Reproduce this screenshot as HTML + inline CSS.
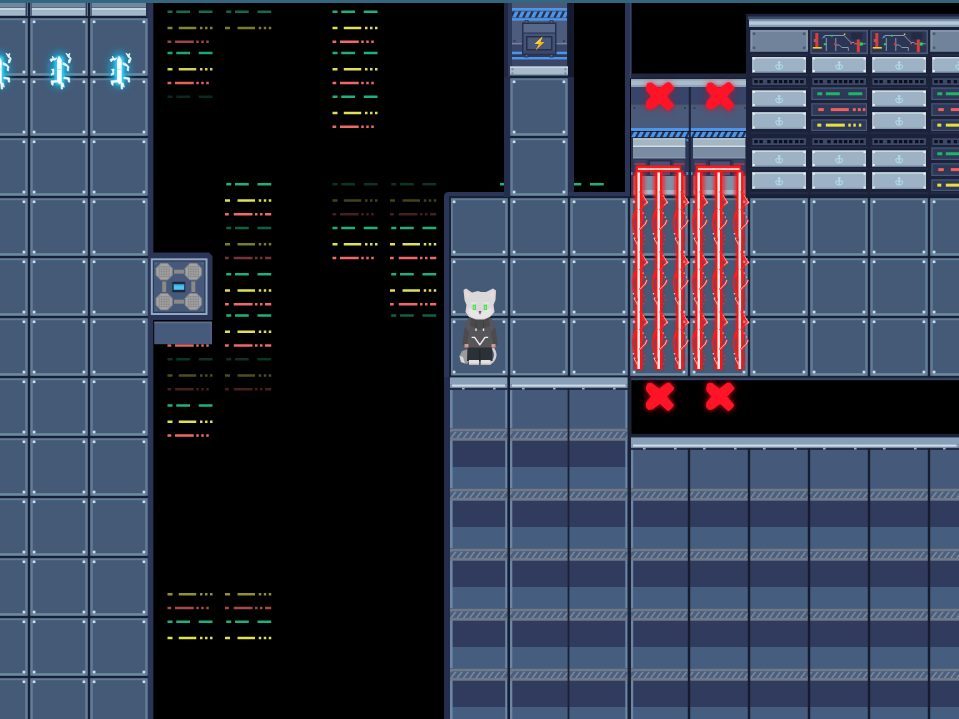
<!DOCTYPE html>
<html lang="en"><head><meta charset="utf-8"><title>scene</title>
<style>
html,body{margin:0;padding:0;background:#000;overflow:hidden;font-family:"Liberation Sans",sans-serif}
svg{display:block}
</style></head><body>
<svg width="959" height="719" viewBox="0 0 959 719">

<defs>
<pattern id="tile" patternUnits="userSpaceOnUse" x="29" y="17" width="60" height="60">
  <rect width="60" height="60" fill="#445a76"/>
  <rect x="0" y="0" width="60" height="3.2" fill="#607c97"/>
  <rect x="0" y="56.2" width="60" height="3.8" fill="#6a8aa0"/>
  <rect x="0" y="0" width="3.8" height="60" fill="#607c97"/>
  <rect x="56.2" y="0" width="3.8" height="60" fill="#607c97"/>
  <rect x="0" y="0" width="60" height="1.2" fill="#172034"/>
  <rect x="0" y="58.8" width="60" height="1.2" fill="#172034"/>
  <rect x="0" y="0" width="1.2" height="60" fill="#172034"/>
  <rect x="58.8" y="0" width="1.2" height="60" fill="#172034"/>
  <rect x="3.8" y="3.5" width="2.6" height="2.6" fill="#cfe0ee"/>
  <rect x="53.6" y="3.5" width="2.6" height="2.6" fill="#cfe0ee"/>
  <rect x="3.8" y="53.7" width="2.6" height="2.6" fill="#cfe0ee"/>
  <rect x="53.6" y="53.7" width="2.6" height="2.6" fill="#cfe0ee"/>
</pattern>
<pattern id="hazb" patternUnits="userSpaceOnUse" x="0" y="0" width="6.25" height="6.5">
  <rect width="6.25" height="6.5" fill="#2b3555"/>
  <path d="M-1,6.5 L2.2,0 L5.4,0 L2.2,6.5 Z M5.25,6.5 L8.45,0 L11.65,0 L8.45,6.5 Z M-7.25,6.5 L-4.05,0 L-0.85,0 L-4.05,6.5 Z" fill="#4c96ea"/>
</pattern>
<pattern id="hazg" patternUnits="userSpaceOnUse" x="0" y="0" width="6.25" height="6">
  <rect width="6.25" height="6" fill="#4d5873"/>
  <path d="M-1,6 L2,0 L4.6,0 L1.6,6 Z M5.25,6 L8.25,0 L10.85,0 L7.85,6 Z M-7.25,6 L-4.25,0 L-1.65,0 L-4.65,6 Z" fill="#8892a0"/>
</pattern>
<filter id="glow" x="-50%" y="-50%" width="200%" height="200%"><feGaussianBlur stdDeviation="2.2"/></filter>
<filter id="glow1" x="-50%" y="-50%" width="200%" height="200%"><feGaussianBlur stdDeviation="1.2"/></filter>
<filter id="glow3" x="-80%" y="-80%" width="260%" height="260%"><feGaussianBlur stdDeviation="4"/></filter>
</defs>

<rect x="0" y="0" width="959" height="719" fill="#000"/>
<rect x="167.5" y="10.5" width="5" height="2.5" fill="#136d4e"/>
<rect x="176.25" y="10.5" width="13.75" height="2.5" fill="#136d4e"/>
<rect x="198.75" y="10.5" width="13.75" height="2.5" fill="#136d4e"/>
<rect x="167.5" y="26.75" width="5" height="2.5" fill="#868630"/>
<rect x="178.75" y="26.75" width="17.5" height="2.5" fill="#868630"/>
<rect x="200" y="26.75" width="2.5" height="2.5" fill="#868630"/>
<rect x="205" y="26.75" width="2.5" height="2.5" fill="#868630"/>
<rect x="210" y="26.75" width="2.5" height="2.5" fill="#868630"/>
<rect x="167.5" y="40.5" width="3.75" height="2.5" fill="#9e4444"/>
<rect x="175" y="40.5" width="18.75" height="2.5" fill="#9e4444"/>
<rect x="196.25" y="40.5" width="2.5" height="2.5" fill="#9e4444"/>
<rect x="201.25" y="40.5" width="2.5" height="2.5" fill="#9e4444"/>
<rect x="206.25" y="40.5" width="2.5" height="2.5" fill="#9e4444"/>
<rect x="167.5" y="51.75" width="5" height="2.5" fill="#1da778"/>
<rect x="176.25" y="51.75" width="13.75" height="2.5" fill="#1da778"/>
<rect x="198.75" y="51.75" width="13.75" height="2.5" fill="#1da778"/>
<rect x="167.5" y="68" width="5" height="2.5" fill="#d4d44c"/>
<rect x="178.75" y="68" width="17.5" height="2.5" fill="#d4d44c"/>
<rect x="200" y="68" width="2.5" height="2.5" fill="#d4d44c"/>
<rect x="205" y="68" width="2.5" height="2.5" fill="#d4d44c"/>
<rect x="210" y="68" width="2.5" height="2.5" fill="#d4d44c"/>
<rect x="167.5" y="81.75" width="3.75" height="2.5" fill="#e46262"/>
<rect x="175" y="81.75" width="18.75" height="2.5" fill="#e46262"/>
<rect x="196.25" y="81.75" width="2.5" height="2.5" fill="#e46262"/>
<rect x="201.25" y="81.75" width="2.5" height="2.5" fill="#e46262"/>
<rect x="206.25" y="81.75" width="2.5" height="2.5" fill="#e46262"/>
<rect x="167.5" y="95.5" width="5" height="2.5" fill="#072c1f"/>
<rect x="176.25" y="95.5" width="13.75" height="2.5" fill="#072c1f"/>
<rect x="198.75" y="95.5" width="13.75" height="2.5" fill="#072c1f"/>
<rect x="167.5" y="344.25" width="3.75" height="2.5" fill="#e46262"/>
<rect x="175" y="344.25" width="18.75" height="2.5" fill="#e46262"/>
<rect x="196.25" y="344.25" width="2.5" height="2.5" fill="#e46262"/>
<rect x="201.25" y="344.25" width="2.5" height="2.5" fill="#e46262"/>
<rect x="206.25" y="344.25" width="2.5" height="2.5" fill="#e46262"/>
<rect x="167.5" y="358" width="5" height="2.5" fill="#093426"/>
<rect x="176.25" y="358" width="13.75" height="2.5" fill="#093426"/>
<rect x="198.75" y="358" width="13.75" height="2.5" fill="#093426"/>
<rect x="167.5" y="374.25" width="5" height="2.5" fill="#4e4e1c"/>
<rect x="178.75" y="374.25" width="17.5" height="2.5" fill="#4e4e1c"/>
<rect x="200" y="374.25" width="2.5" height="2.5" fill="#4e4e1c"/>
<rect x="205" y="374.25" width="2.5" height="2.5" fill="#4e4e1c"/>
<rect x="210" y="374.25" width="2.5" height="2.5" fill="#4e4e1c"/>
<rect x="167.5" y="388" width="3.75" height="2.5" fill="#481f1f"/>
<rect x="175" y="388" width="18.75" height="2.5" fill="#481f1f"/>
<rect x="196.25" y="388" width="2.5" height="2.5" fill="#481f1f"/>
<rect x="201.25" y="388" width="2.5" height="2.5" fill="#481f1f"/>
<rect x="206.25" y="388" width="2.5" height="2.5" fill="#481f1f"/>
<rect x="167.5" y="404.25" width="5" height="2.5" fill="#1fb07f"/>
<rect x="176.25" y="404.25" width="13.75" height="2.5" fill="#1fb07f"/>
<rect x="198.75" y="404.25" width="13.75" height="2.5" fill="#1fb07f"/>
<rect x="167.5" y="420.5" width="5" height="2.5" fill="#e0e050"/>
<rect x="178.75" y="420.5" width="17.5" height="2.5" fill="#e0e050"/>
<rect x="200" y="420.5" width="2.5" height="2.5" fill="#e0e050"/>
<rect x="205" y="420.5" width="2.5" height="2.5" fill="#e0e050"/>
<rect x="210" y="420.5" width="2.5" height="2.5" fill="#e0e050"/>
<rect x="167.5" y="434.25" width="3.75" height="2.5" fill="#f06868"/>
<rect x="175" y="434.25" width="18.75" height="2.5" fill="#f06868"/>
<rect x="196.25" y="434.25" width="2.5" height="2.5" fill="#f06868"/>
<rect x="201.25" y="434.25" width="2.5" height="2.5" fill="#f06868"/>
<rect x="206.25" y="434.25" width="2.5" height="2.5" fill="#f06868"/>
<rect x="167.5" y="593" width="5" height="2.5" fill="#919134"/>
<rect x="178.75" y="593" width="17.5" height="2.5" fill="#919134"/>
<rect x="200" y="593" width="2.5" height="2.5" fill="#919134"/>
<rect x="205" y="593" width="2.5" height="2.5" fill="#919134"/>
<rect x="210" y="593" width="2.5" height="2.5" fill="#919134"/>
<rect x="167.5" y="606.75" width="3.75" height="2.5" fill="#a84848"/>
<rect x="175" y="606.75" width="18.75" height="2.5" fill="#a84848"/>
<rect x="196.25" y="606.75" width="2.5" height="2.5" fill="#a84848"/>
<rect x="201.25" y="606.75" width="2.5" height="2.5" fill="#a84848"/>
<rect x="206.25" y="606.75" width="2.5" height="2.5" fill="#a84848"/>
<rect x="167.5" y="620.5" width="5" height="2.5" fill="#1fb07f"/>
<rect x="176.25" y="620.5" width="13.75" height="2.5" fill="#1fb07f"/>
<rect x="198.75" y="620.5" width="13.75" height="2.5" fill="#1fb07f"/>
<rect x="167.5" y="636.75" width="5" height="2.5" fill="#e0e050"/>
<rect x="178.75" y="636.75" width="17.5" height="2.5" fill="#e0e050"/>
<rect x="200" y="636.75" width="2.5" height="2.5" fill="#e0e050"/>
<rect x="205" y="636.75" width="2.5" height="2.5" fill="#e0e050"/>
<rect x="210" y="636.75" width="2.5" height="2.5" fill="#e0e050"/>
<rect x="226.25" y="10.5" width="5" height="2.5" fill="#12694c"/>
<rect x="235" y="10.5" width="13.75" height="2.5" fill="#12694c"/>
<rect x="257.5" y="10.5" width="13.75" height="2.5" fill="#12694c"/>
<rect x="225" y="26.75" width="5" height="2.5" fill="#7b7b2c"/>
<rect x="237.5" y="26.75" width="17.5" height="2.5" fill="#7b7b2c"/>
<rect x="258.75" y="26.75" width="2.5" height="2.5" fill="#7b7b2c"/>
<rect x="263.75" y="26.75" width="2.5" height="2.5" fill="#7b7b2c"/>
<rect x="268.75" y="26.75" width="2.5" height="2.5" fill="#7b7b2c"/>
<rect x="226.25" y="183" width="5" height="2.5" fill="#1fb07f"/>
<rect x="235" y="183" width="13.75" height="2.5" fill="#1fb07f"/>
<rect x="257.5" y="183" width="13.75" height="2.5" fill="#1fb07f"/>
<rect x="225" y="199.25" width="5" height="2.5" fill="#e0e050"/>
<rect x="237.5" y="199.25" width="17.5" height="2.5" fill="#e0e050"/>
<rect x="258.75" y="199.25" width="2.5" height="2.5" fill="#e0e050"/>
<rect x="263.75" y="199.25" width="2.5" height="2.5" fill="#e0e050"/>
<rect x="268.75" y="199.25" width="2.5" height="2.5" fill="#e0e050"/>
<rect x="225" y="213" width="3.75" height="2.5" fill="#f06868"/>
<rect x="233.75" y="213" width="18.75" height="2.5" fill="#f06868"/>
<rect x="255" y="213" width="2.5" height="2.5" fill="#f06868"/>
<rect x="260" y="213" width="2.5" height="2.5" fill="#f06868"/>
<rect x="265" y="213" width="6.25" height="2.5" fill="#f06868"/>
<rect x="226.25" y="226.75" width="5" height="2.5" fill="#116045"/>
<rect x="235" y="226.75" width="13.75" height="2.5" fill="#116045"/>
<rect x="257.5" y="226.75" width="13.75" height="2.5" fill="#116045"/>
<rect x="225" y="243" width="5" height="2.5" fill="#7b7b2c"/>
<rect x="237.5" y="243" width="17.5" height="2.5" fill="#7b7b2c"/>
<rect x="258.75" y="243" width="2.5" height="2.5" fill="#7b7b2c"/>
<rect x="263.75" y="243" width="2.5" height="2.5" fill="#7b7b2c"/>
<rect x="268.75" y="243" width="2.5" height="2.5" fill="#7b7b2c"/>
<rect x="225" y="256.75" width="3.75" height="2.5" fill="#783434"/>
<rect x="233.75" y="256.75" width="18.75" height="2.5" fill="#783434"/>
<rect x="255" y="256.75" width="2.5" height="2.5" fill="#783434"/>
<rect x="260" y="256.75" width="2.5" height="2.5" fill="#783434"/>
<rect x="265" y="256.75" width="6.25" height="2.5" fill="#783434"/>
<rect x="226.25" y="273" width="5" height="2.5" fill="#1fb07f"/>
<rect x="235" y="273" width="13.75" height="2.5" fill="#1fb07f"/>
<rect x="257.5" y="273" width="13.75" height="2.5" fill="#1fb07f"/>
<rect x="225" y="289.25" width="5" height="2.5" fill="#e0e050"/>
<rect x="237.5" y="289.25" width="17.5" height="2.5" fill="#e0e050"/>
<rect x="258.75" y="289.25" width="2.5" height="2.5" fill="#e0e050"/>
<rect x="263.75" y="289.25" width="2.5" height="2.5" fill="#e0e050"/>
<rect x="268.75" y="289.25" width="2.5" height="2.5" fill="#e0e050"/>
<rect x="225" y="303" width="3.75" height="2.5" fill="#f06868"/>
<rect x="233.75" y="303" width="18.75" height="2.5" fill="#f06868"/>
<rect x="255" y="303" width="2.5" height="2.5" fill="#f06868"/>
<rect x="260" y="303" width="2.5" height="2.5" fill="#f06868"/>
<rect x="265" y="303" width="6.25" height="2.5" fill="#f06868"/>
<rect x="226.25" y="314.25" width="5" height="2.5" fill="#1fb07f"/>
<rect x="235" y="314.25" width="13.75" height="2.5" fill="#1fb07f"/>
<rect x="257.5" y="314.25" width="13.75" height="2.5" fill="#1fb07f"/>
<rect x="225" y="330.5" width="5" height="2.5" fill="#e0e050"/>
<rect x="237.5" y="330.5" width="17.5" height="2.5" fill="#e0e050"/>
<rect x="258.75" y="330.5" width="2.5" height="2.5" fill="#e0e050"/>
<rect x="263.75" y="330.5" width="2.5" height="2.5" fill="#e0e050"/>
<rect x="268.75" y="330.5" width="2.5" height="2.5" fill="#e0e050"/>
<rect x="225" y="344.25" width="3.75" height="2.5" fill="#f06868"/>
<rect x="233.75" y="344.25" width="18.75" height="2.5" fill="#f06868"/>
<rect x="255" y="344.25" width="2.5" height="2.5" fill="#f06868"/>
<rect x="260" y="344.25" width="2.5" height="2.5" fill="#f06868"/>
<rect x="265" y="344.25" width="6.25" height="2.5" fill="#f06868"/>
<rect x="226.25" y="358" width="5" height="2.5" fill="#093426"/>
<rect x="235" y="358" width="13.75" height="2.5" fill="#093426"/>
<rect x="257.5" y="358" width="13.75" height="2.5" fill="#093426"/>
<rect x="225" y="374.25" width="5" height="2.5" fill="#4e4e1c"/>
<rect x="237.5" y="374.25" width="17.5" height="2.5" fill="#4e4e1c"/>
<rect x="258.75" y="374.25" width="2.5" height="2.5" fill="#4e4e1c"/>
<rect x="263.75" y="374.25" width="2.5" height="2.5" fill="#4e4e1c"/>
<rect x="268.75" y="374.25" width="2.5" height="2.5" fill="#4e4e1c"/>
<rect x="225" y="388" width="3.75" height="2.5" fill="#481f1f"/>
<rect x="233.75" y="388" width="18.75" height="2.5" fill="#481f1f"/>
<rect x="255" y="388" width="2.5" height="2.5" fill="#481f1f"/>
<rect x="260" y="388" width="2.5" height="2.5" fill="#481f1f"/>
<rect x="265" y="388" width="6.25" height="2.5" fill="#481f1f"/>
<rect x="225" y="593" width="5" height="2.5" fill="#919134"/>
<rect x="237.5" y="593" width="17.5" height="2.5" fill="#919134"/>
<rect x="258.75" y="593" width="2.5" height="2.5" fill="#919134"/>
<rect x="263.75" y="593" width="2.5" height="2.5" fill="#919134"/>
<rect x="268.75" y="593" width="2.5" height="2.5" fill="#919134"/>
<rect x="225" y="606.75" width="3.75" height="2.5" fill="#a84848"/>
<rect x="233.75" y="606.75" width="18.75" height="2.5" fill="#a84848"/>
<rect x="255" y="606.75" width="2.5" height="2.5" fill="#a84848"/>
<rect x="260" y="606.75" width="2.5" height="2.5" fill="#a84848"/>
<rect x="265" y="606.75" width="6.25" height="2.5" fill="#a84848"/>
<rect x="226.25" y="620.5" width="5" height="2.5" fill="#1fb07f"/>
<rect x="235" y="620.5" width="13.75" height="2.5" fill="#1fb07f"/>
<rect x="257.5" y="620.5" width="13.75" height="2.5" fill="#1fb07f"/>
<rect x="225" y="636.75" width="5" height="2.5" fill="#e0e050"/>
<rect x="237.5" y="636.75" width="17.5" height="2.5" fill="#e0e050"/>
<rect x="258.75" y="636.75" width="2.5" height="2.5" fill="#e0e050"/>
<rect x="263.75" y="636.75" width="2.5" height="2.5" fill="#e0e050"/>
<rect x="268.75" y="636.75" width="2.5" height="2.5" fill="#e0e050"/>
<rect x="332.5" y="10.5" width="5" height="2.5" fill="#1fb07f"/>
<rect x="341.25" y="10.5" width="13.75" height="2.5" fill="#1fb07f"/>
<rect x="363.75" y="10.5" width="13.75" height="2.5" fill="#1fb07f"/>
<rect x="332.5" y="26.75" width="5" height="2.5" fill="#e0e050"/>
<rect x="343.75" y="26.75" width="17.5" height="2.5" fill="#e0e050"/>
<rect x="365" y="26.75" width="2.5" height="2.5" fill="#e0e050"/>
<rect x="370" y="26.75" width="2.5" height="2.5" fill="#e0e050"/>
<rect x="375" y="26.75" width="2.5" height="2.5" fill="#e0e050"/>
<rect x="332.5" y="40.5" width="3.75" height="2.5" fill="#f06868"/>
<rect x="340" y="40.5" width="18.75" height="2.5" fill="#f06868"/>
<rect x="361.25" y="40.5" width="2.5" height="2.5" fill="#f06868"/>
<rect x="366.25" y="40.5" width="2.5" height="2.5" fill="#f06868"/>
<rect x="371.25" y="40.5" width="2.5" height="2.5" fill="#f06868"/>
<rect x="332.5" y="51.75" width="5" height="2.5" fill="#1fb07f"/>
<rect x="341.25" y="51.75" width="13.75" height="2.5" fill="#1fb07f"/>
<rect x="363.75" y="51.75" width="13.75" height="2.5" fill="#1fb07f"/>
<rect x="332.5" y="68" width="5" height="2.5" fill="#e0e050"/>
<rect x="343.75" y="68" width="17.5" height="2.5" fill="#e0e050"/>
<rect x="365" y="68" width="2.5" height="2.5" fill="#e0e050"/>
<rect x="370" y="68" width="2.5" height="2.5" fill="#e0e050"/>
<rect x="375" y="68" width="2.5" height="2.5" fill="#e0e050"/>
<rect x="332.5" y="81.75" width="3.75" height="2.5" fill="#f06868"/>
<rect x="340" y="81.75" width="18.75" height="2.5" fill="#f06868"/>
<rect x="361.25" y="81.75" width="2.5" height="2.5" fill="#f06868"/>
<rect x="366.25" y="81.75" width="2.5" height="2.5" fill="#f06868"/>
<rect x="371.25" y="81.75" width="2.5" height="2.5" fill="#f06868"/>
<rect x="332.5" y="95.5" width="5" height="2.5" fill="#1fb07f"/>
<rect x="341.25" y="95.5" width="13.75" height="2.5" fill="#1fb07f"/>
<rect x="363.75" y="95.5" width="13.75" height="2.5" fill="#1fb07f"/>
<rect x="332.5" y="111.75" width="5" height="2.5" fill="#e0e050"/>
<rect x="343.75" y="111.75" width="17.5" height="2.5" fill="#e0e050"/>
<rect x="365" y="111.75" width="2.5" height="2.5" fill="#e0e050"/>
<rect x="370" y="111.75" width="2.5" height="2.5" fill="#e0e050"/>
<rect x="375" y="111.75" width="2.5" height="2.5" fill="#e0e050"/>
<rect x="332.5" y="125.5" width="3.75" height="2.5" fill="#f06868"/>
<rect x="340" y="125.5" width="18.75" height="2.5" fill="#f06868"/>
<rect x="361.25" y="125.5" width="2.5" height="2.5" fill="#f06868"/>
<rect x="366.25" y="125.5" width="2.5" height="2.5" fill="#f06868"/>
<rect x="371.25" y="125.5" width="2.5" height="2.5" fill="#f06868"/>
<rect x="332.5" y="183" width="5" height="2.5" fill="#093426"/>
<rect x="341.25" y="183" width="13.75" height="2.5" fill="#093426"/>
<rect x="363.75" y="183" width="13.75" height="2.5" fill="#093426"/>
<rect x="332.5" y="199.25" width="5" height="2.5" fill="#434318"/>
<rect x="343.75" y="199.25" width="17.5" height="2.5" fill="#434318"/>
<rect x="365" y="199.25" width="2.5" height="2.5" fill="#434318"/>
<rect x="370" y="199.25" width="2.5" height="2.5" fill="#434318"/>
<rect x="375" y="199.25" width="2.5" height="2.5" fill="#434318"/>
<rect x="332.5" y="213" width="3.75" height="2.5" fill="#481f1f"/>
<rect x="340" y="213" width="18.75" height="2.5" fill="#481f1f"/>
<rect x="361.25" y="213" width="2.5" height="2.5" fill="#481f1f"/>
<rect x="366.25" y="213" width="2.5" height="2.5" fill="#481f1f"/>
<rect x="371.25" y="213" width="2.5" height="2.5" fill="#481f1f"/>
<rect x="332.5" y="226.75" width="5" height="2.5" fill="#1fb07f"/>
<rect x="341.25" y="226.75" width="13.75" height="2.5" fill="#1fb07f"/>
<rect x="363.75" y="226.75" width="13.75" height="2.5" fill="#1fb07f"/>
<rect x="332.5" y="243" width="5" height="2.5" fill="#e0e050"/>
<rect x="343.75" y="243" width="17.5" height="2.5" fill="#e0e050"/>
<rect x="365" y="243" width="2.5" height="2.5" fill="#e0e050"/>
<rect x="370" y="243" width="2.5" height="2.5" fill="#e0e050"/>
<rect x="375" y="243" width="2.5" height="2.5" fill="#e0e050"/>
<rect x="332.5" y="256.75" width="3.75" height="2.5" fill="#f06868"/>
<rect x="340" y="256.75" width="18.75" height="2.5" fill="#f06868"/>
<rect x="361.25" y="256.75" width="2.5" height="2.5" fill="#f06868"/>
<rect x="366.25" y="256.75" width="2.5" height="2.5" fill="#f06868"/>
<rect x="371.25" y="256.75" width="2.5" height="2.5" fill="#f06868"/>
<rect x="391.25" y="183" width="5" height="2.5" fill="#093426"/>
<rect x="400" y="183" width="13.75" height="2.5" fill="#093426"/>
<rect x="422.5" y="183" width="13.75" height="2.5" fill="#093426"/>
<rect x="390" y="199.25" width="5" height="2.5" fill="#434318"/>
<rect x="402.5" y="199.25" width="17.5" height="2.5" fill="#434318"/>
<rect x="423.75" y="199.25" width="2.5" height="2.5" fill="#434318"/>
<rect x="428.75" y="199.25" width="2.5" height="2.5" fill="#434318"/>
<rect x="433.75" y="199.25" width="2.5" height="2.5" fill="#434318"/>
<rect x="390" y="213" width="3.75" height="2.5" fill="#481f1f"/>
<rect x="398.75" y="213" width="18.75" height="2.5" fill="#481f1f"/>
<rect x="420" y="213" width="2.5" height="2.5" fill="#481f1f"/>
<rect x="425" y="213" width="2.5" height="2.5" fill="#481f1f"/>
<rect x="430" y="213" width="6.25" height="2.5" fill="#481f1f"/>
<rect x="391.25" y="226.75" width="5" height="2.5" fill="#1fb07f"/>
<rect x="400" y="226.75" width="13.75" height="2.5" fill="#1fb07f"/>
<rect x="422.5" y="226.75" width="13.75" height="2.5" fill="#1fb07f"/>
<rect x="390" y="243" width="5" height="2.5" fill="#e0e050"/>
<rect x="402.5" y="243" width="17.5" height="2.5" fill="#e0e050"/>
<rect x="423.75" y="243" width="2.5" height="2.5" fill="#e0e050"/>
<rect x="428.75" y="243" width="2.5" height="2.5" fill="#e0e050"/>
<rect x="433.75" y="243" width="2.5" height="2.5" fill="#e0e050"/>
<rect x="390" y="256.75" width="3.75" height="2.5" fill="#f06868"/>
<rect x="398.75" y="256.75" width="18.75" height="2.5" fill="#f06868"/>
<rect x="420" y="256.75" width="2.5" height="2.5" fill="#f06868"/>
<rect x="425" y="256.75" width="2.5" height="2.5" fill="#f06868"/>
<rect x="430" y="256.75" width="6.25" height="2.5" fill="#f06868"/>
<rect x="391.25" y="273" width="5" height="2.5" fill="#1fb07f"/>
<rect x="400" y="273" width="13.75" height="2.5" fill="#1fb07f"/>
<rect x="422.5" y="273" width="13.75" height="2.5" fill="#1fb07f"/>
<rect x="390" y="289.25" width="5" height="2.5" fill="#e0e050"/>
<rect x="402.5" y="289.25" width="17.5" height="2.5" fill="#e0e050"/>
<rect x="423.75" y="289.25" width="2.5" height="2.5" fill="#e0e050"/>
<rect x="428.75" y="289.25" width="2.5" height="2.5" fill="#e0e050"/>
<rect x="433.75" y="289.25" width="2.5" height="2.5" fill="#e0e050"/>
<rect x="390" y="303" width="3.75" height="2.5" fill="#f06868"/>
<rect x="398.75" y="303" width="18.75" height="2.5" fill="#f06868"/>
<rect x="420" y="303" width="2.5" height="2.5" fill="#f06868"/>
<rect x="425" y="303" width="2.5" height="2.5" fill="#f06868"/>
<rect x="430" y="303" width="6.25" height="2.5" fill="#f06868"/>
<rect x="391.25" y="314.25" width="5" height="2.5" fill="#116045"/>
<rect x="400" y="314.25" width="13.75" height="2.5" fill="#116045"/>
<rect x="422.5" y="314.25" width="13.75" height="2.5" fill="#116045"/>
<rect x="500" y="183" width="5" height="2.5" fill="#1fb07f"/>
<rect x="508.75" y="183" width="13.75" height="2.5" fill="#1fb07f"/>
<rect x="531.25" y="183" width="13.75" height="2.5" fill="#1fb07f"/>
<rect x="558.75" y="183" width="5" height="2.5" fill="#1fb07f"/>
<rect x="567.5" y="183" width="13.75" height="2.5" fill="#1fb07f"/>
<rect x="590" y="183" width="13.75" height="2.5" fill="#1fb07f"/>
<rect x="0" y="17" width="149" height="702" fill="url(#tile)"/>
<rect x="0" y="3" width="149" height="14" fill="#6f87a1"/>
<rect x="0" y="7" width="149" height="1" fill="#566b87"/>
<rect x="0" y="8" width="149" height="2.5" fill="#c4d4df"/>
<rect x="0" y="10.5" width="149" height="4.5" fill="#a2b8ca"/>
<rect x="0" y="15" width="149" height="1" fill="#7d91a9"/>
<rect x="0" y="16" width="149" height="2" fill="#172034"/>
<rect x="25.5" y="3" width="6" height="13" fill="#5b7290"/>
<rect x="25.8" y="3" width="1" height="13" fill="#27304a"/>
<rect x="28" y="3" width="2" height="13" fill="#172034"/>
<rect x="30.8" y="3" width="0.8" height="13" fill="#3a4866"/>
<rect x="85.5" y="3" width="6" height="13" fill="#5b7290"/>
<rect x="85.8" y="3" width="1" height="13" fill="#27304a"/>
<rect x="88" y="3" width="2" height="13" fill="#172034"/>
<rect x="90.8" y="3" width="0.8" height="13" fill="#3a4866"/>
<rect x="146" y="3" width="2" height="14" fill="#27304a"/>
<rect x="148" y="3" width="5.3" height="716" fill="#2a3557"/>
<path d="M148,252.5 H209 L212.5,256 V320 H148 Z" fill="#2a3557"/>
<rect x="150.8" y="258.3" width="56.7" height="56.7" fill="#8fa9c2"/>
<rect x="152.8" y="260.3" width="52.7" height="52.7" fill="#2d3859"/>
<rect x="154" y="261.5" width="50.3" height="50.3" fill="#46597a"/>
<rect x="174" y="269.7" width="10" height="4" fill="#8a8a86"/>
<rect x="174" y="299.7" width="10" height="4" fill="#8a8a86"/>
<rect x="162.2" y="281.5" width="4" height="10.5" fill="#8a8a86"/>
<rect x="191.3" y="281.5" width="4" height="10.5" fill="#8a8a86"/>
<polygon points="160.64,263.10 167.76,263.10 172.80,268.14 172.80,275.26 167.76,280.30 160.64,280.30 155.60,275.26 155.60,268.14" fill="#87878b"/>
<polygon points="161.05,264.10 167.35,264.10 171.80,268.55 171.80,274.85 167.35,279.30 161.05,279.30 156.60,274.85 156.60,268.55" fill="#a3a3a3"/>
<rect x="158.8" y="266.2" width="0.8" height="11" fill="#8b8b8e"/>
<rect x="158.7" y="266.3" width="11" height="0.8" fill="#8b8b8e"/>
<rect x="161.3" y="266.2" width="0.8" height="11" fill="#8b8b8e"/>
<rect x="158.7" y="268.8" width="11" height="0.8" fill="#8b8b8e"/>
<rect x="163.8" y="266.2" width="0.8" height="11" fill="#8b8b8e"/>
<rect x="158.7" y="271.3" width="11" height="0.8" fill="#8b8b8e"/>
<rect x="166.3" y="266.2" width="0.8" height="11" fill="#8b8b8e"/>
<rect x="158.7" y="273.8" width="11" height="0.8" fill="#8b8b8e"/>
<rect x="168.8" y="266.2" width="0.8" height="11" fill="#8b8b8e"/>
<rect x="158.7" y="276.3" width="11" height="0.8" fill="#8b8b8e"/>
<polygon points="160.64,293.10 167.76,293.10 172.80,298.14 172.80,305.26 167.76,310.30 160.64,310.30 155.60,305.26 155.60,298.14" fill="#87878b"/>
<polygon points="161.05,294.10 167.35,294.10 171.80,298.55 171.80,304.85 167.35,309.30 161.05,309.30 156.60,304.85 156.60,298.55" fill="#a3a3a3"/>
<rect x="158.8" y="296.2" width="0.8" height="11" fill="#8b8b8e"/>
<rect x="158.7" y="296.3" width="11" height="0.8" fill="#8b8b8e"/>
<rect x="161.3" y="296.2" width="0.8" height="11" fill="#8b8b8e"/>
<rect x="158.7" y="298.8" width="11" height="0.8" fill="#8b8b8e"/>
<rect x="163.8" y="296.2" width="0.8" height="11" fill="#8b8b8e"/>
<rect x="158.7" y="301.3" width="11" height="0.8" fill="#8b8b8e"/>
<rect x="166.3" y="296.2" width="0.8" height="11" fill="#8b8b8e"/>
<rect x="158.7" y="303.8" width="11" height="0.8" fill="#8b8b8e"/>
<rect x="168.8" y="296.2" width="0.8" height="11" fill="#8b8b8e"/>
<rect x="158.7" y="306.3" width="11" height="0.8" fill="#8b8b8e"/>
<polygon points="189.74,263.10 196.86,263.10 201.90,268.14 201.90,275.26 196.86,280.30 189.74,280.30 184.70,275.26 184.70,268.14" fill="#87878b"/>
<polygon points="190.15,264.10 196.45,264.10 200.90,268.55 200.90,274.85 196.45,279.30 190.15,279.30 185.70,274.85 185.70,268.55" fill="#a3a3a3"/>
<rect x="187.9" y="266.2" width="0.8" height="11" fill="#8b8b8e"/>
<rect x="187.8" y="266.3" width="11" height="0.8" fill="#8b8b8e"/>
<rect x="190.4" y="266.2" width="0.8" height="11" fill="#8b8b8e"/>
<rect x="187.8" y="268.8" width="11" height="0.8" fill="#8b8b8e"/>
<rect x="192.9" y="266.2" width="0.8" height="11" fill="#8b8b8e"/>
<rect x="187.8" y="271.3" width="11" height="0.8" fill="#8b8b8e"/>
<rect x="195.4" y="266.2" width="0.8" height="11" fill="#8b8b8e"/>
<rect x="187.8" y="273.8" width="11" height="0.8" fill="#8b8b8e"/>
<rect x="197.9" y="266.2" width="0.8" height="11" fill="#8b8b8e"/>
<rect x="187.8" y="276.3" width="11" height="0.8" fill="#8b8b8e"/>
<polygon points="189.74,293.10 196.86,293.10 201.90,298.14 201.90,305.26 196.86,310.30 189.74,310.30 184.70,305.26 184.70,298.14" fill="#87878b"/>
<polygon points="190.15,294.10 196.45,294.10 200.90,298.55 200.90,304.85 196.45,309.30 190.15,309.30 185.70,304.85 185.70,298.55" fill="#a3a3a3"/>
<rect x="187.9" y="296.2" width="0.8" height="11" fill="#8b8b8e"/>
<rect x="187.8" y="296.3" width="11" height="0.8" fill="#8b8b8e"/>
<rect x="190.4" y="296.2" width="0.8" height="11" fill="#8b8b8e"/>
<rect x="187.8" y="298.8" width="11" height="0.8" fill="#8b8b8e"/>
<rect x="192.9" y="296.2" width="0.8" height="11" fill="#8b8b8e"/>
<rect x="187.8" y="301.3" width="11" height="0.8" fill="#8b8b8e"/>
<rect x="195.4" y="296.2" width="0.8" height="11" fill="#8b8b8e"/>
<rect x="187.8" y="303.8" width="11" height="0.8" fill="#8b8b8e"/>
<rect x="197.9" y="296.2" width="0.8" height="11" fill="#8b8b8e"/>
<rect x="187.8" y="306.3" width="11" height="0.8" fill="#8b8b8e"/>
<rect x="172.3" y="281.8" width="13" height="10.5" fill="#20283d"/>
<rect x="173.7" y="284.2" width="10.5" height="5.6" fill="#4fc3f2"/>
<rect x="173.7" y="284.2" width="10.5" height="1.2" fill="#2d8fc5"/>
<rect x="155.5" y="263" width="1.3" height="1.3" fill="#2e8f92"/>
<rect x="201.8" y="263" width="1.3" height="1.3" fill="#2e8f92"/>
<rect x="155.5" y="309.5" width="1.3" height="1.3" fill="#2e8f92"/>
<rect x="201.8" y="309.5" width="1.3" height="1.3" fill="#2e8f92"/>
<rect x="154.2" y="321.7" width="57.6" height="22.5" fill="#465a7c"/>
<rect x="154.2" y="321.7" width="57.6" height="1.5" fill="#5a7192"/>
<rect x="210.6" y="321.7" width="1.2" height="22.5" fill="#56698a"/>
<rect x="449" y="197" width="510" height="180" fill="url(#tile)"/>
<rect x="509" y="77" width="60" height="120" fill="url(#tile)"/>
<path d="M444,719 V196.5 Q444,192 448.5,192 H504 V3 H510 V197 H450 V719 Z" fill="#2a3557"/>
<rect x="567.5" y="3" width="6.5" height="74" fill="#151b2f"/>
<rect x="568" y="77" width="6" height="120" fill="#242d4b"/>
<rect x="568.5" y="192" width="61.5" height="5" fill="#2a3557"/>
<rect x="625" y="3" width="5" height="194" fill="#2a3557"/>
<rect x="449" y="196" width="181" height="2" fill="#172034"/>
<rect x="449" y="196" width="2" height="181" fill="#172034"/>
<rect x="504" y="3" width="4" height="74" fill="#1f2741"/>
<rect x="508" y="3" width="4" height="74" fill="#2f395b"/>
<rect x="504" y="77" width="6" height="120" fill="#242d4b"/>
<rect x="512" y="3" width="55" height="74" fill="#4b5979"/>
<rect x="512" y="8" width="55" height="2.6" fill="#4c96ea"/>
<clipPath id="c1"><rect x="512" y="11.2" width="55" height="6.5"/></clipPath>
<g clip-path="url(#c1)">
<rect x="512" y="11.2" width="55" height="6.5" fill="#27304f"/>
<path d="M499.50,17.7 L502.70,11.2 L506.40,11.2 L503.20,17.7 Z M505.75,17.7 L508.95,11.2 L512.65,11.2 L509.45,17.7 Z M512.00,17.7 L515.20,11.2 L518.90,11.2 L515.70,17.7 Z M518.25,17.7 L521.45,11.2 L525.15,11.2 L521.95,17.7 Z M524.50,17.7 L527.70,11.2 L531.40,11.2 L528.20,17.7 Z M530.75,17.7 L533.95,11.2 L537.65,11.2 L534.45,17.7 Z M537.00,17.7 L540.20,11.2 L543.90,11.2 L540.70,17.7 Z M543.25,17.7 L546.45,11.2 L550.15,11.2 L546.95,17.7 Z M549.50,17.7 L552.70,11.2 L556.40,11.2 L553.20,17.7 Z M555.75,17.7 L558.95,11.2 L562.65,11.2 L559.45,17.7 Z M562.00,17.7 L565.20,11.2 L568.90,11.2 L565.70,17.7 Z M568.25,17.7 L571.45,11.2 L575.15,11.2 L571.95,17.7 Z" fill="#4c96ea"/>
</g>
<rect x="512" y="18.2" width="55" height="2.6" fill="#4c96ea"/>
<rect x="512" y="20.8" width="55" height="22.2" fill="#4d5b7c"/>
<rect x="512" y="43" width="55" height="1.6" fill="#77839a"/>
<rect x="512" y="44.6" width="55" height="7" fill="#3a4567"/>
<rect x="512" y="51.8" width="55" height="2.6" fill="#4c96ea"/>
<rect x="512" y="54.4" width="55" height="2.6" fill="#2e3858"/>
<rect x="512" y="57" width="55" height="2.6" fill="#4c96ea"/>
<rect x="512" y="59.6" width="55" height="6.9" fill="#3a4567"/>
<rect x="567" y="3" width="1.5" height="74" fill="#1b2238"/>
<rect x="510" y="66.5" width="58" height="9" fill="#a7bbca"/>
<rect x="510" y="66.5" width="58" height="1.5" fill="#c4d3dd"/>
<rect x="510" y="74" width="58" height="1.5" fill="#8298ae"/>
<rect x="510" y="75.5" width="58" height="2.5" fill="#172034"/>
<rect x="511.5" y="68.3" width="1.8" height="1.8" fill="#6f8398"/>
<rect x="564.5" y="68.3" width="1.8" height="1.8" fill="#6f8398"/>
<rect x="511.5" y="72.5" width="1.8" height="1.8" fill="#6f8398"/>
<rect x="564.5" y="72.5" width="1.8" height="1.8" fill="#6f8398"/>
<rect x="513.5" y="40" width="2" height="2" fill="#36405f"/>
<rect x="563" y="40" width="2" height="2" fill="#36405f"/>
<rect x="524.5" y="20.2" width="4" height="3.8" fill="#2a3350"/>
<rect x="549.5" y="20.2" width="4" height="3.8" fill="#2a3350"/>
<rect x="525.5" y="21" width="2" height="2" fill="#5a6b8c"/>
<rect x="550.5" y="21" width="2" height="2" fill="#5a6b8c"/>
<rect x="524.5" y="53" width="4" height="4.5" fill="#2a3350"/>
<rect x="549.5" y="53" width="4" height="4.5" fill="#2a3350"/>
<rect x="525.5" y="54.5" width="2" height="2" fill="#5a6b8c"/>
<rect x="550.5" y="54.5" width="2" height="2" fill="#5a6b8c"/>
<rect x="522" y="22.5" width="34.5" height="32.5" fill="#27304d"/>
<rect x="523.5" y="24" width="31.5" height="8.5" fill="#576889"/>
<rect x="523.5" y="33.5" width="31.5" height="20" fill="#44537a"/>
<rect x="523.5" y="50.5" width="31.5" height="3" fill="#3a4668"/>
<rect x="526" y="36" width="26.5" height="14.5" fill="#262e49"/>
<rect x="527.5" y="37.5" width="23.5" height="11.5" fill="#4a5878"/>
<path d="M542.6,36.4 L534.6,44 L538.8,44 L535.6,50.6 L544.4,42 L540.2,42 Z" fill="#f7b51d"/>
<path d="M542.6,36.4 L534.6,44 L538.8,44 L540.4,42 L540.2,42 Z" fill="#fbcf38"/>
<rect x="630" y="3" width="120" height="75" fill="#1f2741"/>
<rect x="632" y="3" width="114" height="70.5" fill="#000"/>
<rect x="746" y="3" width="4" height="11" fill="#000"/>
<rect x="630" y="3" width="1" height="75" fill="#3b4768"/>
<rect x="630" y="78" width="119" height="1" fill="#172034"/>
<rect x="631" y="79" width="117.5" height="8" fill="#a9bcc9"/>
<rect x="631" y="79" width="117.5" height="1.5" fill="#8da2b6"/>
<rect x="631" y="85" width="117.5" height="2" fill="#8fa4b8"/>
<rect x="631" y="87" width="117.5" height="17.5" fill="#384469"/>
<rect x="631" y="104.5" width="117.5" height="1.2" fill="#6b7b96"/>
<rect x="631" y="105.7" width="117.5" height="22.3" fill="#4a5a7a"/>
<rect x="631" y="128" width="117.5" height="3" fill="#4c96ea"/>
<clipPath id="c2"><rect x="631" y="131.5" width="117.5" height="6"/></clipPath>
<g clip-path="url(#c2)">
<rect x="631" y="131.5" width="117.5" height="6" fill="#27304f"/>
<path d="M618.50,137.5 L621.70,131.5 L625.40,131.5 L622.20,137.5 Z M624.75,137.5 L627.95,131.5 L631.65,131.5 L628.45,137.5 Z M631.00,137.5 L634.20,131.5 L637.90,131.5 L634.70,137.5 Z M637.25,137.5 L640.45,131.5 L644.15,131.5 L640.95,137.5 Z M643.50,137.5 L646.70,131.5 L650.40,131.5 L647.20,137.5 Z M649.75,137.5 L652.95,131.5 L656.65,131.5 L653.45,137.5 Z M656.00,137.5 L659.20,131.5 L662.90,131.5 L659.70,137.5 Z M662.25,137.5 L665.45,131.5 L669.15,131.5 L665.95,137.5 Z M668.50,137.5 L671.70,131.5 L675.40,131.5 L672.20,137.5 Z M674.75,137.5 L677.95,131.5 L681.65,131.5 L678.45,137.5 Z M681.00,137.5 L684.20,131.5 L687.90,131.5 L684.70,137.5 Z M687.25,137.5 L690.45,131.5 L694.15,131.5 L690.95,137.5 Z M693.50,137.5 L696.70,131.5 L700.40,131.5 L697.20,137.5 Z M699.75,137.5 L702.95,131.5 L706.65,131.5 L703.45,137.5 Z M706.00,137.5 L709.20,131.5 L712.90,131.5 L709.70,137.5 Z M712.25,137.5 L715.45,131.5 L719.15,131.5 L715.95,137.5 Z M718.50,137.5 L721.70,131.5 L725.40,131.5 L722.20,137.5 Z M724.75,137.5 L727.95,131.5 L731.65,131.5 L728.45,137.5 Z M731.00,137.5 L734.20,131.5 L737.90,131.5 L734.70,137.5 Z M737.25,137.5 L740.45,131.5 L744.15,131.5 L740.95,137.5 Z M743.50,137.5 L746.70,131.5 L750.40,131.5 L747.20,137.5 Z M749.75,137.5 L752.95,131.5 L756.65,131.5 L753.45,137.5 Z" fill="#4c96ea"/>
</g>
<rect x="631" y="137.5" width="117.5" height="59.5" fill="#2c3656"/>
<rect x="633.5" y="107" width="2" height="2" fill="#36405f"/>
<rect x="684" y="107" width="2" height="2" fill="#36405f"/>
<rect x="633" y="138.2" width="52.3" height="9" fill="#a5b6c3"/>
<rect x="633" y="138.2" width="52.3" height="1.2" fill="#b9c8d2"/>
<rect x="633" y="145.6" width="52.3" height="1.6" fill="#d3dfe6"/>
<rect x="633" y="147.2" width="52.3" height="11.2" fill="#7b8da3"/>
<rect x="633" y="157.4" width="52.3" height="1.2" fill="#90a1b6"/>
<rect x="633" y="158.6" width="52.3" height="17.4" fill="#2e3858"/>
<rect x="634.5" y="160" width="11.5" height="15" fill="#36426a"/>
<rect x="648.5" y="160" width="23" height="15" fill="#252d49"/>
<rect x="650" y="161.5" width="20" height="13.5" fill="#44537a"/>
<rect x="674" y="160" width="10.5" height="15" fill="#36426a"/>
<rect x="634.5" y="163.4" width="11" height="1.4" fill="#c63a34"/>
<rect x="673.5" y="163.4" width="11" height="1.4" fill="#c63a34"/>
<rect x="633.5" y="176" width="51.8" height="13.4" fill="#7f91a8"/>
<rect x="633.5" y="189.4" width="51.8" height="5.4" fill="#a5b6c6"/>
<rect x="633.5" y="194.8" width="51.8" height="1.2" fill="#3f4b6c"/>
<rect x="686.3" y="139" width="2" height="2.2" fill="#3f8fe0"/>
<rect x="686.3" y="172" width="2" height="3" fill="#3f8fe0"/>
<rect x="631" y="172" width="1.6" height="3" fill="#3f8fe0"/>
<rect x="693.5" y="107" width="2" height="2" fill="#36405f"/>
<rect x="744" y="107" width="2" height="2" fill="#36405f"/>
<rect x="693" y="138.2" width="52.3" height="9" fill="#a5b6c3"/>
<rect x="693" y="138.2" width="52.3" height="1.2" fill="#b9c8d2"/>
<rect x="693" y="145.6" width="52.3" height="1.6" fill="#d3dfe6"/>
<rect x="693" y="147.2" width="52.3" height="11.2" fill="#7b8da3"/>
<rect x="693" y="157.4" width="52.3" height="1.2" fill="#90a1b6"/>
<rect x="693" y="158.6" width="52.3" height="17.4" fill="#2e3858"/>
<rect x="694.5" y="160" width="11.5" height="15" fill="#36426a"/>
<rect x="708.5" y="160" width="23" height="15" fill="#252d49"/>
<rect x="710" y="161.5" width="20" height="13.5" fill="#44537a"/>
<rect x="734" y="160" width="10.5" height="15" fill="#36426a"/>
<rect x="694.5" y="163.4" width="11" height="1.4" fill="#c63a34"/>
<rect x="733.5" y="163.4" width="11" height="1.4" fill="#c63a34"/>
<rect x="693.5" y="176" width="51.8" height="13.4" fill="#7f91a8"/>
<rect x="693.5" y="189.4" width="51.8" height="5.4" fill="#a5b6c6"/>
<rect x="693.5" y="194.8" width="51.8" height="1.2" fill="#3f4b6c"/>
<rect x="746.3" y="139" width="2" height="2.2" fill="#3f8fe0"/>
<rect x="746.3" y="172" width="2" height="3" fill="#3f8fe0"/>
<rect x="691" y="172" width="1.6" height="3" fill="#3f8fe0"/>
<rect x="688.8" y="87" width="2" height="110" fill="#1a2136"/>
<rect x="748.5" y="78" width="1.5" height="119" fill="#1a2136"/>
<rect x="629" y="196" width="121" height="2" fill="#172034"/>
<rect x="636" y="165.5" width="45" height="6.5" fill="#ff1010" opacity=".8" filter="url(#glow1)"/>
<rect x="636.5" y="166" width="44" height="5.5" fill="#ff1a1a"/>
<rect x="638" y="168.2" width="41.5" height="1.7" fill="#ffe6e0"/>
<rect x="634.2" y="171" width="9" height="199" fill="#ff1010" opacity="0.55" filter="url(#glow1)"/>
<rect x="632.7" y="174" width="13" height="24" fill="#ff2020" opacity="0.45" filter="url(#glow1)"/>
<rect x="635.5" y="171.5" width="6.4" height="198" fill="#ff1414"/>
<rect x="637.45" y="172.5" width="2.5" height="196.5" fill="#fff2ee"/>
<path d="M639.7,192 L647.2,202.5 L639.7,209.5 Z" fill="#ff1a1a" opacity=".32"/>
<path d="M640.2,192.0 L642.7,195.0 L642.2,197.5 L647.3,202.5 L643.2,206.0 L640.2,209.5" stroke="#ff2222" stroke-width="1.8" fill="none" opacity="1" stroke-linejoin="round" stroke-linecap="round"/>
<path d="M643.2,195.5 L647.3,202.5 L644.2,205.0" stroke="#ffa69c" stroke-width="0.9" fill="none" opacity="1" stroke-linejoin="round" stroke-linecap="round"/>
<rect x="646.5" y="201.6" width="1.6" height="1.6" fill="#ffb0a8"/>
<path d="M636.7,209.0 L633.7,215.0 L632.5,222.0 L633.2,229.0 L635.7,235.0 L637.2,240.0" stroke="#ff1c1c" stroke-width="1.6" fill="none" opacity="0.9" stroke-linejoin="round" stroke-linecap="round"/>
<path d="M635.2,212.0 L634.2,217.0" stroke="#ff1c1c" stroke-width="2.2" fill="none" opacity="0.9" stroke-linejoin="round" stroke-linecap="round"/>
<path d="M640.7,209.0 L642.7,214.0 L642.2,219.0 L640.7,223.0" stroke="#ff2020" stroke-width="1.5" fill="none" opacity="0.9" stroke-linejoin="round" stroke-linecap="round"/>
<path d="M646.7,220.5 L645.2,224.0 L642.2,227.0 L640.2,229.0" stroke="#ff2a2a" stroke-width="2.2" fill="none" opacity="0.9" stroke-linejoin="round" stroke-linecap="round"/>
<path d="M646.7,220.5 L645.2,224.0 L642.2,227.0 L640.2,229.0" stroke="#ffc4bc" stroke-width="0.9" fill="none" opacity="1" stroke-linejoin="round" stroke-linecap="round"/>
<rect x="642.5" y="212.5" width="1.3" height="1.3" fill="#ff9d94"/>
<rect x="644.7" y="216.5" width="1.3" height="1.3" fill="#ff9d94"/>
<rect x="632.7" y="233" width="1.4" height="1.4" fill="#ffb8b0"/>
<rect x="633.9" y="237.5" width="1.4" height="1.4" fill="#ffb8b0"/>
<rect x="643.7" y="235" width="1.4" height="1.4" fill="#ff2a2a"/>
<rect x="644.5" y="239" width="1.4" height="1.4" fill="#ff2a2a"/>
<rect x="643.1" y="243" width="1.4" height="1.4" fill="#ff2a2a"/>
<path d="M634.2,239.0 L636.2,242.0 L637.2,244.5" stroke="#ffb8b0" stroke-width="0.9" fill="none" opacity="1" stroke-linejoin="round" stroke-linecap="round"/>
<path d="M639.7,252 L647.2,262.5 L639.7,269.5 Z" fill="#ff1a1a" opacity=".32"/>
<path d="M640.2,252.0 L642.7,255.0 L642.2,257.5 L647.3,262.5 L643.2,266.0 L640.2,269.5" stroke="#ff2222" stroke-width="1.8" fill="none" opacity="1" stroke-linejoin="round" stroke-linecap="round"/>
<path d="M643.2,255.5 L647.3,262.5 L644.2,265.0" stroke="#ffa69c" stroke-width="0.9" fill="none" opacity="1" stroke-linejoin="round" stroke-linecap="round"/>
<rect x="646.5" y="261.6" width="1.6" height="1.6" fill="#ffb0a8"/>
<path d="M636.7,269.0 L633.7,275.0 L632.5,282.0 L633.2,289.0 L635.7,295.0 L637.2,300.0" stroke="#ff1c1c" stroke-width="1.6" fill="none" opacity="0.9" stroke-linejoin="round" stroke-linecap="round"/>
<path d="M635.2,272.0 L634.2,277.0" stroke="#ff1c1c" stroke-width="2.2" fill="none" opacity="0.9" stroke-linejoin="round" stroke-linecap="round"/>
<path d="M640.7,269.0 L642.7,274.0 L642.2,279.0 L640.7,283.0" stroke="#ff2020" stroke-width="1.5" fill="none" opacity="0.9" stroke-linejoin="round" stroke-linecap="round"/>
<path d="M646.7,280.5 L645.2,284.0 L642.2,287.0 L640.2,289.0" stroke="#ff2a2a" stroke-width="2.2" fill="none" opacity="0.9" stroke-linejoin="round" stroke-linecap="round"/>
<path d="M646.7,280.5 L645.2,284.0 L642.2,287.0 L640.2,289.0" stroke="#ffc4bc" stroke-width="0.9" fill="none" opacity="1" stroke-linejoin="round" stroke-linecap="round"/>
<rect x="642.5" y="272.5" width="1.3" height="1.3" fill="#ff9d94"/>
<rect x="644.7" y="276.5" width="1.3" height="1.3" fill="#ff9d94"/>
<rect x="632.7" y="293" width="1.4" height="1.4" fill="#ffb8b0"/>
<rect x="633.9" y="297.5" width="1.4" height="1.4" fill="#ffb8b0"/>
<rect x="643.7" y="295" width="1.4" height="1.4" fill="#ff2a2a"/>
<rect x="644.5" y="299" width="1.4" height="1.4" fill="#ff2a2a"/>
<rect x="643.1" y="303" width="1.4" height="1.4" fill="#ff2a2a"/>
<path d="M634.2,299.0 L636.2,302.0 L637.2,304.5" stroke="#ffb8b0" stroke-width="0.9" fill="none" opacity="1" stroke-linejoin="round" stroke-linecap="round"/>
<path d="M639.7,312 L647.2,322.5 L639.7,329.5 Z" fill="#ff1a1a" opacity=".32"/>
<path d="M640.2,312.0 L642.7,315.0 L642.2,317.5 L647.3,322.5 L643.2,326.0 L640.2,329.5" stroke="#ff2222" stroke-width="1.8" fill="none" opacity="1" stroke-linejoin="round" stroke-linecap="round"/>
<path d="M643.2,315.5 L647.3,322.5 L644.2,325.0" stroke="#ffa69c" stroke-width="0.9" fill="none" opacity="1" stroke-linejoin="round" stroke-linecap="round"/>
<rect x="646.5" y="321.6" width="1.6" height="1.6" fill="#ffb0a8"/>
<path d="M636.7,329.0 L633.7,335.0 L632.5,342.0 L633.2,349.0 L635.7,355.0 L637.2,360.0" stroke="#ff1c1c" stroke-width="1.6" fill="none" opacity="0.9" stroke-linejoin="round" stroke-linecap="round"/>
<path d="M635.2,332.0 L634.2,337.0" stroke="#ff1c1c" stroke-width="2.2" fill="none" opacity="0.9" stroke-linejoin="round" stroke-linecap="round"/>
<path d="M640.7,329.0 L642.7,334.0 L642.2,339.0 L640.7,343.0" stroke="#ff2020" stroke-width="1.5" fill="none" opacity="0.9" stroke-linejoin="round" stroke-linecap="round"/>
<path d="M646.7,340.5 L645.2,344.0 L642.2,347.0 L640.2,349.0" stroke="#ff2a2a" stroke-width="2.2" fill="none" opacity="0.9" stroke-linejoin="round" stroke-linecap="round"/>
<path d="M646.7,340.5 L645.2,344.0 L642.2,347.0 L640.2,349.0" stroke="#ffc4bc" stroke-width="0.9" fill="none" opacity="1" stroke-linejoin="round" stroke-linecap="round"/>
<rect x="642.5" y="332.5" width="1.3" height="1.3" fill="#ff9d94"/>
<rect x="644.7" y="336.5" width="1.3" height="1.3" fill="#ff9d94"/>
<rect x="632.7" y="353" width="1.4" height="1.4" fill="#ffb8b0"/>
<rect x="633.9" y="357.5" width="1.4" height="1.4" fill="#ffb8b0"/>
<rect x="643.7" y="355" width="1.4" height="1.4" fill="#ff2a2a"/>
<rect x="644.5" y="359" width="1.4" height="1.4" fill="#ff2a2a"/>
<rect x="643.1" y="363" width="1.4" height="1.4" fill="#ff2a2a"/>
<path d="M634.2,359.0 L636.2,362.0 L637.2,364.5" stroke="#ffb8b0" stroke-width="0.9" fill="none" opacity="1" stroke-linejoin="round" stroke-linecap="round"/>
<rect x="654.2" y="171" width="9" height="199" fill="#ff1010" opacity="0.55" filter="url(#glow1)"/>
<rect x="652.7" y="174" width="13" height="24" fill="#ff2020" opacity="0.45" filter="url(#glow1)"/>
<rect x="655.5" y="171.5" width="6.4" height="198" fill="#ff1414"/>
<rect x="657.45" y="172.5" width="2.5" height="196.5" fill="#fff2ee"/>
<path d="M659.7,192 L667.2,202.5 L659.7,209.5 Z" fill="#ff1a1a" opacity=".32"/>
<path d="M660.2,192.0 L662.7,195.0 L662.2,197.5 L667.3,202.5 L663.2,206.0 L660.2,209.5" stroke="#ff2222" stroke-width="1.8" fill="none" opacity="1" stroke-linejoin="round" stroke-linecap="round"/>
<path d="M663.2,195.5 L667.3,202.5 L664.2,205.0" stroke="#ffa69c" stroke-width="0.9" fill="none" opacity="1" stroke-linejoin="round" stroke-linecap="round"/>
<rect x="666.5" y="201.6" width="1.6" height="1.6" fill="#ffb0a8"/>
<path d="M656.7,209.0 L653.7,215.0 L652.5,222.0 L653.2,229.0 L655.7,235.0 L657.2,240.0" stroke="#ff1c1c" stroke-width="1.6" fill="none" opacity="0.9" stroke-linejoin="round" stroke-linecap="round"/>
<path d="M655.2,212.0 L654.2,217.0" stroke="#ff1c1c" stroke-width="2.2" fill="none" opacity="0.9" stroke-linejoin="round" stroke-linecap="round"/>
<path d="M660.7,209.0 L662.7,214.0 L662.2,219.0 L660.7,223.0" stroke="#ff2020" stroke-width="1.5" fill="none" opacity="0.9" stroke-linejoin="round" stroke-linecap="round"/>
<path d="M666.7,220.5 L665.2,224.0 L662.2,227.0 L660.2,229.0" stroke="#ff2a2a" stroke-width="2.2" fill="none" opacity="0.9" stroke-linejoin="round" stroke-linecap="round"/>
<path d="M666.7,220.5 L665.2,224.0 L662.2,227.0 L660.2,229.0" stroke="#ffc4bc" stroke-width="0.9" fill="none" opacity="1" stroke-linejoin="round" stroke-linecap="round"/>
<rect x="662.5" y="212.5" width="1.3" height="1.3" fill="#ff9d94"/>
<rect x="664.7" y="216.5" width="1.3" height="1.3" fill="#ff9d94"/>
<rect x="652.7" y="233" width="1.4" height="1.4" fill="#ffb8b0"/>
<rect x="653.9" y="237.5" width="1.4" height="1.4" fill="#ffb8b0"/>
<rect x="663.7" y="235" width="1.4" height="1.4" fill="#ff2a2a"/>
<rect x="664.5" y="239" width="1.4" height="1.4" fill="#ff2a2a"/>
<rect x="663.1" y="243" width="1.4" height="1.4" fill="#ff2a2a"/>
<path d="M654.2,239.0 L656.2,242.0 L657.2,244.5" stroke="#ffb8b0" stroke-width="0.9" fill="none" opacity="1" stroke-linejoin="round" stroke-linecap="round"/>
<path d="M659.7,252 L667.2,262.5 L659.7,269.5 Z" fill="#ff1a1a" opacity=".32"/>
<path d="M660.2,252.0 L662.7,255.0 L662.2,257.5 L667.3,262.5 L663.2,266.0 L660.2,269.5" stroke="#ff2222" stroke-width="1.8" fill="none" opacity="1" stroke-linejoin="round" stroke-linecap="round"/>
<path d="M663.2,255.5 L667.3,262.5 L664.2,265.0" stroke="#ffa69c" stroke-width="0.9" fill="none" opacity="1" stroke-linejoin="round" stroke-linecap="round"/>
<rect x="666.5" y="261.6" width="1.6" height="1.6" fill="#ffb0a8"/>
<path d="M656.7,269.0 L653.7,275.0 L652.5,282.0 L653.2,289.0 L655.7,295.0 L657.2,300.0" stroke="#ff1c1c" stroke-width="1.6" fill="none" opacity="0.9" stroke-linejoin="round" stroke-linecap="round"/>
<path d="M655.2,272.0 L654.2,277.0" stroke="#ff1c1c" stroke-width="2.2" fill="none" opacity="0.9" stroke-linejoin="round" stroke-linecap="round"/>
<path d="M660.7,269.0 L662.7,274.0 L662.2,279.0 L660.7,283.0" stroke="#ff2020" stroke-width="1.5" fill="none" opacity="0.9" stroke-linejoin="round" stroke-linecap="round"/>
<path d="M666.7,280.5 L665.2,284.0 L662.2,287.0 L660.2,289.0" stroke="#ff2a2a" stroke-width="2.2" fill="none" opacity="0.9" stroke-linejoin="round" stroke-linecap="round"/>
<path d="M666.7,280.5 L665.2,284.0 L662.2,287.0 L660.2,289.0" stroke="#ffc4bc" stroke-width="0.9" fill="none" opacity="1" stroke-linejoin="round" stroke-linecap="round"/>
<rect x="662.5" y="272.5" width="1.3" height="1.3" fill="#ff9d94"/>
<rect x="664.7" y="276.5" width="1.3" height="1.3" fill="#ff9d94"/>
<rect x="652.7" y="293" width="1.4" height="1.4" fill="#ffb8b0"/>
<rect x="653.9" y="297.5" width="1.4" height="1.4" fill="#ffb8b0"/>
<rect x="663.7" y="295" width="1.4" height="1.4" fill="#ff2a2a"/>
<rect x="664.5" y="299" width="1.4" height="1.4" fill="#ff2a2a"/>
<rect x="663.1" y="303" width="1.4" height="1.4" fill="#ff2a2a"/>
<path d="M654.2,299.0 L656.2,302.0 L657.2,304.5" stroke="#ffb8b0" stroke-width="0.9" fill="none" opacity="1" stroke-linejoin="round" stroke-linecap="round"/>
<path d="M659.7,312 L667.2,322.5 L659.7,329.5 Z" fill="#ff1a1a" opacity=".32"/>
<path d="M660.2,312.0 L662.7,315.0 L662.2,317.5 L667.3,322.5 L663.2,326.0 L660.2,329.5" stroke="#ff2222" stroke-width="1.8" fill="none" opacity="1" stroke-linejoin="round" stroke-linecap="round"/>
<path d="M663.2,315.5 L667.3,322.5 L664.2,325.0" stroke="#ffa69c" stroke-width="0.9" fill="none" opacity="1" stroke-linejoin="round" stroke-linecap="round"/>
<rect x="666.5" y="321.6" width="1.6" height="1.6" fill="#ffb0a8"/>
<path d="M656.7,329.0 L653.7,335.0 L652.5,342.0 L653.2,349.0 L655.7,355.0 L657.2,360.0" stroke="#ff1c1c" stroke-width="1.6" fill="none" opacity="0.9" stroke-linejoin="round" stroke-linecap="round"/>
<path d="M655.2,332.0 L654.2,337.0" stroke="#ff1c1c" stroke-width="2.2" fill="none" opacity="0.9" stroke-linejoin="round" stroke-linecap="round"/>
<path d="M660.7,329.0 L662.7,334.0 L662.2,339.0 L660.7,343.0" stroke="#ff2020" stroke-width="1.5" fill="none" opacity="0.9" stroke-linejoin="round" stroke-linecap="round"/>
<path d="M666.7,340.5 L665.2,344.0 L662.2,347.0 L660.2,349.0" stroke="#ff2a2a" stroke-width="2.2" fill="none" opacity="0.9" stroke-linejoin="round" stroke-linecap="round"/>
<path d="M666.7,340.5 L665.2,344.0 L662.2,347.0 L660.2,349.0" stroke="#ffc4bc" stroke-width="0.9" fill="none" opacity="1" stroke-linejoin="round" stroke-linecap="round"/>
<rect x="662.5" y="332.5" width="1.3" height="1.3" fill="#ff9d94"/>
<rect x="664.7" y="336.5" width="1.3" height="1.3" fill="#ff9d94"/>
<rect x="652.7" y="353" width="1.4" height="1.4" fill="#ffb8b0"/>
<rect x="653.9" y="357.5" width="1.4" height="1.4" fill="#ffb8b0"/>
<rect x="663.7" y="355" width="1.4" height="1.4" fill="#ff2a2a"/>
<rect x="664.5" y="359" width="1.4" height="1.4" fill="#ff2a2a"/>
<rect x="663.1" y="363" width="1.4" height="1.4" fill="#ff2a2a"/>
<path d="M654.2,359.0 L656.2,362.0 L657.2,364.5" stroke="#ffb8b0" stroke-width="0.9" fill="none" opacity="1" stroke-linejoin="round" stroke-linecap="round"/>
<rect x="675.3" y="171" width="9" height="199" fill="#ff1010" opacity="0.55" filter="url(#glow1)"/>
<rect x="673.8" y="174" width="13" height="24" fill="#ff2020" opacity="0.45" filter="url(#glow1)"/>
<rect x="676.5999999999999" y="171.5" width="6.4" height="198" fill="#ff1414"/>
<rect x="678.55" y="172.5" width="2.5" height="196.5" fill="#fff2ee"/>
<path d="M680.8,192 L688.3,202.5 L680.8,209.5 Z" fill="#ff1a1a" opacity=".32"/>
<path d="M681.3,192.0 L683.8,195.0 L683.3,197.5 L688.4,202.5 L684.3,206.0 L681.3,209.5" stroke="#ff2222" stroke-width="1.8" fill="none" opacity="1" stroke-linejoin="round" stroke-linecap="round"/>
<path d="M684.3,195.5 L688.4,202.5 L685.3,205.0" stroke="#ffa69c" stroke-width="0.9" fill="none" opacity="1" stroke-linejoin="round" stroke-linecap="round"/>
<rect x="687.6" y="201.6" width="1.6" height="1.6" fill="#ffb0a8"/>
<path d="M677.8,209.0 L674.8,215.0 L673.6,222.0 L674.3,229.0 L676.8,235.0 L678.3,240.0" stroke="#ff1c1c" stroke-width="1.6" fill="none" opacity="0.9" stroke-linejoin="round" stroke-linecap="round"/>
<path d="M676.3,212.0 L675.3,217.0" stroke="#ff1c1c" stroke-width="2.2" fill="none" opacity="0.9" stroke-linejoin="round" stroke-linecap="round"/>
<path d="M681.8,209.0 L683.8,214.0 L683.3,219.0 L681.8,223.0" stroke="#ff2020" stroke-width="1.5" fill="none" opacity="0.9" stroke-linejoin="round" stroke-linecap="round"/>
<path d="M687.8,220.5 L686.3,224.0 L683.3,227.0 L681.3,229.0" stroke="#ff2a2a" stroke-width="2.2" fill="none" opacity="0.9" stroke-linejoin="round" stroke-linecap="round"/>
<path d="M687.8,220.5 L686.3,224.0 L683.3,227.0 L681.3,229.0" stroke="#ffc4bc" stroke-width="0.9" fill="none" opacity="1" stroke-linejoin="round" stroke-linecap="round"/>
<rect x="683.6" y="212.5" width="1.3" height="1.3" fill="#ff9d94"/>
<rect x="685.8" y="216.5" width="1.3" height="1.3" fill="#ff9d94"/>
<rect x="673.8" y="233" width="1.4" height="1.4" fill="#ffb8b0"/>
<rect x="675" y="237.5" width="1.4" height="1.4" fill="#ffb8b0"/>
<rect x="684.8" y="235" width="1.4" height="1.4" fill="#ff2a2a"/>
<rect x="685.6" y="239" width="1.4" height="1.4" fill="#ff2a2a"/>
<rect x="684.2" y="243" width="1.4" height="1.4" fill="#ff2a2a"/>
<path d="M675.3,239.0 L677.3,242.0 L678.3,244.5" stroke="#ffb8b0" stroke-width="0.9" fill="none" opacity="1" stroke-linejoin="round" stroke-linecap="round"/>
<path d="M680.8,252 L688.3,262.5 L680.8,269.5 Z" fill="#ff1a1a" opacity=".32"/>
<path d="M681.3,252.0 L683.8,255.0 L683.3,257.5 L688.4,262.5 L684.3,266.0 L681.3,269.5" stroke="#ff2222" stroke-width="1.8" fill="none" opacity="1" stroke-linejoin="round" stroke-linecap="round"/>
<path d="M684.3,255.5 L688.4,262.5 L685.3,265.0" stroke="#ffa69c" stroke-width="0.9" fill="none" opacity="1" stroke-linejoin="round" stroke-linecap="round"/>
<rect x="687.6" y="261.6" width="1.6" height="1.6" fill="#ffb0a8"/>
<path d="M677.8,269.0 L674.8,275.0 L673.6,282.0 L674.3,289.0 L676.8,295.0 L678.3,300.0" stroke="#ff1c1c" stroke-width="1.6" fill="none" opacity="0.9" stroke-linejoin="round" stroke-linecap="round"/>
<path d="M676.3,272.0 L675.3,277.0" stroke="#ff1c1c" stroke-width="2.2" fill="none" opacity="0.9" stroke-linejoin="round" stroke-linecap="round"/>
<path d="M681.8,269.0 L683.8,274.0 L683.3,279.0 L681.8,283.0" stroke="#ff2020" stroke-width="1.5" fill="none" opacity="0.9" stroke-linejoin="round" stroke-linecap="round"/>
<path d="M687.8,280.5 L686.3,284.0 L683.3,287.0 L681.3,289.0" stroke="#ff2a2a" stroke-width="2.2" fill="none" opacity="0.9" stroke-linejoin="round" stroke-linecap="round"/>
<path d="M687.8,280.5 L686.3,284.0 L683.3,287.0 L681.3,289.0" stroke="#ffc4bc" stroke-width="0.9" fill="none" opacity="1" stroke-linejoin="round" stroke-linecap="round"/>
<rect x="683.6" y="272.5" width="1.3" height="1.3" fill="#ff9d94"/>
<rect x="685.8" y="276.5" width="1.3" height="1.3" fill="#ff9d94"/>
<rect x="673.8" y="293" width="1.4" height="1.4" fill="#ffb8b0"/>
<rect x="675" y="297.5" width="1.4" height="1.4" fill="#ffb8b0"/>
<rect x="684.8" y="295" width="1.4" height="1.4" fill="#ff2a2a"/>
<rect x="685.6" y="299" width="1.4" height="1.4" fill="#ff2a2a"/>
<rect x="684.2" y="303" width="1.4" height="1.4" fill="#ff2a2a"/>
<path d="M675.3,299.0 L677.3,302.0 L678.3,304.5" stroke="#ffb8b0" stroke-width="0.9" fill="none" opacity="1" stroke-linejoin="round" stroke-linecap="round"/>
<path d="M680.8,312 L688.3,322.5 L680.8,329.5 Z" fill="#ff1a1a" opacity=".32"/>
<path d="M681.3,312.0 L683.8,315.0 L683.3,317.5 L688.4,322.5 L684.3,326.0 L681.3,329.5" stroke="#ff2222" stroke-width="1.8" fill="none" opacity="1" stroke-linejoin="round" stroke-linecap="round"/>
<path d="M684.3,315.5 L688.4,322.5 L685.3,325.0" stroke="#ffa69c" stroke-width="0.9" fill="none" opacity="1" stroke-linejoin="round" stroke-linecap="round"/>
<rect x="687.6" y="321.6" width="1.6" height="1.6" fill="#ffb0a8"/>
<path d="M677.8,329.0 L674.8,335.0 L673.6,342.0 L674.3,349.0 L676.8,355.0 L678.3,360.0" stroke="#ff1c1c" stroke-width="1.6" fill="none" opacity="0.9" stroke-linejoin="round" stroke-linecap="round"/>
<path d="M676.3,332.0 L675.3,337.0" stroke="#ff1c1c" stroke-width="2.2" fill="none" opacity="0.9" stroke-linejoin="round" stroke-linecap="round"/>
<path d="M681.8,329.0 L683.8,334.0 L683.3,339.0 L681.8,343.0" stroke="#ff2020" stroke-width="1.5" fill="none" opacity="0.9" stroke-linejoin="round" stroke-linecap="round"/>
<path d="M687.8,340.5 L686.3,344.0 L683.3,347.0 L681.3,349.0" stroke="#ff2a2a" stroke-width="2.2" fill="none" opacity="0.9" stroke-linejoin="round" stroke-linecap="round"/>
<path d="M687.8,340.5 L686.3,344.0 L683.3,347.0 L681.3,349.0" stroke="#ffc4bc" stroke-width="0.9" fill="none" opacity="1" stroke-linejoin="round" stroke-linecap="round"/>
<rect x="683.6" y="332.5" width="1.3" height="1.3" fill="#ff9d94"/>
<rect x="685.8" y="336.5" width="1.3" height="1.3" fill="#ff9d94"/>
<rect x="673.8" y="353" width="1.4" height="1.4" fill="#ffb8b0"/>
<rect x="675" y="357.5" width="1.4" height="1.4" fill="#ffb8b0"/>
<rect x="684.8" y="355" width="1.4" height="1.4" fill="#ff2a2a"/>
<rect x="685.6" y="359" width="1.4" height="1.4" fill="#ff2a2a"/>
<rect x="684.2" y="363" width="1.4" height="1.4" fill="#ff2a2a"/>
<path d="M675.3,359.0 L677.3,362.0 L678.3,364.5" stroke="#ffb8b0" stroke-width="0.9" fill="none" opacity="1" stroke-linejoin="round" stroke-linecap="round"/>
<rect x="696" y="165.5" width="45" height="6.5" fill="#ff1010" opacity=".8" filter="url(#glow1)"/>
<rect x="696.5" y="166" width="44" height="5.5" fill="#ff1a1a"/>
<rect x="698" y="168.2" width="41.5" height="1.7" fill="#ffe6e0"/>
<rect x="694.2" y="171" width="9" height="199" fill="#ff1010" opacity="0.55" filter="url(#glow1)"/>
<rect x="692.7" y="174" width="13" height="24" fill="#ff2020" opacity="0.45" filter="url(#glow1)"/>
<rect x="695.5" y="171.5" width="6.4" height="198" fill="#ff1414"/>
<rect x="697.45" y="172.5" width="2.5" height="196.5" fill="#fff2ee"/>
<path d="M699.7,192 L707.2,202.5 L699.7,209.5 Z" fill="#ff1a1a" opacity=".32"/>
<path d="M700.2,192.0 L702.7,195.0 L702.2,197.5 L707.3,202.5 L703.2,206.0 L700.2,209.5" stroke="#ff2222" stroke-width="1.8" fill="none" opacity="1" stroke-linejoin="round" stroke-linecap="round"/>
<path d="M703.2,195.5 L707.3,202.5 L704.2,205.0" stroke="#ffa69c" stroke-width="0.9" fill="none" opacity="1" stroke-linejoin="round" stroke-linecap="round"/>
<rect x="706.5" y="201.6" width="1.6" height="1.6" fill="#ffb0a8"/>
<path d="M696.7,209.0 L693.7,215.0 L692.5,222.0 L693.2,229.0 L695.7,235.0 L697.2,240.0" stroke="#ff1c1c" stroke-width="1.6" fill="none" opacity="0.9" stroke-linejoin="round" stroke-linecap="round"/>
<path d="M695.2,212.0 L694.2,217.0" stroke="#ff1c1c" stroke-width="2.2" fill="none" opacity="0.9" stroke-linejoin="round" stroke-linecap="round"/>
<path d="M700.7,209.0 L702.7,214.0 L702.2,219.0 L700.7,223.0" stroke="#ff2020" stroke-width="1.5" fill="none" opacity="0.9" stroke-linejoin="round" stroke-linecap="round"/>
<path d="M706.7,220.5 L705.2,224.0 L702.2,227.0 L700.2,229.0" stroke="#ff2a2a" stroke-width="2.2" fill="none" opacity="0.9" stroke-linejoin="round" stroke-linecap="round"/>
<path d="M706.7,220.5 L705.2,224.0 L702.2,227.0 L700.2,229.0" stroke="#ffc4bc" stroke-width="0.9" fill="none" opacity="1" stroke-linejoin="round" stroke-linecap="round"/>
<rect x="702.5" y="212.5" width="1.3" height="1.3" fill="#ff9d94"/>
<rect x="704.7" y="216.5" width="1.3" height="1.3" fill="#ff9d94"/>
<rect x="692.7" y="233" width="1.4" height="1.4" fill="#ffb8b0"/>
<rect x="693.9" y="237.5" width="1.4" height="1.4" fill="#ffb8b0"/>
<rect x="703.7" y="235" width="1.4" height="1.4" fill="#ff2a2a"/>
<rect x="704.5" y="239" width="1.4" height="1.4" fill="#ff2a2a"/>
<rect x="703.1" y="243" width="1.4" height="1.4" fill="#ff2a2a"/>
<path d="M694.2,239.0 L696.2,242.0 L697.2,244.5" stroke="#ffb8b0" stroke-width="0.9" fill="none" opacity="1" stroke-linejoin="round" stroke-linecap="round"/>
<path d="M699.7,252 L707.2,262.5 L699.7,269.5 Z" fill="#ff1a1a" opacity=".32"/>
<path d="M700.2,252.0 L702.7,255.0 L702.2,257.5 L707.3,262.5 L703.2,266.0 L700.2,269.5" stroke="#ff2222" stroke-width="1.8" fill="none" opacity="1" stroke-linejoin="round" stroke-linecap="round"/>
<path d="M703.2,255.5 L707.3,262.5 L704.2,265.0" stroke="#ffa69c" stroke-width="0.9" fill="none" opacity="1" stroke-linejoin="round" stroke-linecap="round"/>
<rect x="706.5" y="261.6" width="1.6" height="1.6" fill="#ffb0a8"/>
<path d="M696.7,269.0 L693.7,275.0 L692.5,282.0 L693.2,289.0 L695.7,295.0 L697.2,300.0" stroke="#ff1c1c" stroke-width="1.6" fill="none" opacity="0.9" stroke-linejoin="round" stroke-linecap="round"/>
<path d="M695.2,272.0 L694.2,277.0" stroke="#ff1c1c" stroke-width="2.2" fill="none" opacity="0.9" stroke-linejoin="round" stroke-linecap="round"/>
<path d="M700.7,269.0 L702.7,274.0 L702.2,279.0 L700.7,283.0" stroke="#ff2020" stroke-width="1.5" fill="none" opacity="0.9" stroke-linejoin="round" stroke-linecap="round"/>
<path d="M706.7,280.5 L705.2,284.0 L702.2,287.0 L700.2,289.0" stroke="#ff2a2a" stroke-width="2.2" fill="none" opacity="0.9" stroke-linejoin="round" stroke-linecap="round"/>
<path d="M706.7,280.5 L705.2,284.0 L702.2,287.0 L700.2,289.0" stroke="#ffc4bc" stroke-width="0.9" fill="none" opacity="1" stroke-linejoin="round" stroke-linecap="round"/>
<rect x="702.5" y="272.5" width="1.3" height="1.3" fill="#ff9d94"/>
<rect x="704.7" y="276.5" width="1.3" height="1.3" fill="#ff9d94"/>
<rect x="692.7" y="293" width="1.4" height="1.4" fill="#ffb8b0"/>
<rect x="693.9" y="297.5" width="1.4" height="1.4" fill="#ffb8b0"/>
<rect x="703.7" y="295" width="1.4" height="1.4" fill="#ff2a2a"/>
<rect x="704.5" y="299" width="1.4" height="1.4" fill="#ff2a2a"/>
<rect x="703.1" y="303" width="1.4" height="1.4" fill="#ff2a2a"/>
<path d="M694.2,299.0 L696.2,302.0 L697.2,304.5" stroke="#ffb8b0" stroke-width="0.9" fill="none" opacity="1" stroke-linejoin="round" stroke-linecap="round"/>
<path d="M699.7,312 L707.2,322.5 L699.7,329.5 Z" fill="#ff1a1a" opacity=".32"/>
<path d="M700.2,312.0 L702.7,315.0 L702.2,317.5 L707.3,322.5 L703.2,326.0 L700.2,329.5" stroke="#ff2222" stroke-width="1.8" fill="none" opacity="1" stroke-linejoin="round" stroke-linecap="round"/>
<path d="M703.2,315.5 L707.3,322.5 L704.2,325.0" stroke="#ffa69c" stroke-width="0.9" fill="none" opacity="1" stroke-linejoin="round" stroke-linecap="round"/>
<rect x="706.5" y="321.6" width="1.6" height="1.6" fill="#ffb0a8"/>
<path d="M696.7,329.0 L693.7,335.0 L692.5,342.0 L693.2,349.0 L695.7,355.0 L697.2,360.0" stroke="#ff1c1c" stroke-width="1.6" fill="none" opacity="0.9" stroke-linejoin="round" stroke-linecap="round"/>
<path d="M695.2,332.0 L694.2,337.0" stroke="#ff1c1c" stroke-width="2.2" fill="none" opacity="0.9" stroke-linejoin="round" stroke-linecap="round"/>
<path d="M700.7,329.0 L702.7,334.0 L702.2,339.0 L700.7,343.0" stroke="#ff2020" stroke-width="1.5" fill="none" opacity="0.9" stroke-linejoin="round" stroke-linecap="round"/>
<path d="M706.7,340.5 L705.2,344.0 L702.2,347.0 L700.2,349.0" stroke="#ff2a2a" stroke-width="2.2" fill="none" opacity="0.9" stroke-linejoin="round" stroke-linecap="round"/>
<path d="M706.7,340.5 L705.2,344.0 L702.2,347.0 L700.2,349.0" stroke="#ffc4bc" stroke-width="0.9" fill="none" opacity="1" stroke-linejoin="round" stroke-linecap="round"/>
<rect x="702.5" y="332.5" width="1.3" height="1.3" fill="#ff9d94"/>
<rect x="704.7" y="336.5" width="1.3" height="1.3" fill="#ff9d94"/>
<rect x="692.7" y="353" width="1.4" height="1.4" fill="#ffb8b0"/>
<rect x="693.9" y="357.5" width="1.4" height="1.4" fill="#ffb8b0"/>
<rect x="703.7" y="355" width="1.4" height="1.4" fill="#ff2a2a"/>
<rect x="704.5" y="359" width="1.4" height="1.4" fill="#ff2a2a"/>
<rect x="703.1" y="363" width="1.4" height="1.4" fill="#ff2a2a"/>
<path d="M694.2,359.0 L696.2,362.0 L697.2,364.5" stroke="#ffb8b0" stroke-width="0.9" fill="none" opacity="1" stroke-linejoin="round" stroke-linecap="round"/>
<rect x="714.2" y="171" width="9" height="199" fill="#ff1010" opacity="0.55" filter="url(#glow1)"/>
<rect x="712.7" y="174" width="13" height="24" fill="#ff2020" opacity="0.45" filter="url(#glow1)"/>
<rect x="715.5" y="171.5" width="6.4" height="198" fill="#ff1414"/>
<rect x="717.45" y="172.5" width="2.5" height="196.5" fill="#fff2ee"/>
<path d="M719.7,192 L727.2,202.5 L719.7,209.5 Z" fill="#ff1a1a" opacity=".32"/>
<path d="M720.2,192.0 L722.7,195.0 L722.2,197.5 L727.3,202.5 L723.2,206.0 L720.2,209.5" stroke="#ff2222" stroke-width="1.8" fill="none" opacity="1" stroke-linejoin="round" stroke-linecap="round"/>
<path d="M723.2,195.5 L727.3,202.5 L724.2,205.0" stroke="#ffa69c" stroke-width="0.9" fill="none" opacity="1" stroke-linejoin="round" stroke-linecap="round"/>
<rect x="726.5" y="201.6" width="1.6" height="1.6" fill="#ffb0a8"/>
<path d="M716.7,209.0 L713.7,215.0 L712.5,222.0 L713.2,229.0 L715.7,235.0 L717.2,240.0" stroke="#ff1c1c" stroke-width="1.6" fill="none" opacity="0.9" stroke-linejoin="round" stroke-linecap="round"/>
<path d="M715.2,212.0 L714.2,217.0" stroke="#ff1c1c" stroke-width="2.2" fill="none" opacity="0.9" stroke-linejoin="round" stroke-linecap="round"/>
<path d="M720.7,209.0 L722.7,214.0 L722.2,219.0 L720.7,223.0" stroke="#ff2020" stroke-width="1.5" fill="none" opacity="0.9" stroke-linejoin="round" stroke-linecap="round"/>
<path d="M726.7,220.5 L725.2,224.0 L722.2,227.0 L720.2,229.0" stroke="#ff2a2a" stroke-width="2.2" fill="none" opacity="0.9" stroke-linejoin="round" stroke-linecap="round"/>
<path d="M726.7,220.5 L725.2,224.0 L722.2,227.0 L720.2,229.0" stroke="#ffc4bc" stroke-width="0.9" fill="none" opacity="1" stroke-linejoin="round" stroke-linecap="round"/>
<rect x="722.5" y="212.5" width="1.3" height="1.3" fill="#ff9d94"/>
<rect x="724.7" y="216.5" width="1.3" height="1.3" fill="#ff9d94"/>
<rect x="712.7" y="233" width="1.4" height="1.4" fill="#ffb8b0"/>
<rect x="713.9" y="237.5" width="1.4" height="1.4" fill="#ffb8b0"/>
<rect x="723.7" y="235" width="1.4" height="1.4" fill="#ff2a2a"/>
<rect x="724.5" y="239" width="1.4" height="1.4" fill="#ff2a2a"/>
<rect x="723.1" y="243" width="1.4" height="1.4" fill="#ff2a2a"/>
<path d="M714.2,239.0 L716.2,242.0 L717.2,244.5" stroke="#ffb8b0" stroke-width="0.9" fill="none" opacity="1" stroke-linejoin="round" stroke-linecap="round"/>
<path d="M719.7,252 L727.2,262.5 L719.7,269.5 Z" fill="#ff1a1a" opacity=".32"/>
<path d="M720.2,252.0 L722.7,255.0 L722.2,257.5 L727.3,262.5 L723.2,266.0 L720.2,269.5" stroke="#ff2222" stroke-width="1.8" fill="none" opacity="1" stroke-linejoin="round" stroke-linecap="round"/>
<path d="M723.2,255.5 L727.3,262.5 L724.2,265.0" stroke="#ffa69c" stroke-width="0.9" fill="none" opacity="1" stroke-linejoin="round" stroke-linecap="round"/>
<rect x="726.5" y="261.6" width="1.6" height="1.6" fill="#ffb0a8"/>
<path d="M716.7,269.0 L713.7,275.0 L712.5,282.0 L713.2,289.0 L715.7,295.0 L717.2,300.0" stroke="#ff1c1c" stroke-width="1.6" fill="none" opacity="0.9" stroke-linejoin="round" stroke-linecap="round"/>
<path d="M715.2,272.0 L714.2,277.0" stroke="#ff1c1c" stroke-width="2.2" fill="none" opacity="0.9" stroke-linejoin="round" stroke-linecap="round"/>
<path d="M720.7,269.0 L722.7,274.0 L722.2,279.0 L720.7,283.0" stroke="#ff2020" stroke-width="1.5" fill="none" opacity="0.9" stroke-linejoin="round" stroke-linecap="round"/>
<path d="M726.7,280.5 L725.2,284.0 L722.2,287.0 L720.2,289.0" stroke="#ff2a2a" stroke-width="2.2" fill="none" opacity="0.9" stroke-linejoin="round" stroke-linecap="round"/>
<path d="M726.7,280.5 L725.2,284.0 L722.2,287.0 L720.2,289.0" stroke="#ffc4bc" stroke-width="0.9" fill="none" opacity="1" stroke-linejoin="round" stroke-linecap="round"/>
<rect x="722.5" y="272.5" width="1.3" height="1.3" fill="#ff9d94"/>
<rect x="724.7" y="276.5" width="1.3" height="1.3" fill="#ff9d94"/>
<rect x="712.7" y="293" width="1.4" height="1.4" fill="#ffb8b0"/>
<rect x="713.9" y="297.5" width="1.4" height="1.4" fill="#ffb8b0"/>
<rect x="723.7" y="295" width="1.4" height="1.4" fill="#ff2a2a"/>
<rect x="724.5" y="299" width="1.4" height="1.4" fill="#ff2a2a"/>
<rect x="723.1" y="303" width="1.4" height="1.4" fill="#ff2a2a"/>
<path d="M714.2,299.0 L716.2,302.0 L717.2,304.5" stroke="#ffb8b0" stroke-width="0.9" fill="none" opacity="1" stroke-linejoin="round" stroke-linecap="round"/>
<path d="M719.7,312 L727.2,322.5 L719.7,329.5 Z" fill="#ff1a1a" opacity=".32"/>
<path d="M720.2,312.0 L722.7,315.0 L722.2,317.5 L727.3,322.5 L723.2,326.0 L720.2,329.5" stroke="#ff2222" stroke-width="1.8" fill="none" opacity="1" stroke-linejoin="round" stroke-linecap="round"/>
<path d="M723.2,315.5 L727.3,322.5 L724.2,325.0" stroke="#ffa69c" stroke-width="0.9" fill="none" opacity="1" stroke-linejoin="round" stroke-linecap="round"/>
<rect x="726.5" y="321.6" width="1.6" height="1.6" fill="#ffb0a8"/>
<path d="M716.7,329.0 L713.7,335.0 L712.5,342.0 L713.2,349.0 L715.7,355.0 L717.2,360.0" stroke="#ff1c1c" stroke-width="1.6" fill="none" opacity="0.9" stroke-linejoin="round" stroke-linecap="round"/>
<path d="M715.2,332.0 L714.2,337.0" stroke="#ff1c1c" stroke-width="2.2" fill="none" opacity="0.9" stroke-linejoin="round" stroke-linecap="round"/>
<path d="M720.7,329.0 L722.7,334.0 L722.2,339.0 L720.7,343.0" stroke="#ff2020" stroke-width="1.5" fill="none" opacity="0.9" stroke-linejoin="round" stroke-linecap="round"/>
<path d="M726.7,340.5 L725.2,344.0 L722.2,347.0 L720.2,349.0" stroke="#ff2a2a" stroke-width="2.2" fill="none" opacity="0.9" stroke-linejoin="round" stroke-linecap="round"/>
<path d="M726.7,340.5 L725.2,344.0 L722.2,347.0 L720.2,349.0" stroke="#ffc4bc" stroke-width="0.9" fill="none" opacity="1" stroke-linejoin="round" stroke-linecap="round"/>
<rect x="722.5" y="332.5" width="1.3" height="1.3" fill="#ff9d94"/>
<rect x="724.7" y="336.5" width="1.3" height="1.3" fill="#ff9d94"/>
<rect x="712.7" y="353" width="1.4" height="1.4" fill="#ffb8b0"/>
<rect x="713.9" y="357.5" width="1.4" height="1.4" fill="#ffb8b0"/>
<rect x="723.7" y="355" width="1.4" height="1.4" fill="#ff2a2a"/>
<rect x="724.5" y="359" width="1.4" height="1.4" fill="#ff2a2a"/>
<rect x="723.1" y="363" width="1.4" height="1.4" fill="#ff2a2a"/>
<path d="M714.2,359.0 L716.2,362.0 L717.2,364.5" stroke="#ffb8b0" stroke-width="0.9" fill="none" opacity="1" stroke-linejoin="round" stroke-linecap="round"/>
<rect x="735.3" y="171" width="9" height="199" fill="#ff1010" opacity="0.55" filter="url(#glow1)"/>
<rect x="733.8" y="174" width="13" height="24" fill="#ff2020" opacity="0.45" filter="url(#glow1)"/>
<rect x="736.5999999999999" y="171.5" width="6.4" height="198" fill="#ff1414"/>
<rect x="738.55" y="172.5" width="2.5" height="196.5" fill="#fff2ee"/>
<path d="M740.8,192 L748.3,202.5 L740.8,209.5 Z" fill="#ff1a1a" opacity=".32"/>
<path d="M741.3,192.0 L743.8,195.0 L743.3,197.5 L748.4,202.5 L744.3,206.0 L741.3,209.5" stroke="#ff2222" stroke-width="1.8" fill="none" opacity="1" stroke-linejoin="round" stroke-linecap="round"/>
<path d="M744.3,195.5 L748.4,202.5 L745.3,205.0" stroke="#ffa69c" stroke-width="0.9" fill="none" opacity="1" stroke-linejoin="round" stroke-linecap="round"/>
<rect x="747.6" y="201.6" width="1.6" height="1.6" fill="#ffb0a8"/>
<path d="M737.8,209.0 L734.8,215.0 L733.6,222.0 L734.3,229.0 L736.8,235.0 L738.3,240.0" stroke="#ff1c1c" stroke-width="1.6" fill="none" opacity="0.9" stroke-linejoin="round" stroke-linecap="round"/>
<path d="M736.3,212.0 L735.3,217.0" stroke="#ff1c1c" stroke-width="2.2" fill="none" opacity="0.9" stroke-linejoin="round" stroke-linecap="round"/>
<path d="M741.8,209.0 L743.8,214.0 L743.3,219.0 L741.8,223.0" stroke="#ff2020" stroke-width="1.5" fill="none" opacity="0.9" stroke-linejoin="round" stroke-linecap="round"/>
<path d="M747.8,220.5 L746.3,224.0 L743.3,227.0 L741.3,229.0" stroke="#ff2a2a" stroke-width="2.2" fill="none" opacity="0.9" stroke-linejoin="round" stroke-linecap="round"/>
<path d="M747.8,220.5 L746.3,224.0 L743.3,227.0 L741.3,229.0" stroke="#ffc4bc" stroke-width="0.9" fill="none" opacity="1" stroke-linejoin="round" stroke-linecap="round"/>
<rect x="743.6" y="212.5" width="1.3" height="1.3" fill="#ff9d94"/>
<rect x="745.8" y="216.5" width="1.3" height="1.3" fill="#ff9d94"/>
<rect x="733.8" y="233" width="1.4" height="1.4" fill="#ffb8b0"/>
<rect x="735" y="237.5" width="1.4" height="1.4" fill="#ffb8b0"/>
<rect x="744.8" y="235" width="1.4" height="1.4" fill="#ff2a2a"/>
<rect x="745.6" y="239" width="1.4" height="1.4" fill="#ff2a2a"/>
<rect x="744.2" y="243" width="1.4" height="1.4" fill="#ff2a2a"/>
<path d="M735.3,239.0 L737.3,242.0 L738.3,244.5" stroke="#ffb8b0" stroke-width="0.9" fill="none" opacity="1" stroke-linejoin="round" stroke-linecap="round"/>
<path d="M740.8,252 L748.3,262.5 L740.8,269.5 Z" fill="#ff1a1a" opacity=".32"/>
<path d="M741.3,252.0 L743.8,255.0 L743.3,257.5 L748.4,262.5 L744.3,266.0 L741.3,269.5" stroke="#ff2222" stroke-width="1.8" fill="none" opacity="1" stroke-linejoin="round" stroke-linecap="round"/>
<path d="M744.3,255.5 L748.4,262.5 L745.3,265.0" stroke="#ffa69c" stroke-width="0.9" fill="none" opacity="1" stroke-linejoin="round" stroke-linecap="round"/>
<rect x="747.6" y="261.6" width="1.6" height="1.6" fill="#ffb0a8"/>
<path d="M737.8,269.0 L734.8,275.0 L733.6,282.0 L734.3,289.0 L736.8,295.0 L738.3,300.0" stroke="#ff1c1c" stroke-width="1.6" fill="none" opacity="0.9" stroke-linejoin="round" stroke-linecap="round"/>
<path d="M736.3,272.0 L735.3,277.0" stroke="#ff1c1c" stroke-width="2.2" fill="none" opacity="0.9" stroke-linejoin="round" stroke-linecap="round"/>
<path d="M741.8,269.0 L743.8,274.0 L743.3,279.0 L741.8,283.0" stroke="#ff2020" stroke-width="1.5" fill="none" opacity="0.9" stroke-linejoin="round" stroke-linecap="round"/>
<path d="M747.8,280.5 L746.3,284.0 L743.3,287.0 L741.3,289.0" stroke="#ff2a2a" stroke-width="2.2" fill="none" opacity="0.9" stroke-linejoin="round" stroke-linecap="round"/>
<path d="M747.8,280.5 L746.3,284.0 L743.3,287.0 L741.3,289.0" stroke="#ffc4bc" stroke-width="0.9" fill="none" opacity="1" stroke-linejoin="round" stroke-linecap="round"/>
<rect x="743.6" y="272.5" width="1.3" height="1.3" fill="#ff9d94"/>
<rect x="745.8" y="276.5" width="1.3" height="1.3" fill="#ff9d94"/>
<rect x="733.8" y="293" width="1.4" height="1.4" fill="#ffb8b0"/>
<rect x="735" y="297.5" width="1.4" height="1.4" fill="#ffb8b0"/>
<rect x="744.8" y="295" width="1.4" height="1.4" fill="#ff2a2a"/>
<rect x="745.6" y="299" width="1.4" height="1.4" fill="#ff2a2a"/>
<rect x="744.2" y="303" width="1.4" height="1.4" fill="#ff2a2a"/>
<path d="M735.3,299.0 L737.3,302.0 L738.3,304.5" stroke="#ffb8b0" stroke-width="0.9" fill="none" opacity="1" stroke-linejoin="round" stroke-linecap="round"/>
<path d="M740.8,312 L748.3,322.5 L740.8,329.5 Z" fill="#ff1a1a" opacity=".32"/>
<path d="M741.3,312.0 L743.8,315.0 L743.3,317.5 L748.4,322.5 L744.3,326.0 L741.3,329.5" stroke="#ff2222" stroke-width="1.8" fill="none" opacity="1" stroke-linejoin="round" stroke-linecap="round"/>
<path d="M744.3,315.5 L748.4,322.5 L745.3,325.0" stroke="#ffa69c" stroke-width="0.9" fill="none" opacity="1" stroke-linejoin="round" stroke-linecap="round"/>
<rect x="747.6" y="321.6" width="1.6" height="1.6" fill="#ffb0a8"/>
<path d="M737.8,329.0 L734.8,335.0 L733.6,342.0 L734.3,349.0 L736.8,355.0 L738.3,360.0" stroke="#ff1c1c" stroke-width="1.6" fill="none" opacity="0.9" stroke-linejoin="round" stroke-linecap="round"/>
<path d="M736.3,332.0 L735.3,337.0" stroke="#ff1c1c" stroke-width="2.2" fill="none" opacity="0.9" stroke-linejoin="round" stroke-linecap="round"/>
<path d="M741.8,329.0 L743.8,334.0 L743.3,339.0 L741.8,343.0" stroke="#ff2020" stroke-width="1.5" fill="none" opacity="0.9" stroke-linejoin="round" stroke-linecap="round"/>
<path d="M747.8,340.5 L746.3,344.0 L743.3,347.0 L741.3,349.0" stroke="#ff2a2a" stroke-width="2.2" fill="none" opacity="0.9" stroke-linejoin="round" stroke-linecap="round"/>
<path d="M747.8,340.5 L746.3,344.0 L743.3,347.0 L741.3,349.0" stroke="#ffc4bc" stroke-width="0.9" fill="none" opacity="1" stroke-linejoin="round" stroke-linecap="round"/>
<rect x="743.6" y="332.5" width="1.3" height="1.3" fill="#ff9d94"/>
<rect x="745.8" y="336.5" width="1.3" height="1.3" fill="#ff9d94"/>
<rect x="733.8" y="353" width="1.4" height="1.4" fill="#ffb8b0"/>
<rect x="735" y="357.5" width="1.4" height="1.4" fill="#ffb8b0"/>
<rect x="744.8" y="355" width="1.4" height="1.4" fill="#ff2a2a"/>
<rect x="745.6" y="359" width="1.4" height="1.4" fill="#ff2a2a"/>
<rect x="744.2" y="363" width="1.4" height="1.4" fill="#ff2a2a"/>
<path d="M735.3,359.0 L737.3,362.0 L738.3,364.5" stroke="#ffb8b0" stroke-width="0.9" fill="none" opacity="1" stroke-linejoin="round" stroke-linecap="round"/>
<rect x="746" y="13.8" width="213" height="183.2" fill="#1b2239"/>
<rect x="748" y="16.5" width="211" height="3" fill="#3a4869"/>
<rect x="749" y="19.5" width="210" height="7.5" fill="#a3b8ca"/>
<rect x="749" y="19.5" width="210" height="2" fill="#7f95ae"/>
<rect x="749" y="25" width="210" height="2" fill="#879db5"/>
<rect x="749" y="21.5" width="210" height="3" fill="#b6c9d6"/>
<rect x="749" y="27" width="210" height="2" fill="#1a2136"/>
<rect x="750.3" y="30" width="57.7" height="22" fill="#8496ac"/>
<rect x="752.3" y="32" width="53.7" height="18" fill="#70839b"/>
<rect x="750.3" y="50.5" width="57.7" height="1.5" fill="#5f7189"/>
<rect x="752.8" y="32.5" width="2.5" height="2.5" fill="#4a5a72"/>
<rect x="803" y="32.5" width="2.5" height="2.5" fill="#4a5a72"/>
<rect x="752.8" y="46.5" width="2.5" height="2.5" fill="#4a5a72"/>
<rect x="803" y="46.5" width="2.5" height="2.5" fill="#4a5a72"/>
<rect x="752.3" y="57" width="53.7" height="15.5" fill="#9db2c4"/>
<rect x="752.3" y="57" width="53.7" height="1.5" fill="#c9d8e1"/>
<rect x="752.3" y="71.2" width="53.7" height="1.3" fill="#8198ae"/>
<rect x="752.3" y="57" width="1.2" height="15.5" fill="#b5c6d3"/>
<rect x="804.8" y="57" width="1.2" height="15.5" fill="#b5c6d3"/>
<rect x="752.8" y="57.5" width="2" height="2" fill="#eef4f8"/>
<rect x="803.5" y="57.5" width="2" height="2" fill="#eef4f8"/>
<rect x="752.8" y="70" width="2" height="2" fill="#eef4f8"/>
<rect x="803.5" y="70" width="2" height="2" fill="#eef4f8"/>
<rect x="778.55" y="61.75" width="1.2" height="7.2" fill="#b4dfec"/>
<rect x="777.85" y="61.55" width="2.6" height="1.5" fill="#b4dfec"/>
<rect x="775.95" y="64.55" width="6.4" height="1" fill="#b4dfec"/>
<path d="M775.55,65.45 Q775.55,69.35000000000001 779.15,69.35000000000001 Q782.75,69.35000000000001 782.75,65.45" stroke="#b4dfec" stroke-width="1" fill="none"/>
<rect x="750.3" y="54.5" width="57.7" height="1" fill="#2b3452"/>
<rect x="750.3" y="74.5" width="57.7" height="1.1" fill="#2b3452"/>
<rect x="752.3" y="78.2" width="53.7" height="6.8" fill="#3c4868"/>
<rect x="754.303" y="80" width="3.4" height="3.2" fill="#0b0f1c"/>
<rect x="759.396" y="80" width="3.4" height="3.2" fill="#0b0f1c"/>
<rect x="767.266" y="80" width="3.4" height="3.2" fill="#0b0f1c"/>
<rect x="773.747" y="80" width="3.4" height="3.2" fill="#0b0f1c"/>
<rect x="778.839" y="80" width="3.4" height="3.2" fill="#0b0f1c"/>
<rect x="783.931" y="80" width="3.4" height="3.2" fill="#0b0f1c"/>
<rect x="789.023" y="80" width="3.4" height="3.2" fill="#0b0f1c"/>
<rect x="795.041" y="80" width="3.4" height="3.2" fill="#0b0f1c"/>
<rect x="800.134" y="80" width="3.4" height="3.2" fill="#0b0f1c"/>
<rect x="750.3" y="86.8" width="57.7" height="1" fill="#2b3452"/>
<rect x="752.3" y="90.5" width="53.7" height="16" fill="#9db2c4"/>
<rect x="752.3" y="90.5" width="53.7" height="1.5" fill="#c9d8e1"/>
<rect x="752.3" y="105.2" width="53.7" height="1.3" fill="#8198ae"/>
<rect x="752.3" y="90.5" width="1.2" height="16" fill="#b5c6d3"/>
<rect x="804.8" y="90.5" width="1.2" height="16" fill="#b5c6d3"/>
<rect x="752.8" y="91" width="2" height="2" fill="#eef4f8"/>
<rect x="803.5" y="91" width="2" height="2" fill="#eef4f8"/>
<rect x="752.8" y="104" width="2" height="2" fill="#eef4f8"/>
<rect x="803.5" y="104" width="2" height="2" fill="#eef4f8"/>
<rect x="778.55" y="95.5" width="1.2" height="7.2" fill="#b4dfec"/>
<rect x="777.85" y="95.3" width="2.6" height="1.5" fill="#b4dfec"/>
<rect x="775.95" y="98.3" width="6.4" height="1" fill="#b4dfec"/>
<path d="M775.55,99.2 Q775.55,103.10000000000001 779.15,103.10000000000001 Q782.75,103.10000000000001 782.75,99.2" stroke="#b4dfec" stroke-width="1" fill="none"/>
<rect x="750.3" y="108.5" width="57.7" height="1" fill="#2b3452"/>
<rect x="752.3" y="112.3" width="53.7" height="16.7" fill="#9db2c4"/>
<rect x="752.3" y="112.3" width="53.7" height="1.5" fill="#c9d8e1"/>
<rect x="752.3" y="127.7" width="53.7" height="1.3" fill="#8198ae"/>
<rect x="752.3" y="112.3" width="1.2" height="16.7" fill="#b5c6d3"/>
<rect x="804.8" y="112.3" width="1.2" height="16.7" fill="#b5c6d3"/>
<rect x="752.8" y="112.8" width="2" height="2" fill="#eef4f8"/>
<rect x="803.5" y="112.8" width="2" height="2" fill="#eef4f8"/>
<rect x="752.8" y="126.5" width="2" height="2" fill="#eef4f8"/>
<rect x="803.5" y="126.5" width="2" height="2" fill="#eef4f8"/>
<rect x="778.55" y="117.65" width="1.2" height="7.2" fill="#b4dfec"/>
<rect x="777.85" y="117.45" width="2.6" height="1.5" fill="#b4dfec"/>
<rect x="775.95" y="120.45" width="6.4" height="1" fill="#b4dfec"/>
<path d="M775.55,121.35000000000001 Q775.55,125.25000000000001 779.15,125.25000000000001 Q782.75,125.25000000000001 782.75,121.35000000000001" stroke="#b4dfec" stroke-width="1" fill="none"/>
<rect x="750.3" y="132.5" width="57.7" height="1" fill="#2b3452"/>
<rect x="752.3" y="138.2" width="53.7" height="6.8" fill="#3c4868"/>
<rect x="754.303" y="140" width="3.4" height="3.2" fill="#0b0f1c"/>
<rect x="759.396" y="140" width="3.4" height="3.2" fill="#0b0f1c"/>
<rect x="767.266" y="140" width="3.4" height="3.2" fill="#0b0f1c"/>
<rect x="773.747" y="140" width="3.4" height="3.2" fill="#0b0f1c"/>
<rect x="778.839" y="140" width="3.4" height="3.2" fill="#0b0f1c"/>
<rect x="783.931" y="140" width="3.4" height="3.2" fill="#0b0f1c"/>
<rect x="789.023" y="140" width="3.4" height="3.2" fill="#0b0f1c"/>
<rect x="795.041" y="140" width="3.4" height="3.2" fill="#0b0f1c"/>
<rect x="800.134" y="140" width="3.4" height="3.2" fill="#0b0f1c"/>
<rect x="750.3" y="146.8" width="57.7" height="1" fill="#2b3452"/>
<rect x="752.3" y="150.5" width="53.7" height="16" fill="#9db2c4"/>
<rect x="752.3" y="150.5" width="53.7" height="1.5" fill="#c9d8e1"/>
<rect x="752.3" y="165.2" width="53.7" height="1.3" fill="#8198ae"/>
<rect x="752.3" y="150.5" width="1.2" height="16" fill="#b5c6d3"/>
<rect x="804.8" y="150.5" width="1.2" height="16" fill="#b5c6d3"/>
<rect x="752.8" y="151" width="2" height="2" fill="#eef4f8"/>
<rect x="803.5" y="151" width="2" height="2" fill="#eef4f8"/>
<rect x="752.8" y="164" width="2" height="2" fill="#eef4f8"/>
<rect x="803.5" y="164" width="2" height="2" fill="#eef4f8"/>
<rect x="778.55" y="155.5" width="1.2" height="7.2" fill="#b4dfec"/>
<rect x="777.85" y="155.3" width="2.6" height="1.5" fill="#b4dfec"/>
<rect x="775.95" y="158.3" width="6.4" height="1" fill="#b4dfec"/>
<path d="M775.55,159.2 Q775.55,163.1 779.15,163.1 Q782.75,163.1 782.75,159.2" stroke="#b4dfec" stroke-width="1" fill="none"/>
<rect x="750.3" y="168.5" width="57.7" height="1" fill="#2b3452"/>
<rect x="752.3" y="172.3" width="53.7" height="16.7" fill="#9db2c4"/>
<rect x="752.3" y="172.3" width="53.7" height="1.5" fill="#c9d8e1"/>
<rect x="752.3" y="187.7" width="53.7" height="1.3" fill="#8198ae"/>
<rect x="752.3" y="172.3" width="1.2" height="16.7" fill="#b5c6d3"/>
<rect x="804.8" y="172.3" width="1.2" height="16.7" fill="#b5c6d3"/>
<rect x="752.8" y="172.8" width="2" height="2" fill="#eef4f8"/>
<rect x="803.5" y="172.8" width="2" height="2" fill="#eef4f8"/>
<rect x="752.8" y="186.5" width="2" height="2" fill="#eef4f8"/>
<rect x="803.5" y="186.5" width="2" height="2" fill="#eef4f8"/>
<rect x="778.55" y="177.65" width="1.2" height="7.2" fill="#b4dfec"/>
<rect x="777.85" y="177.45" width="2.6" height="1.5" fill="#b4dfec"/>
<rect x="775.95" y="180.45" width="6.4" height="1" fill="#b4dfec"/>
<path d="M775.55,181.35 Q775.55,185.25 779.15,185.25 Q782.75,185.25 782.75,181.35" stroke="#b4dfec" stroke-width="1" fill="none"/>
<rect x="750.3" y="192.5" width="57.7" height="1" fill="#2b3452"/>
<rect x="810.3" y="30" width="57.7" height="24" fill="#4a5878"/>
<rect x="811.8" y="31.5" width="54.7" height="21" fill="#2c3553"/>
<rect x="851.3" y="32.5" width="11" height="7" fill="#232a44"/>
<rect x="815.3" y="33" width="3" height="14" fill="#e03a3a"/>
<rect x="813.8" y="39" width="2.5" height="3" fill="#b85a5a"/>
<rect x="812.8" y="47" width="9" height="1.6" fill="#f2d21c"/>
<rect x="856.8" y="39.5" width="3" height="12.5" fill="#e03a3a"/>
<rect x="854.3" y="43" width="3" height="1.5" fill="#b85a5a"/>
<rect x="859.8" y="42.5" width="3" height="3" fill="#22e04a"/>
<rect x="862.8" y="43.2" width="3" height="1.1" fill="#7f8da8"/>
<path d="M822.3,38.5 L824.8,35.5 H844.3 L847.8,39.5 L851.3,42.5 H854.3" stroke="#8a97b0" stroke-width="1" fill="none"/>
<path d="M826.3,38 V51" stroke="#8a97b0" stroke-width="1" fill="none"/>
<path d="M835.8,38 V51 M835.8,45 H839.3 L841.8,47.5 H848.3 V51" stroke="#8a97b0" stroke-width="1" fill="none"/>
<rect x="823.3" y="36" width="2" height="1.6" fill="#2aa0e0"/>
<rect x="830.8" y="34.8" width="2" height="1.8" fill="#22d060"/>
<rect x="843.8" y="33.5" width="1.5" height="1.5" fill="#e0d030"/>
<rect x="823.8" y="43.2" width="2.3" height="2" fill="#22d060"/>
<rect x="833.8" y="43.2" width="2" height="2" fill="#d83a3a"/>
<rect x="850.3" y="42.6" width="1.6" height="1.6" fill="#d85a5a"/>
<rect x="812.3" y="57" width="53.7" height="15.5" fill="#9db2c4"/>
<rect x="812.3" y="57" width="53.7" height="1.5" fill="#c9d8e1"/>
<rect x="812.3" y="71.2" width="53.7" height="1.3" fill="#8198ae"/>
<rect x="812.3" y="57" width="1.2" height="15.5" fill="#b5c6d3"/>
<rect x="864.8" y="57" width="1.2" height="15.5" fill="#b5c6d3"/>
<rect x="812.8" y="57.5" width="2" height="2" fill="#eef4f8"/>
<rect x="863.5" y="57.5" width="2" height="2" fill="#eef4f8"/>
<rect x="812.8" y="70" width="2" height="2" fill="#eef4f8"/>
<rect x="863.5" y="70" width="2" height="2" fill="#eef4f8"/>
<rect x="838.55" y="61.75" width="1.2" height="7.2" fill="#b4dfec"/>
<rect x="837.85" y="61.55" width="2.6" height="1.5" fill="#b4dfec"/>
<rect x="835.95" y="64.55" width="6.4" height="1" fill="#b4dfec"/>
<path d="M835.55,65.45 Q835.55,69.35000000000001 839.15,69.35000000000001 Q842.75,69.35000000000001 842.75,65.45" stroke="#b4dfec" stroke-width="1" fill="none"/>
<rect x="810.3" y="54.5" width="57.7" height="1" fill="#2b3452"/>
<rect x="810.3" y="74.5" width="57.7" height="1.1" fill="#2b3452"/>
<rect x="812.3" y="78.2" width="53.7" height="6.8" fill="#3c4868"/>
<rect x="814.303" y="80" width="3.4" height="3.2" fill="#0b0f1c"/>
<rect x="819.396" y="80" width="3.4" height="3.2" fill="#0b0f1c"/>
<rect x="827.266" y="80" width="3.4" height="3.2" fill="#0b0f1c"/>
<rect x="833.747" y="80" width="3.4" height="3.2" fill="#0b0f1c"/>
<rect x="838.839" y="80" width="3.4" height="3.2" fill="#0b0f1c"/>
<rect x="843.931" y="80" width="3.4" height="3.2" fill="#0b0f1c"/>
<rect x="849.023" y="80" width="3.4" height="3.2" fill="#0b0f1c"/>
<rect x="855.041" y="80" width="3.4" height="3.2" fill="#0b0f1c"/>
<rect x="860.134" y="80" width="3.4" height="3.2" fill="#0b0f1c"/>
<rect x="810.3" y="86.8" width="57.7" height="1" fill="#2b3452"/>
<rect x="811.3" y="87.5" width="55.7" height="12.5" fill="#4a5878"/>
<rect x="812.5" y="88.7" width="53.3" height="10.1" fill="#2e3857"/>
<rect x="817.3" y="92.25" width="5" height="3" fill="#1fb468"/>
<rect x="825.8" y="92.25" width="14" height="3" fill="#1fb468"/>
<rect x="848.3" y="92.25" width="14" height="3" fill="#1fb468"/>
<rect x="811.3" y="103.2" width="55.7" height="12.8" fill="#4a5878"/>
<rect x="812.5" y="104.4" width="53.3" height="10.4" fill="#2e3857"/>
<rect x="818.3" y="108.1" width="5.5" height="3" fill="#f2605c"/>
<rect x="830.8" y="108.1" width="18" height="3" fill="#f2605c"/>
<rect x="852.8" y="108.1" width="3" height="3" fill="#f2605c"/>
<rect x="857.8" y="108.1" width="3" height="3" fill="#f2605c"/>
<rect x="862.8" y="108.1" width="2.5" height="3" fill="#f2605c"/>
<rect x="811.3" y="119.3" width="55.7" height="11.7" fill="#4a5878"/>
<rect x="812.5" y="120.5" width="53.3" height="9.3" fill="#2e3857"/>
<rect x="817.3" y="123.65" width="4" height="3" fill="#e8e040"/>
<rect x="825.8" y="123.65" width="19" height="3" fill="#e8e040"/>
<rect x="848.3" y="123.65" width="2.5" height="3" fill="#e8e040"/>
<rect x="853.3" y="123.65" width="2.5" height="3" fill="#e8e040"/>
<rect x="858.8" y="123.65" width="2.5" height="3" fill="#e8e040"/>
<rect x="810.3" y="132.5" width="57.7" height="1" fill="#2b3452"/>
<rect x="812.3" y="138.2" width="53.7" height="6.8" fill="#3c4868"/>
<rect x="814.303" y="140" width="3.4" height="3.2" fill="#0b0f1c"/>
<rect x="819.396" y="140" width="3.4" height="3.2" fill="#0b0f1c"/>
<rect x="827.266" y="140" width="3.4" height="3.2" fill="#0b0f1c"/>
<rect x="833.747" y="140" width="3.4" height="3.2" fill="#0b0f1c"/>
<rect x="838.839" y="140" width="3.4" height="3.2" fill="#0b0f1c"/>
<rect x="843.931" y="140" width="3.4" height="3.2" fill="#0b0f1c"/>
<rect x="849.023" y="140" width="3.4" height="3.2" fill="#0b0f1c"/>
<rect x="855.041" y="140" width="3.4" height="3.2" fill="#0b0f1c"/>
<rect x="860.134" y="140" width="3.4" height="3.2" fill="#0b0f1c"/>
<rect x="810.3" y="146.8" width="57.7" height="1" fill="#2b3452"/>
<rect x="812.3" y="150.5" width="53.7" height="16" fill="#9db2c4"/>
<rect x="812.3" y="150.5" width="53.7" height="1.5" fill="#c9d8e1"/>
<rect x="812.3" y="165.2" width="53.7" height="1.3" fill="#8198ae"/>
<rect x="812.3" y="150.5" width="1.2" height="16" fill="#b5c6d3"/>
<rect x="864.8" y="150.5" width="1.2" height="16" fill="#b5c6d3"/>
<rect x="812.8" y="151" width="2" height="2" fill="#eef4f8"/>
<rect x="863.5" y="151" width="2" height="2" fill="#eef4f8"/>
<rect x="812.8" y="164" width="2" height="2" fill="#eef4f8"/>
<rect x="863.5" y="164" width="2" height="2" fill="#eef4f8"/>
<rect x="838.55" y="155.5" width="1.2" height="7.2" fill="#b4dfec"/>
<rect x="837.85" y="155.3" width="2.6" height="1.5" fill="#b4dfec"/>
<rect x="835.95" y="158.3" width="6.4" height="1" fill="#b4dfec"/>
<path d="M835.55,159.2 Q835.55,163.1 839.15,163.1 Q842.75,163.1 842.75,159.2" stroke="#b4dfec" stroke-width="1" fill="none"/>
<rect x="810.3" y="168.5" width="57.7" height="1" fill="#2b3452"/>
<rect x="812.3" y="172.3" width="53.7" height="16.7" fill="#9db2c4"/>
<rect x="812.3" y="172.3" width="53.7" height="1.5" fill="#c9d8e1"/>
<rect x="812.3" y="187.7" width="53.7" height="1.3" fill="#8198ae"/>
<rect x="812.3" y="172.3" width="1.2" height="16.7" fill="#b5c6d3"/>
<rect x="864.8" y="172.3" width="1.2" height="16.7" fill="#b5c6d3"/>
<rect x="812.8" y="172.8" width="2" height="2" fill="#eef4f8"/>
<rect x="863.5" y="172.8" width="2" height="2" fill="#eef4f8"/>
<rect x="812.8" y="186.5" width="2" height="2" fill="#eef4f8"/>
<rect x="863.5" y="186.5" width="2" height="2" fill="#eef4f8"/>
<rect x="838.55" y="177.65" width="1.2" height="7.2" fill="#b4dfec"/>
<rect x="837.85" y="177.45" width="2.6" height="1.5" fill="#b4dfec"/>
<rect x="835.95" y="180.45" width="6.4" height="1" fill="#b4dfec"/>
<path d="M835.55,181.35 Q835.55,185.25 839.15,185.25 Q842.75,185.25 842.75,181.35" stroke="#b4dfec" stroke-width="1" fill="none"/>
<rect x="810.3" y="192.5" width="57.7" height="1" fill="#2b3452"/>
<rect x="870.3" y="30" width="57.7" height="24" fill="#4a5878"/>
<rect x="871.8" y="31.5" width="54.7" height="21" fill="#2c3553"/>
<rect x="911.3" y="32.5" width="11" height="7" fill="#232a44"/>
<rect x="875.3" y="33" width="3" height="14" fill="#e03a3a"/>
<rect x="873.8" y="39" width="2.5" height="3" fill="#b85a5a"/>
<rect x="872.8" y="47" width="9" height="1.6" fill="#f2d21c"/>
<rect x="916.8" y="39.5" width="3" height="12.5" fill="#e03a3a"/>
<rect x="914.3" y="43" width="3" height="1.5" fill="#b85a5a"/>
<rect x="919.8" y="42.5" width="3" height="3" fill="#22e04a"/>
<rect x="922.8" y="43.2" width="3" height="1.1" fill="#7f8da8"/>
<path d="M882.3,38.5 L884.8,35.5 H904.3 L907.8,39.5 L911.3,42.5 H914.3" stroke="#8a97b0" stroke-width="1" fill="none"/>
<path d="M886.3,38 V51" stroke="#8a97b0" stroke-width="1" fill="none"/>
<path d="M895.8,38 V51 M895.8,45 H899.3 L901.8,47.5 H908.3 V51" stroke="#8a97b0" stroke-width="1" fill="none"/>
<rect x="883.3" y="36" width="2" height="1.6" fill="#2aa0e0"/>
<rect x="890.8" y="34.8" width="2" height="1.8" fill="#22d060"/>
<rect x="903.8" y="33.5" width="1.5" height="1.5" fill="#e0d030"/>
<rect x="883.8" y="43.2" width="2.3" height="2" fill="#22d060"/>
<rect x="893.8" y="43.2" width="2" height="2" fill="#d83a3a"/>
<rect x="910.3" y="42.6" width="1.6" height="1.6" fill="#d85a5a"/>
<rect x="872.3" y="57" width="53.7" height="15.5" fill="#9db2c4"/>
<rect x="872.3" y="57" width="53.7" height="1.5" fill="#c9d8e1"/>
<rect x="872.3" y="71.2" width="53.7" height="1.3" fill="#8198ae"/>
<rect x="872.3" y="57" width="1.2" height="15.5" fill="#b5c6d3"/>
<rect x="924.8" y="57" width="1.2" height="15.5" fill="#b5c6d3"/>
<rect x="872.8" y="57.5" width="2" height="2" fill="#eef4f8"/>
<rect x="923.5" y="57.5" width="2" height="2" fill="#eef4f8"/>
<rect x="872.8" y="70" width="2" height="2" fill="#eef4f8"/>
<rect x="923.5" y="70" width="2" height="2" fill="#eef4f8"/>
<rect x="898.55" y="61.75" width="1.2" height="7.2" fill="#b4dfec"/>
<rect x="897.85" y="61.55" width="2.6" height="1.5" fill="#b4dfec"/>
<rect x="895.95" y="64.55" width="6.4" height="1" fill="#b4dfec"/>
<path d="M895.55,65.45 Q895.55,69.35000000000001 899.15,69.35000000000001 Q902.75,69.35000000000001 902.75,65.45" stroke="#b4dfec" stroke-width="1" fill="none"/>
<rect x="870.3" y="54.5" width="57.7" height="1" fill="#2b3452"/>
<rect x="870.3" y="74.5" width="57.7" height="1.1" fill="#2b3452"/>
<rect x="872.3" y="78.2" width="53.7" height="6.8" fill="#3c4868"/>
<rect x="874.303" y="80" width="3.4" height="3.2" fill="#0b0f1c"/>
<rect x="879.396" y="80" width="3.4" height="3.2" fill="#0b0f1c"/>
<rect x="887.266" y="80" width="3.4" height="3.2" fill="#0b0f1c"/>
<rect x="893.747" y="80" width="3.4" height="3.2" fill="#0b0f1c"/>
<rect x="898.839" y="80" width="3.4" height="3.2" fill="#0b0f1c"/>
<rect x="903.931" y="80" width="3.4" height="3.2" fill="#0b0f1c"/>
<rect x="909.023" y="80" width="3.4" height="3.2" fill="#0b0f1c"/>
<rect x="915.041" y="80" width="3.4" height="3.2" fill="#0b0f1c"/>
<rect x="920.134" y="80" width="3.4" height="3.2" fill="#0b0f1c"/>
<rect x="870.3" y="86.8" width="57.7" height="1" fill="#2b3452"/>
<rect x="872.3" y="90.5" width="53.7" height="16" fill="#9db2c4"/>
<rect x="872.3" y="90.5" width="53.7" height="1.5" fill="#c9d8e1"/>
<rect x="872.3" y="105.2" width="53.7" height="1.3" fill="#8198ae"/>
<rect x="872.3" y="90.5" width="1.2" height="16" fill="#b5c6d3"/>
<rect x="924.8" y="90.5" width="1.2" height="16" fill="#b5c6d3"/>
<rect x="872.8" y="91" width="2" height="2" fill="#eef4f8"/>
<rect x="923.5" y="91" width="2" height="2" fill="#eef4f8"/>
<rect x="872.8" y="104" width="2" height="2" fill="#eef4f8"/>
<rect x="923.5" y="104" width="2" height="2" fill="#eef4f8"/>
<rect x="898.55" y="95.5" width="1.2" height="7.2" fill="#b4dfec"/>
<rect x="897.85" y="95.3" width="2.6" height="1.5" fill="#b4dfec"/>
<rect x="895.95" y="98.3" width="6.4" height="1" fill="#b4dfec"/>
<path d="M895.55,99.2 Q895.55,103.10000000000001 899.15,103.10000000000001 Q902.75,103.10000000000001 902.75,99.2" stroke="#b4dfec" stroke-width="1" fill="none"/>
<rect x="870.3" y="108.5" width="57.7" height="1" fill="#2b3452"/>
<rect x="872.3" y="112.3" width="53.7" height="16.7" fill="#9db2c4"/>
<rect x="872.3" y="112.3" width="53.7" height="1.5" fill="#c9d8e1"/>
<rect x="872.3" y="127.7" width="53.7" height="1.3" fill="#8198ae"/>
<rect x="872.3" y="112.3" width="1.2" height="16.7" fill="#b5c6d3"/>
<rect x="924.8" y="112.3" width="1.2" height="16.7" fill="#b5c6d3"/>
<rect x="872.8" y="112.8" width="2" height="2" fill="#eef4f8"/>
<rect x="923.5" y="112.8" width="2" height="2" fill="#eef4f8"/>
<rect x="872.8" y="126.5" width="2" height="2" fill="#eef4f8"/>
<rect x="923.5" y="126.5" width="2" height="2" fill="#eef4f8"/>
<rect x="898.55" y="117.65" width="1.2" height="7.2" fill="#b4dfec"/>
<rect x="897.85" y="117.45" width="2.6" height="1.5" fill="#b4dfec"/>
<rect x="895.95" y="120.45" width="6.4" height="1" fill="#b4dfec"/>
<path d="M895.55,121.35000000000001 Q895.55,125.25000000000001 899.15,125.25000000000001 Q902.75,125.25000000000001 902.75,121.35000000000001" stroke="#b4dfec" stroke-width="1" fill="none"/>
<rect x="870.3" y="132.5" width="57.7" height="1" fill="#2b3452"/>
<rect x="872.3" y="138.2" width="53.7" height="6.8" fill="#3c4868"/>
<rect x="874.303" y="140" width="3.4" height="3.2" fill="#0b0f1c"/>
<rect x="879.396" y="140" width="3.4" height="3.2" fill="#0b0f1c"/>
<rect x="887.266" y="140" width="3.4" height="3.2" fill="#0b0f1c"/>
<rect x="893.747" y="140" width="3.4" height="3.2" fill="#0b0f1c"/>
<rect x="898.839" y="140" width="3.4" height="3.2" fill="#0b0f1c"/>
<rect x="903.931" y="140" width="3.4" height="3.2" fill="#0b0f1c"/>
<rect x="909.023" y="140" width="3.4" height="3.2" fill="#0b0f1c"/>
<rect x="915.041" y="140" width="3.4" height="3.2" fill="#0b0f1c"/>
<rect x="920.134" y="140" width="3.4" height="3.2" fill="#0b0f1c"/>
<rect x="870.3" y="146.8" width="57.7" height="1" fill="#2b3452"/>
<rect x="872.3" y="150.5" width="53.7" height="16" fill="#9db2c4"/>
<rect x="872.3" y="150.5" width="53.7" height="1.5" fill="#c9d8e1"/>
<rect x="872.3" y="165.2" width="53.7" height="1.3" fill="#8198ae"/>
<rect x="872.3" y="150.5" width="1.2" height="16" fill="#b5c6d3"/>
<rect x="924.8" y="150.5" width="1.2" height="16" fill="#b5c6d3"/>
<rect x="872.8" y="151" width="2" height="2" fill="#eef4f8"/>
<rect x="923.5" y="151" width="2" height="2" fill="#eef4f8"/>
<rect x="872.8" y="164" width="2" height="2" fill="#eef4f8"/>
<rect x="923.5" y="164" width="2" height="2" fill="#eef4f8"/>
<rect x="898.55" y="155.5" width="1.2" height="7.2" fill="#b4dfec"/>
<rect x="897.85" y="155.3" width="2.6" height="1.5" fill="#b4dfec"/>
<rect x="895.95" y="158.3" width="6.4" height="1" fill="#b4dfec"/>
<path d="M895.55,159.2 Q895.55,163.1 899.15,163.1 Q902.75,163.1 902.75,159.2" stroke="#b4dfec" stroke-width="1" fill="none"/>
<rect x="870.3" y="168.5" width="57.7" height="1" fill="#2b3452"/>
<rect x="872.3" y="172.3" width="53.7" height="16.7" fill="#9db2c4"/>
<rect x="872.3" y="172.3" width="53.7" height="1.5" fill="#c9d8e1"/>
<rect x="872.3" y="187.7" width="53.7" height="1.3" fill="#8198ae"/>
<rect x="872.3" y="172.3" width="1.2" height="16.7" fill="#b5c6d3"/>
<rect x="924.8" y="172.3" width="1.2" height="16.7" fill="#b5c6d3"/>
<rect x="872.8" y="172.8" width="2" height="2" fill="#eef4f8"/>
<rect x="923.5" y="172.8" width="2" height="2" fill="#eef4f8"/>
<rect x="872.8" y="186.5" width="2" height="2" fill="#eef4f8"/>
<rect x="923.5" y="186.5" width="2" height="2" fill="#eef4f8"/>
<rect x="898.55" y="177.65" width="1.2" height="7.2" fill="#b4dfec"/>
<rect x="897.85" y="177.45" width="2.6" height="1.5" fill="#b4dfec"/>
<rect x="895.95" y="180.45" width="6.4" height="1" fill="#b4dfec"/>
<path d="M895.55,181.35 Q895.55,185.25 899.15,185.25 Q902.75,185.25 902.75,181.35" stroke="#b4dfec" stroke-width="1" fill="none"/>
<rect x="870.3" y="192.5" width="57.7" height="1" fill="#2b3452"/>
<rect x="930.3" y="30" width="57.7" height="22" fill="#8496ac"/>
<rect x="932.3" y="32" width="53.7" height="18" fill="#70839b"/>
<rect x="930.3" y="50.5" width="57.7" height="1.5" fill="#5f7189"/>
<rect x="932.8" y="32.5" width="2.5" height="2.5" fill="#4a5a72"/>
<rect x="983" y="32.5" width="2.5" height="2.5" fill="#4a5a72"/>
<rect x="932.8" y="46.5" width="2.5" height="2.5" fill="#4a5a72"/>
<rect x="983" y="46.5" width="2.5" height="2.5" fill="#4a5a72"/>
<rect x="932.3" y="57" width="53.7" height="15.5" fill="#9db2c4"/>
<rect x="932.3" y="57" width="53.7" height="1.5" fill="#c9d8e1"/>
<rect x="932.3" y="71.2" width="53.7" height="1.3" fill="#8198ae"/>
<rect x="932.3" y="57" width="1.2" height="15.5" fill="#b5c6d3"/>
<rect x="984.8" y="57" width="1.2" height="15.5" fill="#b5c6d3"/>
<rect x="932.8" y="57.5" width="2" height="2" fill="#eef4f8"/>
<rect x="983.5" y="57.5" width="2" height="2" fill="#eef4f8"/>
<rect x="932.8" y="70" width="2" height="2" fill="#eef4f8"/>
<rect x="983.5" y="70" width="2" height="2" fill="#eef4f8"/>
<rect x="958.55" y="61.75" width="1.2" height="7.2" fill="#b4dfec"/>
<rect x="957.85" y="61.55" width="2.6" height="1.5" fill="#b4dfec"/>
<rect x="955.95" y="64.55" width="6.4" height="1" fill="#b4dfec"/>
<path d="M955.55,65.45 Q955.55,69.35000000000001 959.15,69.35000000000001 Q962.75,69.35000000000001 962.75,65.45" stroke="#b4dfec" stroke-width="1" fill="none"/>
<rect x="930.3" y="54.5" width="57.7" height="1" fill="#2b3452"/>
<rect x="930.3" y="74.5" width="57.7" height="1.1" fill="#2b3452"/>
<rect x="932.3" y="78.2" width="53.7" height="6.8" fill="#3c4868"/>
<rect x="934.303" y="80" width="3.4" height="3.2" fill="#0b0f1c"/>
<rect x="939.396" y="80" width="3.4" height="3.2" fill="#0b0f1c"/>
<rect x="947.266" y="80" width="3.4" height="3.2" fill="#0b0f1c"/>
<rect x="953.747" y="80" width="3.4" height="3.2" fill="#0b0f1c"/>
<rect x="958.839" y="80" width="3.4" height="3.2" fill="#0b0f1c"/>
<rect x="963.931" y="80" width="3.4" height="3.2" fill="#0b0f1c"/>
<rect x="969.023" y="80" width="3.4" height="3.2" fill="#0b0f1c"/>
<rect x="975.041" y="80" width="3.4" height="3.2" fill="#0b0f1c"/>
<rect x="980.134" y="80" width="3.4" height="3.2" fill="#0b0f1c"/>
<rect x="930.3" y="86.8" width="57.7" height="1" fill="#2b3452"/>
<rect x="931.3" y="87.5" width="55.7" height="12.5" fill="#4a5878"/>
<rect x="932.5" y="88.7" width="53.3" height="10.1" fill="#2e3857"/>
<rect x="937.3" y="92.25" width="5" height="3" fill="#1fb468"/>
<rect x="945.8" y="92.25" width="14" height="3" fill="#1fb468"/>
<rect x="968.3" y="92.25" width="14" height="3" fill="#1fb468"/>
<rect x="931.3" y="103.2" width="55.7" height="12.8" fill="#4a5878"/>
<rect x="932.5" y="104.4" width="53.3" height="10.4" fill="#2e3857"/>
<rect x="938.3" y="108.1" width="5.5" height="3" fill="#f2605c"/>
<rect x="950.8" y="108.1" width="18" height="3" fill="#f2605c"/>
<rect x="972.8" y="108.1" width="3" height="3" fill="#f2605c"/>
<rect x="977.8" y="108.1" width="3" height="3" fill="#f2605c"/>
<rect x="982.8" y="108.1" width="2.5" height="3" fill="#f2605c"/>
<rect x="931.3" y="119.3" width="55.7" height="11.7" fill="#4a5878"/>
<rect x="932.5" y="120.5" width="53.3" height="9.3" fill="#2e3857"/>
<rect x="937.3" y="123.65" width="4" height="3" fill="#e8e040"/>
<rect x="945.8" y="123.65" width="19" height="3" fill="#e8e040"/>
<rect x="968.3" y="123.65" width="2.5" height="3" fill="#e8e040"/>
<rect x="973.3" y="123.65" width="2.5" height="3" fill="#e8e040"/>
<rect x="978.8" y="123.65" width="2.5" height="3" fill="#e8e040"/>
<rect x="930.3" y="132.5" width="57.7" height="1" fill="#2b3452"/>
<rect x="932.3" y="138.2" width="53.7" height="6.8" fill="#3c4868"/>
<rect x="934.303" y="140" width="3.4" height="3.2" fill="#0b0f1c"/>
<rect x="939.396" y="140" width="3.4" height="3.2" fill="#0b0f1c"/>
<rect x="947.266" y="140" width="3.4" height="3.2" fill="#0b0f1c"/>
<rect x="953.747" y="140" width="3.4" height="3.2" fill="#0b0f1c"/>
<rect x="958.839" y="140" width="3.4" height="3.2" fill="#0b0f1c"/>
<rect x="963.931" y="140" width="3.4" height="3.2" fill="#0b0f1c"/>
<rect x="969.023" y="140" width="3.4" height="3.2" fill="#0b0f1c"/>
<rect x="975.041" y="140" width="3.4" height="3.2" fill="#0b0f1c"/>
<rect x="980.134" y="140" width="3.4" height="3.2" fill="#0b0f1c"/>
<rect x="930.3" y="146.8" width="57.7" height="1" fill="#2b3452"/>
<rect x="931.3" y="147.5" width="55.7" height="12.5" fill="#4a5878"/>
<rect x="932.5" y="148.7" width="53.3" height="10.1" fill="#2e3857"/>
<rect x="937.3" y="152.25" width="5" height="3" fill="#1fb468"/>
<rect x="945.8" y="152.25" width="14" height="3" fill="#1fb468"/>
<rect x="968.3" y="152.25" width="14" height="3" fill="#1fb468"/>
<rect x="931.3" y="163.2" width="55.7" height="12.8" fill="#4a5878"/>
<rect x="932.5" y="164.4" width="53.3" height="10.4" fill="#2e3857"/>
<rect x="938.3" y="168.1" width="5.5" height="3" fill="#f2605c"/>
<rect x="950.8" y="168.1" width="18" height="3" fill="#f2605c"/>
<rect x="972.8" y="168.1" width="3" height="3" fill="#f2605c"/>
<rect x="977.8" y="168.1" width="3" height="3" fill="#f2605c"/>
<rect x="982.8" y="168.1" width="2.5" height="3" fill="#f2605c"/>
<rect x="931.3" y="179.3" width="55.7" height="11.7" fill="#4a5878"/>
<rect x="932.5" y="180.5" width="53.3" height="9.3" fill="#2e3857"/>
<rect x="937.3" y="183.65" width="4" height="3" fill="#e8e040"/>
<rect x="945.8" y="183.65" width="19" height="3" fill="#e8e040"/>
<rect x="968.3" y="183.65" width="2.5" height="3" fill="#e8e040"/>
<rect x="973.3" y="183.65" width="2.5" height="3" fill="#e8e040"/>
<rect x="978.8" y="183.65" width="2.5" height="3" fill="#e8e040"/>
<rect x="930.3" y="192.5" width="57.7" height="1" fill="#2b3452"/>
<rect x="746" y="195.5" width="213" height="1.5" fill="#172034"/>
<rect x="749" y="196" width="210" height="2" fill="#172034"/>
<rect x="450" y="377" width="179" height="342" fill="#455a7a"/>
<rect x="450" y="440.6" width="179" height="26.4" fill="#313b5d"/>
<rect x="450" y="467" width="179" height="21" fill="#455d7e"/>
<rect x="450" y="500.6" width="179" height="26.4" fill="#313b5d"/>
<rect x="450" y="527" width="179" height="21" fill="#455d7e"/>
<rect x="450" y="560.6" width="179" height="26.4" fill="#313b5d"/>
<rect x="450" y="587" width="179" height="21" fill="#455d7e"/>
<rect x="450" y="620.6" width="179" height="26.4" fill="#313b5d"/>
<rect x="450" y="647" width="179" height="21" fill="#455d7e"/>
<rect x="450" y="680.6" width="179" height="26.4" fill="#313b5d"/>
<rect x="450" y="707" width="179" height="21" fill="#455d7e"/>
<rect x="450" y="388.5" width="2.6" height="330.5" fill="#6b86a6"/>
<rect x="505.2" y="388.5" width="2.3" height="330.5" fill="#6b86a6"/>
<rect x="510" y="388.5" width="2.3" height="330.5" fill="#6b86a6"/>
<rect x="625.3" y="388.5" width="2.3" height="330.5" fill="#6b86a6"/>
<rect x="450" y="428" width="179" height="0.8" fill="#4a5c7c"/>
<rect x="450" y="428.8" width="179" height="2.6" fill="#6f7988"/>
<clipPath id="c3"><rect x="450" y="431.4" width="179" height="6.6"/></clipPath>
<g clip-path="url(#c3)">
<rect x="450" y="431.4" width="179" height="6.6" fill="#496083"/>
<path d="M437.50,438 L442.50,431.4 L444.50,431.4 L439.50,438 Z M443.75,438 L448.75,431.4 L450.75,431.4 L445.75,438 Z M450.00,438 L455.00,431.4 L457.00,431.4 L452.00,438 Z M456.25,438 L461.25,431.4 L463.25,431.4 L458.25,438 Z M462.50,438 L467.50,431.4 L469.50,431.4 L464.50,438 Z M468.75,438 L473.75,431.4 L475.75,431.4 L470.75,438 Z M475.00,438 L480.00,431.4 L482.00,431.4 L477.00,438 Z M481.25,438 L486.25,431.4 L488.25,431.4 L483.25,438 Z M487.50,438 L492.50,431.4 L494.50,431.4 L489.50,438 Z M493.75,438 L498.75,431.4 L500.75,431.4 L495.75,438 Z M500.00,438 L505.00,431.4 L507.00,431.4 L502.00,438 Z M506.25,438 L511.25,431.4 L513.25,431.4 L508.25,438 Z M512.50,438 L517.50,431.4 L519.50,431.4 L514.50,438 Z M518.75,438 L523.75,431.4 L525.75,431.4 L520.75,438 Z M525.00,438 L530.00,431.4 L532.00,431.4 L527.00,438 Z M531.25,438 L536.25,431.4 L538.25,431.4 L533.25,438 Z M537.50,438 L542.50,431.4 L544.50,431.4 L539.50,438 Z M543.75,438 L548.75,431.4 L550.75,431.4 L545.75,438 Z M550.00,438 L555.00,431.4 L557.00,431.4 L552.00,438 Z M556.25,438 L561.25,431.4 L563.25,431.4 L558.25,438 Z M562.50,438 L567.50,431.4 L569.50,431.4 L564.50,438 Z M568.75,438 L573.75,431.4 L575.75,431.4 L570.75,438 Z M575.00,438 L580.00,431.4 L582.00,431.4 L577.00,438 Z M581.25,438 L586.25,431.4 L588.25,431.4 L583.25,438 Z M587.50,438 L592.50,431.4 L594.50,431.4 L589.50,438 Z M593.75,438 L598.75,431.4 L600.75,431.4 L595.75,438 Z M600.00,438 L605.00,431.4 L607.00,431.4 L602.00,438 Z M606.25,438 L611.25,431.4 L613.25,431.4 L608.25,438 Z M612.50,438 L617.50,431.4 L619.50,431.4 L614.50,438 Z M618.75,438 L623.75,431.4 L625.75,431.4 L620.75,438 Z M625.00,438 L630.00,431.4 L632.00,431.4 L627.00,438 Z M631.25,438 L636.25,431.4 L638.25,431.4 L633.25,438 Z" fill="#7f8693"/>
</g>
<rect x="450" y="438" width="179" height="2.6" fill="#6f7988"/>
<rect x="450" y="488" width="179" height="0.8" fill="#4a5c7c"/>
<rect x="450" y="488.8" width="179" height="2.6" fill="#6f7988"/>
<clipPath id="c4"><rect x="450" y="491.4" width="179" height="6.6"/></clipPath>
<g clip-path="url(#c4)">
<rect x="450" y="491.4" width="179" height="6.6" fill="#496083"/>
<path d="M437.50,498 L442.50,491.4 L444.50,491.4 L439.50,498 Z M443.75,498 L448.75,491.4 L450.75,491.4 L445.75,498 Z M450.00,498 L455.00,491.4 L457.00,491.4 L452.00,498 Z M456.25,498 L461.25,491.4 L463.25,491.4 L458.25,498 Z M462.50,498 L467.50,491.4 L469.50,491.4 L464.50,498 Z M468.75,498 L473.75,491.4 L475.75,491.4 L470.75,498 Z M475.00,498 L480.00,491.4 L482.00,491.4 L477.00,498 Z M481.25,498 L486.25,491.4 L488.25,491.4 L483.25,498 Z M487.50,498 L492.50,491.4 L494.50,491.4 L489.50,498 Z M493.75,498 L498.75,491.4 L500.75,491.4 L495.75,498 Z M500.00,498 L505.00,491.4 L507.00,491.4 L502.00,498 Z M506.25,498 L511.25,491.4 L513.25,491.4 L508.25,498 Z M512.50,498 L517.50,491.4 L519.50,491.4 L514.50,498 Z M518.75,498 L523.75,491.4 L525.75,491.4 L520.75,498 Z M525.00,498 L530.00,491.4 L532.00,491.4 L527.00,498 Z M531.25,498 L536.25,491.4 L538.25,491.4 L533.25,498 Z M537.50,498 L542.50,491.4 L544.50,491.4 L539.50,498 Z M543.75,498 L548.75,491.4 L550.75,491.4 L545.75,498 Z M550.00,498 L555.00,491.4 L557.00,491.4 L552.00,498 Z M556.25,498 L561.25,491.4 L563.25,491.4 L558.25,498 Z M562.50,498 L567.50,491.4 L569.50,491.4 L564.50,498 Z M568.75,498 L573.75,491.4 L575.75,491.4 L570.75,498 Z M575.00,498 L580.00,491.4 L582.00,491.4 L577.00,498 Z M581.25,498 L586.25,491.4 L588.25,491.4 L583.25,498 Z M587.50,498 L592.50,491.4 L594.50,491.4 L589.50,498 Z M593.75,498 L598.75,491.4 L600.75,491.4 L595.75,498 Z M600.00,498 L605.00,491.4 L607.00,491.4 L602.00,498 Z M606.25,498 L611.25,491.4 L613.25,491.4 L608.25,498 Z M612.50,498 L617.50,491.4 L619.50,491.4 L614.50,498 Z M618.75,498 L623.75,491.4 L625.75,491.4 L620.75,498 Z M625.00,498 L630.00,491.4 L632.00,491.4 L627.00,498 Z M631.25,498 L636.25,491.4 L638.25,491.4 L633.25,498 Z" fill="#7f8693"/>
</g>
<rect x="450" y="498" width="179" height="2.6" fill="#6f7988"/>
<rect x="450" y="548" width="179" height="0.8" fill="#4a5c7c"/>
<rect x="450" y="548.8" width="179" height="2.6" fill="#6f7988"/>
<clipPath id="c5"><rect x="450" y="551.4" width="179" height="6.6"/></clipPath>
<g clip-path="url(#c5)">
<rect x="450" y="551.4" width="179" height="6.6" fill="#496083"/>
<path d="M437.50,558 L442.50,551.4 L444.50,551.4 L439.50,558 Z M443.75,558 L448.75,551.4 L450.75,551.4 L445.75,558 Z M450.00,558 L455.00,551.4 L457.00,551.4 L452.00,558 Z M456.25,558 L461.25,551.4 L463.25,551.4 L458.25,558 Z M462.50,558 L467.50,551.4 L469.50,551.4 L464.50,558 Z M468.75,558 L473.75,551.4 L475.75,551.4 L470.75,558 Z M475.00,558 L480.00,551.4 L482.00,551.4 L477.00,558 Z M481.25,558 L486.25,551.4 L488.25,551.4 L483.25,558 Z M487.50,558 L492.50,551.4 L494.50,551.4 L489.50,558 Z M493.75,558 L498.75,551.4 L500.75,551.4 L495.75,558 Z M500.00,558 L505.00,551.4 L507.00,551.4 L502.00,558 Z M506.25,558 L511.25,551.4 L513.25,551.4 L508.25,558 Z M512.50,558 L517.50,551.4 L519.50,551.4 L514.50,558 Z M518.75,558 L523.75,551.4 L525.75,551.4 L520.75,558 Z M525.00,558 L530.00,551.4 L532.00,551.4 L527.00,558 Z M531.25,558 L536.25,551.4 L538.25,551.4 L533.25,558 Z M537.50,558 L542.50,551.4 L544.50,551.4 L539.50,558 Z M543.75,558 L548.75,551.4 L550.75,551.4 L545.75,558 Z M550.00,558 L555.00,551.4 L557.00,551.4 L552.00,558 Z M556.25,558 L561.25,551.4 L563.25,551.4 L558.25,558 Z M562.50,558 L567.50,551.4 L569.50,551.4 L564.50,558 Z M568.75,558 L573.75,551.4 L575.75,551.4 L570.75,558 Z M575.00,558 L580.00,551.4 L582.00,551.4 L577.00,558 Z M581.25,558 L586.25,551.4 L588.25,551.4 L583.25,558 Z M587.50,558 L592.50,551.4 L594.50,551.4 L589.50,558 Z M593.75,558 L598.75,551.4 L600.75,551.4 L595.75,558 Z M600.00,558 L605.00,551.4 L607.00,551.4 L602.00,558 Z M606.25,558 L611.25,551.4 L613.25,551.4 L608.25,558 Z M612.50,558 L617.50,551.4 L619.50,551.4 L614.50,558 Z M618.75,558 L623.75,551.4 L625.75,551.4 L620.75,558 Z M625.00,558 L630.00,551.4 L632.00,551.4 L627.00,558 Z M631.25,558 L636.25,551.4 L638.25,551.4 L633.25,558 Z" fill="#7f8693"/>
</g>
<rect x="450" y="558" width="179" height="2.6" fill="#6f7988"/>
<rect x="450" y="608" width="179" height="0.8" fill="#4a5c7c"/>
<rect x="450" y="608.8" width="179" height="2.6" fill="#6f7988"/>
<clipPath id="c6"><rect x="450" y="611.4" width="179" height="6.6"/></clipPath>
<g clip-path="url(#c6)">
<rect x="450" y="611.4" width="179" height="6.6" fill="#496083"/>
<path d="M437.50,618 L442.50,611.4 L444.50,611.4 L439.50,618 Z M443.75,618 L448.75,611.4 L450.75,611.4 L445.75,618 Z M450.00,618 L455.00,611.4 L457.00,611.4 L452.00,618 Z M456.25,618 L461.25,611.4 L463.25,611.4 L458.25,618 Z M462.50,618 L467.50,611.4 L469.50,611.4 L464.50,618 Z M468.75,618 L473.75,611.4 L475.75,611.4 L470.75,618 Z M475.00,618 L480.00,611.4 L482.00,611.4 L477.00,618 Z M481.25,618 L486.25,611.4 L488.25,611.4 L483.25,618 Z M487.50,618 L492.50,611.4 L494.50,611.4 L489.50,618 Z M493.75,618 L498.75,611.4 L500.75,611.4 L495.75,618 Z M500.00,618 L505.00,611.4 L507.00,611.4 L502.00,618 Z M506.25,618 L511.25,611.4 L513.25,611.4 L508.25,618 Z M512.50,618 L517.50,611.4 L519.50,611.4 L514.50,618 Z M518.75,618 L523.75,611.4 L525.75,611.4 L520.75,618 Z M525.00,618 L530.00,611.4 L532.00,611.4 L527.00,618 Z M531.25,618 L536.25,611.4 L538.25,611.4 L533.25,618 Z M537.50,618 L542.50,611.4 L544.50,611.4 L539.50,618 Z M543.75,618 L548.75,611.4 L550.75,611.4 L545.75,618 Z M550.00,618 L555.00,611.4 L557.00,611.4 L552.00,618 Z M556.25,618 L561.25,611.4 L563.25,611.4 L558.25,618 Z M562.50,618 L567.50,611.4 L569.50,611.4 L564.50,618 Z M568.75,618 L573.75,611.4 L575.75,611.4 L570.75,618 Z M575.00,618 L580.00,611.4 L582.00,611.4 L577.00,618 Z M581.25,618 L586.25,611.4 L588.25,611.4 L583.25,618 Z M587.50,618 L592.50,611.4 L594.50,611.4 L589.50,618 Z M593.75,618 L598.75,611.4 L600.75,611.4 L595.75,618 Z M600.00,618 L605.00,611.4 L607.00,611.4 L602.00,618 Z M606.25,618 L611.25,611.4 L613.25,611.4 L608.25,618 Z M612.50,618 L617.50,611.4 L619.50,611.4 L614.50,618 Z M618.75,618 L623.75,611.4 L625.75,611.4 L620.75,618 Z M625.00,618 L630.00,611.4 L632.00,611.4 L627.00,618 Z M631.25,618 L636.25,611.4 L638.25,611.4 L633.25,618 Z" fill="#7f8693"/>
</g>
<rect x="450" y="618" width="179" height="2.6" fill="#6f7988"/>
<rect x="450" y="668" width="179" height="0.8" fill="#4a5c7c"/>
<rect x="450" y="668.8" width="179" height="2.6" fill="#6f7988"/>
<clipPath id="c7"><rect x="450" y="671.4" width="179" height="6.6"/></clipPath>
<g clip-path="url(#c7)">
<rect x="450" y="671.4" width="179" height="6.6" fill="#496083"/>
<path d="M437.50,678 L442.50,671.4 L444.50,671.4 L439.50,678 Z M443.75,678 L448.75,671.4 L450.75,671.4 L445.75,678 Z M450.00,678 L455.00,671.4 L457.00,671.4 L452.00,678 Z M456.25,678 L461.25,671.4 L463.25,671.4 L458.25,678 Z M462.50,678 L467.50,671.4 L469.50,671.4 L464.50,678 Z M468.75,678 L473.75,671.4 L475.75,671.4 L470.75,678 Z M475.00,678 L480.00,671.4 L482.00,671.4 L477.00,678 Z M481.25,678 L486.25,671.4 L488.25,671.4 L483.25,678 Z M487.50,678 L492.50,671.4 L494.50,671.4 L489.50,678 Z M493.75,678 L498.75,671.4 L500.75,671.4 L495.75,678 Z M500.00,678 L505.00,671.4 L507.00,671.4 L502.00,678 Z M506.25,678 L511.25,671.4 L513.25,671.4 L508.25,678 Z M512.50,678 L517.50,671.4 L519.50,671.4 L514.50,678 Z M518.75,678 L523.75,671.4 L525.75,671.4 L520.75,678 Z M525.00,678 L530.00,671.4 L532.00,671.4 L527.00,678 Z M531.25,678 L536.25,671.4 L538.25,671.4 L533.25,678 Z M537.50,678 L542.50,671.4 L544.50,671.4 L539.50,678 Z M543.75,678 L548.75,671.4 L550.75,671.4 L545.75,678 Z M550.00,678 L555.00,671.4 L557.00,671.4 L552.00,678 Z M556.25,678 L561.25,671.4 L563.25,671.4 L558.25,678 Z M562.50,678 L567.50,671.4 L569.50,671.4 L564.50,678 Z M568.75,678 L573.75,671.4 L575.75,671.4 L570.75,678 Z M575.00,678 L580.00,671.4 L582.00,671.4 L577.00,678 Z M581.25,678 L586.25,671.4 L588.25,671.4 L583.25,678 Z M587.50,678 L592.50,671.4 L594.50,671.4 L589.50,678 Z M593.75,678 L598.75,671.4 L600.75,671.4 L595.75,678 Z M600.00,678 L605.00,671.4 L607.00,671.4 L602.00,678 Z M606.25,678 L611.25,671.4 L613.25,671.4 L608.25,678 Z M612.50,678 L617.50,671.4 L619.50,671.4 L614.50,678 Z M618.75,678 L623.75,671.4 L625.75,671.4 L620.75,678 Z M625.00,678 L630.00,671.4 L632.00,671.4 L627.00,678 Z M631.25,678 L636.25,671.4 L638.25,671.4 L633.25,678 Z" fill="#7f8693"/>
</g>
<rect x="450" y="678" width="179" height="2.6" fill="#6f7988"/>
<rect x="444" y="377" width="6" height="342" fill="#242d4b"/>
<rect x="449" y="375.5" width="180" height="2" fill="#172034"/>
<rect x="450" y="377.5" width="57.5" height="7" fill="#889fb8"/>
<rect x="450" y="384.5" width="57.5" height="2.3" fill="#8aa1ba"/>
<rect x="452" y="384.5" width="53" height="2.3" fill="#d0dde6"/>
<rect x="450" y="386.8" width="57.5" height="1.3" fill="#748aa5"/>
<rect x="450" y="388.1" width="57.5" height="1.8" fill="#1f2742"/>
<rect x="462" y="387.7" width="2.6" height="1.8" fill="#9fb4c8"/>
<rect x="493" y="387.7" width="2.6" height="1.8" fill="#9fb4c8"/>
<rect x="510" y="377.5" width="118" height="7" fill="#889fb8"/>
<rect x="510" y="384.5" width="118" height="2.3" fill="#8aa1ba"/>
<rect x="512" y="384.5" width="113.5" height="2.3" fill="#d0dde6"/>
<rect x="510" y="386.8" width="118" height="1.3" fill="#748aa5"/>
<rect x="510" y="388.1" width="118" height="1.8" fill="#1f2742"/>
<rect x="522" y="387.7" width="2.6" height="1.8" fill="#9fb4c8"/>
<rect x="553" y="387.7" width="2.6" height="1.8" fill="#9fb4c8"/>
<rect x="582" y="387.7" width="2.6" height="1.8" fill="#9fb4c8"/>
<rect x="613" y="387.7" width="2.6" height="1.8" fill="#9fb4c8"/>
<rect x="507.5" y="377" width="2.5" height="342" fill="#171d31"/>
<rect x="567.6" y="388.5" width="1.8" height="330.5" fill="#1a2136"/>
<rect x="627.6" y="377" width="3.4" height="342" fill="#1a2136"/>
<rect x="631" y="437" width="328" height="282" fill="#455a7a"/>
<rect x="631" y="500.6" width="328" height="26.4" fill="#313b5d"/>
<rect x="631" y="527" width="328" height="21" fill="#455d7e"/>
<rect x="631" y="560.6" width="328" height="26.4" fill="#313b5d"/>
<rect x="631" y="587" width="328" height="21" fill="#455d7e"/>
<rect x="631" y="620.6" width="328" height="26.4" fill="#313b5d"/>
<rect x="631" y="647" width="328" height="21" fill="#455d7e"/>
<rect x="631" y="680.6" width="328" height="26.4" fill="#313b5d"/>
<rect x="631" y="707" width="328" height="21" fill="#455d7e"/>
<rect x="631" y="448.5" width="2.2" height="270.5" fill="#6b86a6"/>
<rect x="631" y="488" width="328" height="0.8" fill="#4a5c7c"/>
<rect x="631" y="488.8" width="328" height="2.6" fill="#6f7988"/>
<clipPath id="c8"><rect x="631" y="491.4" width="328" height="6.6"/></clipPath>
<g clip-path="url(#c8)">
<rect x="631" y="491.4" width="328" height="6.6" fill="#496083"/>
<path d="M618.50,498 L623.50,491.4 L625.50,491.4 L620.50,498 Z M624.75,498 L629.75,491.4 L631.75,491.4 L626.75,498 Z M631.00,498 L636.00,491.4 L638.00,491.4 L633.00,498 Z M637.25,498 L642.25,491.4 L644.25,491.4 L639.25,498 Z M643.50,498 L648.50,491.4 L650.50,491.4 L645.50,498 Z M649.75,498 L654.75,491.4 L656.75,491.4 L651.75,498 Z M656.00,498 L661.00,491.4 L663.00,491.4 L658.00,498 Z M662.25,498 L667.25,491.4 L669.25,491.4 L664.25,498 Z M668.50,498 L673.50,491.4 L675.50,491.4 L670.50,498 Z M674.75,498 L679.75,491.4 L681.75,491.4 L676.75,498 Z M681.00,498 L686.00,491.4 L688.00,491.4 L683.00,498 Z M687.25,498 L692.25,491.4 L694.25,491.4 L689.25,498 Z M693.50,498 L698.50,491.4 L700.50,491.4 L695.50,498 Z M699.75,498 L704.75,491.4 L706.75,491.4 L701.75,498 Z M706.00,498 L711.00,491.4 L713.00,491.4 L708.00,498 Z M712.25,498 L717.25,491.4 L719.25,491.4 L714.25,498 Z M718.50,498 L723.50,491.4 L725.50,491.4 L720.50,498 Z M724.75,498 L729.75,491.4 L731.75,491.4 L726.75,498 Z M731.00,498 L736.00,491.4 L738.00,491.4 L733.00,498 Z M737.25,498 L742.25,491.4 L744.25,491.4 L739.25,498 Z M743.50,498 L748.50,491.4 L750.50,491.4 L745.50,498 Z M749.75,498 L754.75,491.4 L756.75,491.4 L751.75,498 Z M756.00,498 L761.00,491.4 L763.00,491.4 L758.00,498 Z M762.25,498 L767.25,491.4 L769.25,491.4 L764.25,498 Z M768.50,498 L773.50,491.4 L775.50,491.4 L770.50,498 Z M774.75,498 L779.75,491.4 L781.75,491.4 L776.75,498 Z M781.00,498 L786.00,491.4 L788.00,491.4 L783.00,498 Z M787.25,498 L792.25,491.4 L794.25,491.4 L789.25,498 Z M793.50,498 L798.50,491.4 L800.50,491.4 L795.50,498 Z M799.75,498 L804.75,491.4 L806.75,491.4 L801.75,498 Z M806.00,498 L811.00,491.4 L813.00,491.4 L808.00,498 Z M812.25,498 L817.25,491.4 L819.25,491.4 L814.25,498 Z M818.50,498 L823.50,491.4 L825.50,491.4 L820.50,498 Z M824.75,498 L829.75,491.4 L831.75,491.4 L826.75,498 Z M831.00,498 L836.00,491.4 L838.00,491.4 L833.00,498 Z M837.25,498 L842.25,491.4 L844.25,491.4 L839.25,498 Z M843.50,498 L848.50,491.4 L850.50,491.4 L845.50,498 Z M849.75,498 L854.75,491.4 L856.75,491.4 L851.75,498 Z M856.00,498 L861.00,491.4 L863.00,491.4 L858.00,498 Z M862.25,498 L867.25,491.4 L869.25,491.4 L864.25,498 Z M868.50,498 L873.50,491.4 L875.50,491.4 L870.50,498 Z M874.75,498 L879.75,491.4 L881.75,491.4 L876.75,498 Z M881.00,498 L886.00,491.4 L888.00,491.4 L883.00,498 Z M887.25,498 L892.25,491.4 L894.25,491.4 L889.25,498 Z M893.50,498 L898.50,491.4 L900.50,491.4 L895.50,498 Z M899.75,498 L904.75,491.4 L906.75,491.4 L901.75,498 Z M906.00,498 L911.00,491.4 L913.00,491.4 L908.00,498 Z M912.25,498 L917.25,491.4 L919.25,491.4 L914.25,498 Z M918.50,498 L923.50,491.4 L925.50,491.4 L920.50,498 Z M924.75,498 L929.75,491.4 L931.75,491.4 L926.75,498 Z M931.00,498 L936.00,491.4 L938.00,491.4 L933.00,498 Z M937.25,498 L942.25,491.4 L944.25,491.4 L939.25,498 Z M943.50,498 L948.50,491.4 L950.50,491.4 L945.50,498 Z M949.75,498 L954.75,491.4 L956.75,491.4 L951.75,498 Z M956.00,498 L961.00,491.4 L963.00,491.4 L958.00,498 Z M962.25,498 L967.25,491.4 L969.25,491.4 L964.25,498 Z" fill="#7f8693"/>
</g>
<rect x="631" y="498" width="328" height="2.6" fill="#6f7988"/>
<rect x="631" y="548" width="328" height="0.8" fill="#4a5c7c"/>
<rect x="631" y="548.8" width="328" height="2.6" fill="#6f7988"/>
<clipPath id="c9"><rect x="631" y="551.4" width="328" height="6.6"/></clipPath>
<g clip-path="url(#c9)">
<rect x="631" y="551.4" width="328" height="6.6" fill="#496083"/>
<path d="M618.50,558 L623.50,551.4 L625.50,551.4 L620.50,558 Z M624.75,558 L629.75,551.4 L631.75,551.4 L626.75,558 Z M631.00,558 L636.00,551.4 L638.00,551.4 L633.00,558 Z M637.25,558 L642.25,551.4 L644.25,551.4 L639.25,558 Z M643.50,558 L648.50,551.4 L650.50,551.4 L645.50,558 Z M649.75,558 L654.75,551.4 L656.75,551.4 L651.75,558 Z M656.00,558 L661.00,551.4 L663.00,551.4 L658.00,558 Z M662.25,558 L667.25,551.4 L669.25,551.4 L664.25,558 Z M668.50,558 L673.50,551.4 L675.50,551.4 L670.50,558 Z M674.75,558 L679.75,551.4 L681.75,551.4 L676.75,558 Z M681.00,558 L686.00,551.4 L688.00,551.4 L683.00,558 Z M687.25,558 L692.25,551.4 L694.25,551.4 L689.25,558 Z M693.50,558 L698.50,551.4 L700.50,551.4 L695.50,558 Z M699.75,558 L704.75,551.4 L706.75,551.4 L701.75,558 Z M706.00,558 L711.00,551.4 L713.00,551.4 L708.00,558 Z M712.25,558 L717.25,551.4 L719.25,551.4 L714.25,558 Z M718.50,558 L723.50,551.4 L725.50,551.4 L720.50,558 Z M724.75,558 L729.75,551.4 L731.75,551.4 L726.75,558 Z M731.00,558 L736.00,551.4 L738.00,551.4 L733.00,558 Z M737.25,558 L742.25,551.4 L744.25,551.4 L739.25,558 Z M743.50,558 L748.50,551.4 L750.50,551.4 L745.50,558 Z M749.75,558 L754.75,551.4 L756.75,551.4 L751.75,558 Z M756.00,558 L761.00,551.4 L763.00,551.4 L758.00,558 Z M762.25,558 L767.25,551.4 L769.25,551.4 L764.25,558 Z M768.50,558 L773.50,551.4 L775.50,551.4 L770.50,558 Z M774.75,558 L779.75,551.4 L781.75,551.4 L776.75,558 Z M781.00,558 L786.00,551.4 L788.00,551.4 L783.00,558 Z M787.25,558 L792.25,551.4 L794.25,551.4 L789.25,558 Z M793.50,558 L798.50,551.4 L800.50,551.4 L795.50,558 Z M799.75,558 L804.75,551.4 L806.75,551.4 L801.75,558 Z M806.00,558 L811.00,551.4 L813.00,551.4 L808.00,558 Z M812.25,558 L817.25,551.4 L819.25,551.4 L814.25,558 Z M818.50,558 L823.50,551.4 L825.50,551.4 L820.50,558 Z M824.75,558 L829.75,551.4 L831.75,551.4 L826.75,558 Z M831.00,558 L836.00,551.4 L838.00,551.4 L833.00,558 Z M837.25,558 L842.25,551.4 L844.25,551.4 L839.25,558 Z M843.50,558 L848.50,551.4 L850.50,551.4 L845.50,558 Z M849.75,558 L854.75,551.4 L856.75,551.4 L851.75,558 Z M856.00,558 L861.00,551.4 L863.00,551.4 L858.00,558 Z M862.25,558 L867.25,551.4 L869.25,551.4 L864.25,558 Z M868.50,558 L873.50,551.4 L875.50,551.4 L870.50,558 Z M874.75,558 L879.75,551.4 L881.75,551.4 L876.75,558 Z M881.00,558 L886.00,551.4 L888.00,551.4 L883.00,558 Z M887.25,558 L892.25,551.4 L894.25,551.4 L889.25,558 Z M893.50,558 L898.50,551.4 L900.50,551.4 L895.50,558 Z M899.75,558 L904.75,551.4 L906.75,551.4 L901.75,558 Z M906.00,558 L911.00,551.4 L913.00,551.4 L908.00,558 Z M912.25,558 L917.25,551.4 L919.25,551.4 L914.25,558 Z M918.50,558 L923.50,551.4 L925.50,551.4 L920.50,558 Z M924.75,558 L929.75,551.4 L931.75,551.4 L926.75,558 Z M931.00,558 L936.00,551.4 L938.00,551.4 L933.00,558 Z M937.25,558 L942.25,551.4 L944.25,551.4 L939.25,558 Z M943.50,558 L948.50,551.4 L950.50,551.4 L945.50,558 Z M949.75,558 L954.75,551.4 L956.75,551.4 L951.75,558 Z M956.00,558 L961.00,551.4 L963.00,551.4 L958.00,558 Z M962.25,558 L967.25,551.4 L969.25,551.4 L964.25,558 Z" fill="#7f8693"/>
</g>
<rect x="631" y="558" width="328" height="2.6" fill="#6f7988"/>
<rect x="631" y="608" width="328" height="0.8" fill="#4a5c7c"/>
<rect x="631" y="608.8" width="328" height="2.6" fill="#6f7988"/>
<clipPath id="c10"><rect x="631" y="611.4" width="328" height="6.6"/></clipPath>
<g clip-path="url(#c10)">
<rect x="631" y="611.4" width="328" height="6.6" fill="#496083"/>
<path d="M618.50,618 L623.50,611.4 L625.50,611.4 L620.50,618 Z M624.75,618 L629.75,611.4 L631.75,611.4 L626.75,618 Z M631.00,618 L636.00,611.4 L638.00,611.4 L633.00,618 Z M637.25,618 L642.25,611.4 L644.25,611.4 L639.25,618 Z M643.50,618 L648.50,611.4 L650.50,611.4 L645.50,618 Z M649.75,618 L654.75,611.4 L656.75,611.4 L651.75,618 Z M656.00,618 L661.00,611.4 L663.00,611.4 L658.00,618 Z M662.25,618 L667.25,611.4 L669.25,611.4 L664.25,618 Z M668.50,618 L673.50,611.4 L675.50,611.4 L670.50,618 Z M674.75,618 L679.75,611.4 L681.75,611.4 L676.75,618 Z M681.00,618 L686.00,611.4 L688.00,611.4 L683.00,618 Z M687.25,618 L692.25,611.4 L694.25,611.4 L689.25,618 Z M693.50,618 L698.50,611.4 L700.50,611.4 L695.50,618 Z M699.75,618 L704.75,611.4 L706.75,611.4 L701.75,618 Z M706.00,618 L711.00,611.4 L713.00,611.4 L708.00,618 Z M712.25,618 L717.25,611.4 L719.25,611.4 L714.25,618 Z M718.50,618 L723.50,611.4 L725.50,611.4 L720.50,618 Z M724.75,618 L729.75,611.4 L731.75,611.4 L726.75,618 Z M731.00,618 L736.00,611.4 L738.00,611.4 L733.00,618 Z M737.25,618 L742.25,611.4 L744.25,611.4 L739.25,618 Z M743.50,618 L748.50,611.4 L750.50,611.4 L745.50,618 Z M749.75,618 L754.75,611.4 L756.75,611.4 L751.75,618 Z M756.00,618 L761.00,611.4 L763.00,611.4 L758.00,618 Z M762.25,618 L767.25,611.4 L769.25,611.4 L764.25,618 Z M768.50,618 L773.50,611.4 L775.50,611.4 L770.50,618 Z M774.75,618 L779.75,611.4 L781.75,611.4 L776.75,618 Z M781.00,618 L786.00,611.4 L788.00,611.4 L783.00,618 Z M787.25,618 L792.25,611.4 L794.25,611.4 L789.25,618 Z M793.50,618 L798.50,611.4 L800.50,611.4 L795.50,618 Z M799.75,618 L804.75,611.4 L806.75,611.4 L801.75,618 Z M806.00,618 L811.00,611.4 L813.00,611.4 L808.00,618 Z M812.25,618 L817.25,611.4 L819.25,611.4 L814.25,618 Z M818.50,618 L823.50,611.4 L825.50,611.4 L820.50,618 Z M824.75,618 L829.75,611.4 L831.75,611.4 L826.75,618 Z M831.00,618 L836.00,611.4 L838.00,611.4 L833.00,618 Z M837.25,618 L842.25,611.4 L844.25,611.4 L839.25,618 Z M843.50,618 L848.50,611.4 L850.50,611.4 L845.50,618 Z M849.75,618 L854.75,611.4 L856.75,611.4 L851.75,618 Z M856.00,618 L861.00,611.4 L863.00,611.4 L858.00,618 Z M862.25,618 L867.25,611.4 L869.25,611.4 L864.25,618 Z M868.50,618 L873.50,611.4 L875.50,611.4 L870.50,618 Z M874.75,618 L879.75,611.4 L881.75,611.4 L876.75,618 Z M881.00,618 L886.00,611.4 L888.00,611.4 L883.00,618 Z M887.25,618 L892.25,611.4 L894.25,611.4 L889.25,618 Z M893.50,618 L898.50,611.4 L900.50,611.4 L895.50,618 Z M899.75,618 L904.75,611.4 L906.75,611.4 L901.75,618 Z M906.00,618 L911.00,611.4 L913.00,611.4 L908.00,618 Z M912.25,618 L917.25,611.4 L919.25,611.4 L914.25,618 Z M918.50,618 L923.50,611.4 L925.50,611.4 L920.50,618 Z M924.75,618 L929.75,611.4 L931.75,611.4 L926.75,618 Z M931.00,618 L936.00,611.4 L938.00,611.4 L933.00,618 Z M937.25,618 L942.25,611.4 L944.25,611.4 L939.25,618 Z M943.50,618 L948.50,611.4 L950.50,611.4 L945.50,618 Z M949.75,618 L954.75,611.4 L956.75,611.4 L951.75,618 Z M956.00,618 L961.00,611.4 L963.00,611.4 L958.00,618 Z M962.25,618 L967.25,611.4 L969.25,611.4 L964.25,618 Z" fill="#7f8693"/>
</g>
<rect x="631" y="618" width="328" height="2.6" fill="#6f7988"/>
<rect x="631" y="668" width="328" height="0.8" fill="#4a5c7c"/>
<rect x="631" y="668.8" width="328" height="2.6" fill="#6f7988"/>
<clipPath id="c11"><rect x="631" y="671.4" width="328" height="6.6"/></clipPath>
<g clip-path="url(#c11)">
<rect x="631" y="671.4" width="328" height="6.6" fill="#496083"/>
<path d="M618.50,678 L623.50,671.4 L625.50,671.4 L620.50,678 Z M624.75,678 L629.75,671.4 L631.75,671.4 L626.75,678 Z M631.00,678 L636.00,671.4 L638.00,671.4 L633.00,678 Z M637.25,678 L642.25,671.4 L644.25,671.4 L639.25,678 Z M643.50,678 L648.50,671.4 L650.50,671.4 L645.50,678 Z M649.75,678 L654.75,671.4 L656.75,671.4 L651.75,678 Z M656.00,678 L661.00,671.4 L663.00,671.4 L658.00,678 Z M662.25,678 L667.25,671.4 L669.25,671.4 L664.25,678 Z M668.50,678 L673.50,671.4 L675.50,671.4 L670.50,678 Z M674.75,678 L679.75,671.4 L681.75,671.4 L676.75,678 Z M681.00,678 L686.00,671.4 L688.00,671.4 L683.00,678 Z M687.25,678 L692.25,671.4 L694.25,671.4 L689.25,678 Z M693.50,678 L698.50,671.4 L700.50,671.4 L695.50,678 Z M699.75,678 L704.75,671.4 L706.75,671.4 L701.75,678 Z M706.00,678 L711.00,671.4 L713.00,671.4 L708.00,678 Z M712.25,678 L717.25,671.4 L719.25,671.4 L714.25,678 Z M718.50,678 L723.50,671.4 L725.50,671.4 L720.50,678 Z M724.75,678 L729.75,671.4 L731.75,671.4 L726.75,678 Z M731.00,678 L736.00,671.4 L738.00,671.4 L733.00,678 Z M737.25,678 L742.25,671.4 L744.25,671.4 L739.25,678 Z M743.50,678 L748.50,671.4 L750.50,671.4 L745.50,678 Z M749.75,678 L754.75,671.4 L756.75,671.4 L751.75,678 Z M756.00,678 L761.00,671.4 L763.00,671.4 L758.00,678 Z M762.25,678 L767.25,671.4 L769.25,671.4 L764.25,678 Z M768.50,678 L773.50,671.4 L775.50,671.4 L770.50,678 Z M774.75,678 L779.75,671.4 L781.75,671.4 L776.75,678 Z M781.00,678 L786.00,671.4 L788.00,671.4 L783.00,678 Z M787.25,678 L792.25,671.4 L794.25,671.4 L789.25,678 Z M793.50,678 L798.50,671.4 L800.50,671.4 L795.50,678 Z M799.75,678 L804.75,671.4 L806.75,671.4 L801.75,678 Z M806.00,678 L811.00,671.4 L813.00,671.4 L808.00,678 Z M812.25,678 L817.25,671.4 L819.25,671.4 L814.25,678 Z M818.50,678 L823.50,671.4 L825.50,671.4 L820.50,678 Z M824.75,678 L829.75,671.4 L831.75,671.4 L826.75,678 Z M831.00,678 L836.00,671.4 L838.00,671.4 L833.00,678 Z M837.25,678 L842.25,671.4 L844.25,671.4 L839.25,678 Z M843.50,678 L848.50,671.4 L850.50,671.4 L845.50,678 Z M849.75,678 L854.75,671.4 L856.75,671.4 L851.75,678 Z M856.00,678 L861.00,671.4 L863.00,671.4 L858.00,678 Z M862.25,678 L867.25,671.4 L869.25,671.4 L864.25,678 Z M868.50,678 L873.50,671.4 L875.50,671.4 L870.50,678 Z M874.75,678 L879.75,671.4 L881.75,671.4 L876.75,678 Z M881.00,678 L886.00,671.4 L888.00,671.4 L883.00,678 Z M887.25,678 L892.25,671.4 L894.25,671.4 L889.25,678 Z M893.50,678 L898.50,671.4 L900.50,671.4 L895.50,678 Z M899.75,678 L904.75,671.4 L906.75,671.4 L901.75,678 Z M906.00,678 L911.00,671.4 L913.00,671.4 L908.00,678 Z M912.25,678 L917.25,671.4 L919.25,671.4 L914.25,678 Z M918.50,678 L923.50,671.4 L925.50,671.4 L920.50,678 Z M924.75,678 L929.75,671.4 L931.75,671.4 L926.75,678 Z M931.00,678 L936.00,671.4 L938.00,671.4 L933.00,678 Z M937.25,678 L942.25,671.4 L944.25,671.4 L939.25,678 Z M943.50,678 L948.50,671.4 L950.50,671.4 L945.50,678 Z M949.75,678 L954.75,671.4 L956.75,671.4 L951.75,678 Z M956.00,678 L961.00,671.4 L963.00,671.4 L958.00,678 Z M962.25,678 L967.25,671.4 L969.25,671.4 L964.25,678 Z" fill="#7f8693"/>
</g>
<rect x="631" y="678" width="328" height="2.6" fill="#6f7988"/>
<rect x="629" y="377" width="330" height="60.5" fill="#1c2339"/>
<rect x="631" y="377.8" width="328" height="2.5" fill="#384360"/>
<rect x="631.5" y="380.3" width="327.5" height="53.5" fill="#000"/>
<rect x="631" y="437.5" width="328" height="7" fill="#889fb8"/>
<rect x="631" y="444.5" width="328" height="2.3" fill="#8aa1ba"/>
<rect x="633" y="444.5" width="323.5" height="2.3" fill="#d0dde6"/>
<rect x="631" y="446.8" width="328" height="1.3" fill="#748aa5"/>
<rect x="631" y="448.1" width="328" height="1.8" fill="#1f2742"/>
<rect x="643" y="447.7" width="2.6" height="1.8" fill="#9fb4c8"/>
<rect x="674" y="447.7" width="2.6" height="1.8" fill="#9fb4c8"/>
<rect x="703" y="447.7" width="2.6" height="1.8" fill="#9fb4c8"/>
<rect x="734" y="447.7" width="2.6" height="1.8" fill="#9fb4c8"/>
<rect x="763" y="447.7" width="2.6" height="1.8" fill="#9fb4c8"/>
<rect x="794" y="447.7" width="2.6" height="1.8" fill="#9fb4c8"/>
<rect x="823" y="447.7" width="2.6" height="1.8" fill="#9fb4c8"/>
<rect x="854" y="447.7" width="2.6" height="1.8" fill="#9fb4c8"/>
<rect x="883" y="447.7" width="2.6" height="1.8" fill="#9fb4c8"/>
<rect x="914" y="447.7" width="2.6" height="1.8" fill="#9fb4c8"/>
<rect x="943" y="447.7" width="2.6" height="1.8" fill="#9fb4c8"/>
<rect x="687.8" y="448.5" width="2.4" height="270.5" fill="#161c30"/>
<rect x="747.8" y="448.5" width="2.4" height="270.5" fill="#161c30"/>
<rect x="807.8" y="448.5" width="2.4" height="270.5" fill="#161c30"/>
<rect x="867.8" y="448.5" width="2.4" height="270.5" fill="#161c30"/>
<rect x="927.8" y="448.5" width="2.4" height="270.5" fill="#161c30"/>
<g fill="#e00818" stroke="#e00818" stroke-width="4" opacity="0.3" filter="url(#glow3)"><polygon points="646.6,86.8 647.8,83.3 651.6,83.0 659.2,88.9 666.8,83.0 669.5,82.7 673.8,87.7 673.3,89.2 666.2,96.2 673.3,104.4 673.0,106.1 668.6,110.5 667.4,109.9 659.8,102.9 652.8,108.5 648.4,109.1 646.4,106.7 646.6,102.0 651.6,96.2 646.6,90.3" stroke-width="1" stroke-linejoin="round"/></g>
<g fill="#ff1020" stroke="#ff1020" opacity="0.6" filter="url(#glow)"><polygon points="646.6,86.8 647.8,83.3 651.6,83.0 659.2,88.9 666.8,83.0 669.5,82.7 673.8,87.7 673.3,89.2 666.2,96.2 673.3,104.4 673.0,106.1 668.6,110.5 667.4,109.9 659.8,102.9 652.8,108.5 648.4,109.1 646.4,106.7 646.6,102.0 651.6,96.2 646.6,90.3" stroke-width="1" stroke-linejoin="round"/></g>
<g fill="#fe1426" stroke="#fe1426"><polygon points="646.6,86.8 647.8,83.3 651.6,83.0 659.2,88.9 666.8,83.0 669.5,82.7 673.8,87.7 673.3,89.2 666.2,96.2 673.3,104.4 673.0,106.1 668.6,110.5 667.4,109.9 659.8,102.9 652.8,108.5 648.4,109.1 646.4,106.7 646.6,102.0 651.6,96.2 646.6,90.3" stroke-width="1" stroke-linejoin="round"/></g>
<g fill="#e00818" stroke="#e00818" stroke-width="4" opacity="0.4" filter="url(#glow3)"><polygon points="646.6,387.1 647.8,383.6 651.6,383.3 659.2,389.2 666.8,383.3 669.5,383.0 673.8,388.0 673.3,389.5 666.2,396.5 673.3,404.7 673.0,406.4 668.6,410.8 667.4,410.2 659.8,403.2 652.8,408.8 648.4,409.4 646.4,407.0 646.6,402.3 651.6,396.5 646.6,390.6" stroke-width="1" stroke-linejoin="round"/></g>
<g fill="#ff1020" stroke="#ff1020" opacity="0.75" filter="url(#glow)"><polygon points="646.6,387.1 647.8,383.6 651.6,383.3 659.2,389.2 666.8,383.3 669.5,383.0 673.8,388.0 673.3,389.5 666.2,396.5 673.3,404.7 673.0,406.4 668.6,410.8 667.4,410.2 659.8,403.2 652.8,408.8 648.4,409.4 646.4,407.0 646.6,402.3 651.6,396.5 646.6,390.6" stroke-width="1" stroke-linejoin="round"/></g>
<g fill="#fe1426" stroke="#fe1426"><polygon points="646.6,387.1 647.8,383.6 651.6,383.3 659.2,389.2 666.8,383.3 669.5,383.0 673.8,388.0 673.3,389.5 666.2,396.5 673.3,404.7 673.0,406.4 668.6,410.8 667.4,410.2 659.8,403.2 652.8,408.8 648.4,409.4 646.4,407.0 646.6,402.3 651.6,396.5 646.6,390.6" stroke-width="1" stroke-linejoin="round"/></g>
<g fill="#e00818" stroke="#e00818" stroke-width="4" opacity="0.3" filter="url(#glow3)"><polygon points="706.9,86.8 708.1,83.3 711.9,83.0 719.5,88.9 727.1,83.0 729.8,82.7 734.1,87.7 733.6,89.2 726.5,96.2 733.6,104.4 733.3,106.1 728.9,110.5 727.7,109.9 720.1,102.9 713.1,108.5 708.7,109.1 706.7,106.7 706.9,102.0 711.9,96.2 706.9,90.3" stroke-width="1" stroke-linejoin="round"/></g>
<g fill="#ff1020" stroke="#ff1020" opacity="0.6" filter="url(#glow)"><polygon points="706.9,86.8 708.1,83.3 711.9,83.0 719.5,88.9 727.1,83.0 729.8,82.7 734.1,87.7 733.6,89.2 726.5,96.2 733.6,104.4 733.3,106.1 728.9,110.5 727.7,109.9 720.1,102.9 713.1,108.5 708.7,109.1 706.7,106.7 706.9,102.0 711.9,96.2 706.9,90.3" stroke-width="1" stroke-linejoin="round"/></g>
<g fill="#fe1426" stroke="#fe1426"><polygon points="706.9,86.8 708.1,83.3 711.9,83.0 719.5,88.9 727.1,83.0 729.8,82.7 734.1,87.7 733.6,89.2 726.5,96.2 733.6,104.4 733.3,106.1 728.9,110.5 727.7,109.9 720.1,102.9 713.1,108.5 708.7,109.1 706.7,106.7 706.9,102.0 711.9,96.2 706.9,90.3" stroke-width="1" stroke-linejoin="round"/></g>
<g fill="#e00818" stroke="#e00818" stroke-width="4" opacity="0.4" filter="url(#glow3)"><polygon points="706.9,387.1 708.1,383.6 711.9,383.3 719.5,389.2 727.1,383.3 729.8,383.0 734.1,388.0 733.6,389.5 726.5,396.5 733.6,404.7 733.3,406.4 728.9,410.8 727.7,410.2 720.1,403.2 713.1,408.8 708.7,409.4 706.7,407.0 706.9,402.3 711.9,396.5 706.9,390.6" stroke-width="1" stroke-linejoin="round"/></g>
<g fill="#ff1020" stroke="#ff1020" opacity="0.75" filter="url(#glow)"><polygon points="706.9,387.1 708.1,383.6 711.9,383.3 719.5,389.2 727.1,383.3 729.8,383.0 734.1,388.0 733.6,389.5 726.5,396.5 733.6,404.7 733.3,406.4 728.9,410.8 727.7,410.2 720.1,403.2 713.1,408.8 708.7,409.4 706.7,407.0 706.9,402.3 711.9,396.5 706.9,390.6" stroke-width="1" stroke-linejoin="round"/></g>
<g fill="#fe1426" stroke="#fe1426"><polygon points="706.9,387.1 708.1,383.6 711.9,383.3 719.5,389.2 727.1,383.3 729.8,383.0 734.1,388.0 733.6,389.5 726.5,396.5 733.6,404.7 733.3,406.4 728.9,410.8 727.7,410.2 720.1,403.2 713.1,408.8 708.7,409.4 706.7,407.0 706.9,402.3 711.9,396.5 706.9,390.6" stroke-width="1" stroke-linejoin="round"/></g>
<path d="M468,349 L462,351 L459.5,356 L461,362 L467,364 L470,360 Z" fill="#9b9b9e"/>
<path d="M459.5,356 L461,362 L465,363.5 L463,357 Z" fill="#d8d8da"/>
<path d="M493,348.5 Q496.5,354 494.5,358.5 Q493,361.5 490.5,363" stroke="#cfcfd2" stroke-width="2.6" fill="none" stroke-linecap="round"/>
<path d="M467.5,345 H492 L492.5,361 H467 Z" fill="#2c3138"/>
<rect x="479.3" y="349" width="1" height="12" fill="#1e2228"/>
<rect x="469" y="360" width="10" height="4.8" fill="#e4e1e0"/>
<rect x="480.8" y="360" width="9.7" height="4.8" fill="#e4e1e0"/>
<rect x="469" y="363.6" width="10" height="1.2" fill="#b9b6b6"/>
<rect x="480.8" y="363.6" width="9.7" height="1.2" fill="#b9b6b6"/>
<path d="M468,318 L491.5,318 L495,327 L498,344 L494,347.5 L466,347.5 L462,344 L465,327 Z" fill="#56565a"/>
<path d="M471,318 L489,318 L490,326 L480,330 L470,326 Z" fill="#4a4a4e"/>
<path d="M465,327 L462,344 L466,347.5 L469,333 Z" fill="#4b4b4f"/>
<path d="M495,327 L498,344 L494,347.5 L491,333 Z" fill="#4b4b4f"/>
<path d="M471.6,337.4 H474.6 L479.8,344.8 L485,337.4 H488.2" stroke="#f0f0f0" stroke-width="1.4" fill="none" stroke-linejoin="round"/>
<rect x="475.5" y="320" width="1" height="8.4" fill="#3e3e42"/>
<rect x="483" y="320" width="1" height="8.4" fill="#3e3e42"/>
<rect x="475.3" y="328.4" width="1.4" height="2.6" fill="#e6e6e6"/>
<rect x="482.8" y="328.4" width="1.4" height="2.6" fill="#e6e6e6"/>
<rect x="464.5" y="344" width="4" height="3.5" fill="#cf9c8c"/>
<rect x="491.5" y="344" width="4" height="3.5" fill="#cf9c8c"/>
<path d="M463.5,290 L466,288.5 L472,292.5 L478,291 L481,292 L486,292 L493,288.5 L496,290.5 L495.5,300 L493.5,305 L494.5,312 L490,317 L484,319.5 L476,319.5 L469,317 L465.5,312 L466.5,305 L464.5,300 Z" fill="#dbd8d9"/>
<path d="M465.5,291.5 L470,294.5 L467,300 Z" fill="#e6dcdc"/><path d="M494,291.5 L489.5,294.5 L492.5,300 Z" fill="#e6dcdc"/>
<path d="M469,308 L476,311 L480,312 L484,311 L491,308 L492,313 L488,317 L480,319 L472,317 L468,313 Z" fill="#e8e5e5"/>
<rect x="472.8" y="304.8" width="3.2" height="5" fill="#2fe036"/>
<rect x="483.8" y="304.8" width="3.2" height="5" fill="#2fe036"/>
<rect x="473.6" y="305.6" width="1.6" height="3.4" fill="#8af58a"/>
<rect x="484.6" y="305.6" width="1.6" height="3.4" fill="#8af58a"/>
<rect x="478.8" y="311.2" width="2.4" height="1.4" fill="#3b3b40"/>
<rect x="479.5" y="312.6" width="1" height="1.6" fill="#3b3b40"/>
<rect x="471" y="302.3" width="5.5" height="1.2" fill="#efeaea"/>
<rect x="483.5" y="302.3" width="5.5" height="1.2" fill="#efeaea"/>
<ellipse cx="-0.6" cy="70" rx="9.5" ry="18" fill="#18ace0" opacity=".9" filter="url(#glow3)"/>
<rect x="-5.1" y="56" width="9" height="29" rx="3" fill="#36d2f4" opacity=".9" filter="url(#glow1)"/>
<path d="M-1.0,55.5 L1.6999999999999997,60 V82 L-0.09999999999999998,84.5 L-2.9,82 V60 Z" fill="#ffffff"/>
<rect x="-2.9" y="68.8" width="4.6" height="1" fill="#9fe9fa"/>
<path d="M-10.1,59.5 l3,-1.2 l-0.6,-2.3 l2.2,2.6 l2.6,-0.6 l-2,2.2 l-2.4,-0.2 l-1.4,2 z" fill="#eafaff" stroke="#eafaff" stroke-width="0.7" stroke-linejoin="round"/>
<path d="M5.9,53 l2.2,1.6 l1.8,-1.4 l-0.6,3 l2,2.4 l-3,-1.2 z" fill="#eafaff" stroke="#eafaff" stroke-width="0.7" stroke-linejoin="round"/>
<path d="M8.6,60 l1.6,-1.8 l0.8,1 l-1.2,3.6 l-1.4,0.2 z" fill="#eafaff" stroke="#eafaff" stroke-width="0.7" stroke-linejoin="round"/>
<path d="M2.9,62.5 l3.5,1.5 l2.8,3 l-0.8,1.2 l-1.6,-2 l-4,-1.6 z" fill="#eafaff" stroke="#eafaff" stroke-width="0.7" stroke-linejoin="round"/>
<path d="M7.4,67.5 l1.4,1 l-0.4,2.6 l-1.4,-0.8 z" fill="#eafaff" stroke="#eafaff" stroke-width="0.7" stroke-linejoin="round"/>
<path d="M-8.6,69.5 l2.6,-0.6 l-0.2,5.4 l-2.8,1 l0.8,-2 l1,-0.4 l-0.2,-2 z" fill="#eafaff" stroke="#eafaff" stroke-width="0.7" stroke-linejoin="round"/>
<path d="M3.9,77 l5.5,0.8 l0.4,4.4 l-1.4,-0.2 l-0.6,-2.8 l-4,-0.6 z" fill="#eafaff" stroke="#eafaff" stroke-width="0.7" stroke-linejoin="round"/>
<path d="M-9.1,80.8 l6,-0.4 l0.2,1.6 l-3.6,0.6 l-0.6,3 l-1.4,-1.4 z" fill="#eafaff" stroke="#eafaff" stroke-width="0.7" stroke-linejoin="round"/>
<path d="M0.9,82 l2.6,1.4 l0.8,3.8 l-1.4,-1 l-0.4,3 l-1.4,-0.4 z" fill="#eafaff" stroke="#eafaff" stroke-width="0.7" stroke-linejoin="round"/>
<ellipse cx="59.4" cy="70" rx="9.5" ry="18" fill="#18ace0" opacity=".9" filter="url(#glow3)"/>
<rect x="54.9" y="56" width="9" height="29" rx="3" fill="#36d2f4" opacity=".9" filter="url(#glow1)"/>
<path d="M59.0,55.5 L61.699999999999996,60 V82 L59.9,84.5 L57.1,82 V60 Z" fill="#ffffff"/>
<rect x="57.1" y="68.8" width="4.6" height="1" fill="#9fe9fa"/>
<path d="M49.9,59.5 l3,-1.2 l-0.6,-2.3 l2.2,2.6 l2.6,-0.6 l-2,2.2 l-2.4,-0.2 l-1.4,2 z" fill="#eafaff" stroke="#eafaff" stroke-width="0.7" stroke-linejoin="round"/>
<path d="M65.9,53 l2.2,1.6 l1.8,-1.4 l-0.6,3 l2,2.4 l-3,-1.2 z" fill="#eafaff" stroke="#eafaff" stroke-width="0.7" stroke-linejoin="round"/>
<path d="M68.6,60 l1.6,-1.8 l0.8,1 l-1.2,3.6 l-1.4,0.2 z" fill="#eafaff" stroke="#eafaff" stroke-width="0.7" stroke-linejoin="round"/>
<path d="M62.9,62.5 l3.5,1.5 l2.8,3 l-0.8,1.2 l-1.6,-2 l-4,-1.6 z" fill="#eafaff" stroke="#eafaff" stroke-width="0.7" stroke-linejoin="round"/>
<path d="M67.4,67.5 l1.4,1 l-0.4,2.6 l-1.4,-0.8 z" fill="#eafaff" stroke="#eafaff" stroke-width="0.7" stroke-linejoin="round"/>
<path d="M51.4,69.5 l2.6,-0.6 l-0.2,5.4 l-2.8,1 l0.8,-2 l1,-0.4 l-0.2,-2 z" fill="#eafaff" stroke="#eafaff" stroke-width="0.7" stroke-linejoin="round"/>
<path d="M63.9,77 l5.5,0.8 l0.4,4.4 l-1.4,-0.2 l-0.6,-2.8 l-4,-0.6 z" fill="#eafaff" stroke="#eafaff" stroke-width="0.7" stroke-linejoin="round"/>
<path d="M50.9,80.8 l6,-0.4 l0.2,1.6 l-3.6,0.6 l-0.6,3 l-1.4,-1.4 z" fill="#eafaff" stroke="#eafaff" stroke-width="0.7" stroke-linejoin="round"/>
<path d="M60.9,82 l2.6,1.4 l0.8,3.8 l-1.4,-1 l-0.4,3 l-1.4,-0.4 z" fill="#eafaff" stroke="#eafaff" stroke-width="0.7" stroke-linejoin="round"/>
<ellipse cx="119.4" cy="70" rx="9.5" ry="18" fill="#18ace0" opacity=".9" filter="url(#glow3)"/>
<rect x="114.9" y="56" width="9" height="29" rx="3" fill="#36d2f4" opacity=".9" filter="url(#glow1)"/>
<path d="M119.0,55.5 L121.7,60 V82 L119.9,84.5 L117.10000000000001,82 V60 Z" fill="#ffffff"/>
<rect x="117.1" y="68.8" width="4.6" height="1" fill="#9fe9fa"/>
<path d="M109.9,59.5 l3,-1.2 l-0.6,-2.3 l2.2,2.6 l2.6,-0.6 l-2,2.2 l-2.4,-0.2 l-1.4,2 z" fill="#eafaff" stroke="#eafaff" stroke-width="0.7" stroke-linejoin="round"/>
<path d="M125.9,53 l2.2,1.6 l1.8,-1.4 l-0.6,3 l2,2.4 l-3,-1.2 z" fill="#eafaff" stroke="#eafaff" stroke-width="0.7" stroke-linejoin="round"/>
<path d="M128.6,60 l1.6,-1.8 l0.8,1 l-1.2,3.6 l-1.4,0.2 z" fill="#eafaff" stroke="#eafaff" stroke-width="0.7" stroke-linejoin="round"/>
<path d="M122.9,62.5 l3.5,1.5 l2.8,3 l-0.8,1.2 l-1.6,-2 l-4,-1.6 z" fill="#eafaff" stroke="#eafaff" stroke-width="0.7" stroke-linejoin="round"/>
<path d="M127.4,67.5 l1.4,1 l-0.4,2.6 l-1.4,-0.8 z" fill="#eafaff" stroke="#eafaff" stroke-width="0.7" stroke-linejoin="round"/>
<path d="M111.4,69.5 l2.6,-0.6 l-0.2,5.4 l-2.8,1 l0.8,-2 l1,-0.4 l-0.2,-2 z" fill="#eafaff" stroke="#eafaff" stroke-width="0.7" stroke-linejoin="round"/>
<path d="M123.9,77 l5.5,0.8 l0.4,4.4 l-1.4,-0.2 l-0.6,-2.8 l-4,-0.6 z" fill="#eafaff" stroke="#eafaff" stroke-width="0.7" stroke-linejoin="round"/>
<path d="M110.9,80.8 l6,-0.4 l0.2,1.6 l-3.6,0.6 l-0.6,3 l-1.4,-1.4 z" fill="#eafaff" stroke="#eafaff" stroke-width="0.7" stroke-linejoin="round"/>
<path d="M120.9,82 l2.6,1.4 l0.8,3.8 l-1.4,-1 l-0.4,3 l-1.4,-0.4 z" fill="#eafaff" stroke="#eafaff" stroke-width="0.7" stroke-linejoin="round"/>
<rect x="0" y="0" width="959" height="3" fill="#35667f"/>
</svg>
</body></html>
